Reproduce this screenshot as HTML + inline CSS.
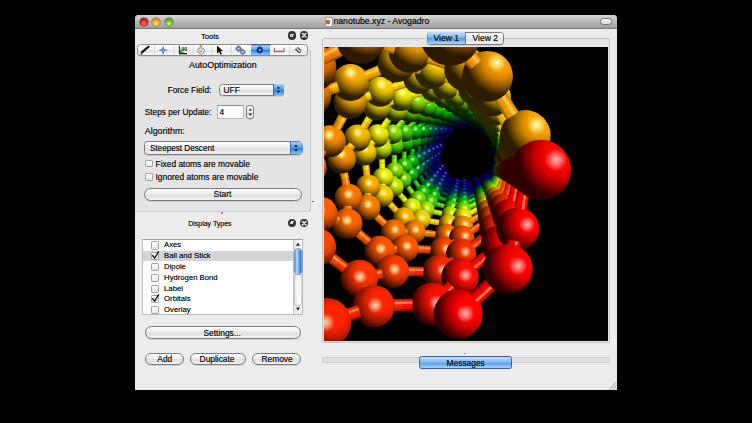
<!DOCTYPE html>
<html>
<head>
<meta charset="utf-8">
<title>nanotube.xyz - Avogadro</title>
<style>
html,body{margin:0;padding:0;background:#000;}
body{width:752px;height:423px;position:relative;overflow:hidden;font-family:"Liberation Sans",sans-serif;color:#111;}
.a{position:absolute;}
#win{left:135px;top:15px;width:482px;height:374.5px;background:#ececec;border-radius:4px 4px 0 0;}
#tbar{left:135px;top:15px;width:482px;height:12.5px;background:linear-gradient(#d6d6d6,#bcbcbc 45%,#a0a0a0);border-bottom:1px solid #7a7a7a;border-radius:4px 4px 0 0;}
.t{position:absolute;white-space:nowrap;line-height:10px;height:10px;color:#101010;text-shadow:0 0 0.5px rgba(0,0,0,.6);}
.tl{position:absolute;border-radius:50%;width:8.2px;height:8.2px;top:17.5px;}
.pill{position:absolute;border:0.8px solid #7c7c7c;background:linear-gradient(#ffffff,#ececec 48%,#dedede 52%,#f2f2f2);border-radius:7px;box-shadow:0 0.6px 0.6px rgba(0,0,0,.22);box-sizing:border-box;}
.cb{position:absolute;width:7px;height:7px;border:0.8px solid #a2a2a2;background:linear-gradient(#ffffff,#e4e4e4);border-radius:1.2px;box-sizing:border-box;}
.dk{position:absolute;width:8.4px;height:8.4px;border-radius:50%;background:#353535;}
</style>
</head>
<body>
<div class="a" id="win"></div>
<div class="a" id="tbar"></div>
<!-- traffic lights -->
<div class="tl" style="left:139.8px;background:radial-gradient(circle at 50% 70%,#ff8a80 0,#e0231c 45%,#8e0f0a 100%);box-shadow:0 0 0 0.5px #6b1410;"></div>
<div class="tl" style="left:152.3px;background:radial-gradient(circle at 50% 70%,#ffe9a0 0,#f0a820 45%,#a86508 100%);box-shadow:0 0 0 0.5px #8a5a10;"></div>
<div class="tl" style="left:165.1px;background:radial-gradient(circle at 50% 70%,#d8f5a0 0,#6cc030 45%,#2e7a10 100%);box-shadow:0 0 0 0.5px #3a6a1a;"></div>
<!-- title -->
<div class="a" style="left:324.5px;top:17px;width:6px;height:8px;background:#f4f4f4;border:0.5px solid #999;"></div>
<div class="a" style="left:326px;top:19.5px;width:3.5px;height:4px;background:#d0612a;border-radius:1px;"></div>
<div class="t" style="left:333.4px;top:16.3px;font-size:8.7px;">nanotube.xyz - Avogadro</div>
<div class="a" style="left:600px;top:18.4px;width:12px;height:6.4px;border-radius:3.2px;background:linear-gradient(#fafafa,#d8d8d8);border:0.7px solid #777;box-sizing:border-box;"></div>

<!-- Tools dock -->
<div class="t" style="left:200.9px;top:31.7px;font-size:7.71px;">Tools</div>
<div class="dk" style="left:287.5px;top:31.4px;"></div>
<div class="dk" style="left:300.1px;top:31.4px;"></div>
<div class="a" style="left:289.7px;top:34.4px;width:3.6px;height:2.6px;border:0.8px solid #e8e8e8;border-radius:0.8px;box-sizing:border-box;"></div>
<div class="a" style="left:290.6px;top:33.6px;width:3.4px;height:1px;background:#e8e8e8;"></div>
<svg class="a" style="left:300.1px;top:31.4px;" width="8.4" height="8.4" viewBox="0 0 8.4 8.4"><path d="M2.5 2.5L5.9 5.9M5.9 2.5L2.5 5.9" stroke="#f0f0f0" stroke-width="1.5" stroke-linecap="round"/></svg>

<!-- group box -->
<div class="a" style="left:135px;top:50px;width:175.5px;height:161.5px;background:#e4e4e4;border:0.8px solid #c9c9c9;border-top:none;border-left:none;border-radius:0 0 3px 0;box-sizing:border-box;"></div>
<!-- toolbar -->
<div class="a" style="left:137.3px;top:44.4px;width:170.8px;height:11.6px;background:linear-gradient(#ffffff,#f4f4f4 50%,#e6e6e6 52%,#f6f6f6);border:0.8px solid #8c8c8c;border-radius:3.5px;box-sizing:border-box;box-shadow:0 0.6px 0.6px rgba(0,0,0,.2);"></div>
<div class="a" style="left:251.3px;top:45.1px;width:19px;height:10.2px;background:linear-gradient(#bcdcf8,#5aa2ea 50%,#2f86e0 52%,#8cc8f8);"></div>
<svg class="a" style="left:135px;top:40px;" width="180" height="20" viewBox="135 40 180 20">
<g stroke="#c4c4c4" stroke-width="0.6"><path d="M154.6 45.2V55.2M174 45.2V55.2M193.3 45.2V55.2M212 45.2V55.2M231.4 45.2V55.2M289.7 45.2V55.2"/></g>
<rect x="251.3" y="44.4" width="19.5" height="0.9" fill="#2a3f9a"/>
<!-- pencil -->
<path d="M141.6 52.6L148.6 46.6" stroke="#151515" stroke-width="2.1" stroke-linecap="round"/>
<path d="M140.2 54.2L141.9 51.9L142.9 53.1z" fill="#333"/>
<path d="M140 54.6L143 54.2" stroke="#555" stroke-width="0.5"/>
<!-- navigate star -->
<path d="M163.1 45.2L164.2 49.1L168 50.2L164.2 51.3L163.1 55.2L162 51.3L158.2 50.2L162 49.1z" fill="#2f7df0"/>
<circle cx="163.1" cy="50.2" r="1" fill="#8ec0ff"/>
<!-- bond centric -->
<path d="M179.4 45.8V53.6H187" stroke="#1a1a1a" stroke-width="1.1" fill="none"/>
<path d="M180 49.5L184.2 53.1H180z" fill="#2fae2f"/>
<text x="181.3" y="50.8" font-family="Liberation Sans" font-size="5.4" font-weight="bold" fill="#222">90</text>
<!-- hand -->
<path d="M197.6 49.6c0-1.2 1.2-1.6 2-0.9l0.5-2.8c0.2-0.8 1.2-0.7 1.3 0.1l0.1 2.3 2.2 0.7c0.7 0.3 1 0.9 0.8 1.6l-0.8 2.2c-0.3 0.8-1 1.1-1.8 1.1h-1.7c-0.8 0-1.3-0.4-1.7-1z" fill="#e8e4dc" stroke="#555" stroke-width="0.6"/>
<path d="M199.4 51.2h2.6" stroke="#666" stroke-width="0.9"/>
<path d="M200.3 46.3l0.9 0.1" stroke="#c89030" stroke-width="1.2"/>
<!-- arrow cursor -->
<path d="M217 45.4L217 53.6L219 51.8L220.5 54.8L221.9 54.1L220.4 51.2L223 51z" fill="#0a0a0a"/>
<!-- gears -->
<g fill="#6f86b8" stroke="#3e5078" stroke-width="0.5"><circle cx="238.6" cy="48.6" r="2.5"/><circle cx="242.6" cy="52" r="2.3"/></g>
<g fill="#dfe6f4"><circle cx="238.6" cy="48.6" r="0.9"/><circle cx="242.6" cy="52" r="0.9"/></g>
<path d="M238.6 45.5v0.8M238.6 51v0.8M235.5 48.6h0.8M241 48.6h0.7M242.6 49v0.7M242.6 54.4v0.6M245 52h0.7" stroke="#3e5078" stroke-width="1"/>
<!-- selected gear -->
<g transform="translate(259.7 49.9)"><circle r="2.7" fill="#0f2a8c"/><g stroke="#0f2a8c" stroke-width="1.3"><path d="M0 -3.6V3.6M-3.6 0H3.6M-2.55 -2.55L2.55 2.55M-2.55 2.55L2.55 -2.55"/></g><circle r="1.1" fill="#6fb0f0"/></g>
<!-- ruler -->
<path d="M274.4 47.8V51.7H284V47.8" fill="none" stroke="#555" stroke-width="0.9"/>
<path d="M276.3 50.2V51.4M278.2 50.2V51.4M280.1 50.2V51.4M282 50.2V51.4" stroke="#e04848" stroke-width="0.7"/>
<!-- align -->
<path d="M295.6 49.2L299.6 52.8M297.4 47.4L300.8 50.4" stroke="#151515" stroke-width="1.1"/>
<path d="M295.2 50.6L296.4 48.4M299.8 53.2L301.2 50.8" stroke="#333" stroke-width="0.6"/>
</svg>


<div class="t" style="left:189px;top:59.6px;font-size:8.9px;">AutoOptimization</div>
<div class="t" style="left:167.7px;top:85.7px;font-size:8.28px;">Force Field:</div>
<div class="t" style="left:144.8px;top:107.7px;font-size:8.28px;">Steps per Update:</div>
<div class="t" style="left:144.8px;top:125.5px;font-size:8.89px;">Algorithm:</div>

<!-- UFF combo -->
<div class="pill" style="left:218.8px;top:83.8px;width:65.2px;height:12.6px;border-radius:3.5px;"></div>
<div class="a" style="left:272.8px;top:84.4px;width:10.6px;height:11.4px;border-radius:0 3px 3px 0;background:linear-gradient(#a8d0f8,#4a96e8 50%,#2a7ede 52%,#86c4f8);border-left:0.6px solid #3a6cb0;"></div>
<svg class="a" style="left:272.8px;top:84.4px;" width="10.6" height="11.4" viewBox="0 0 10.6 11.4"><path d="M3.4 4.6L5.4 2.4L7.4 4.6zM3.4 6.8L5.4 9L7.4 6.8z" fill="#101820"/></svg>
<div class="t" style="left:223.6px;top:85.3px;font-size:8.3px;">UFF</div>

<!-- spinbox -->
<div class="a" style="left:216.5px;top:105px;width:27px;height:14px;background:#fff;border:0.8px solid #b8b8b8;border-top-color:#8e8e8e;box-sizing:border-box;"></div>
<div class="t" style="left:219.6px;top:107.3px;font-size:8.3px;">4</div>
<div class="pill" style="left:245.7px;top:105px;width:8.6px;height:14px;border-radius:3px;"></div>
<svg class="a" style="left:245.7px;top:105px;" width="8.6" height="14" viewBox="0 0 8.6 14"><path d="M2.6 5.6L4.3 3.4L6 5.6zM2.6 8.6L4.3 10.8L6 8.6z" fill="#151515"/></svg>

<!-- Steepest Descent combo -->
<div class="pill" style="left:144.2px;top:141.3px;width:158px;height:13.3px;border-radius:3.5px;"></div>
<div class="a" style="left:289.6px;top:141.9px;width:12px;height:12.1px;border-radius:0 3px 3px 0;background:linear-gradient(#a8d0f8,#4a96e8 50%,#2a7ede 52%,#86c4f8);border-left:0.6px solid #3a6cb0;"></div>
<svg class="a" style="left:289.6px;top:141.9px;" width="12" height="12.1" viewBox="0 0 12 12.1"><path d="M4 5L6 2.7L8 5zM4 7.1L6 9.4L8 7.1z" fill="#101820"/></svg>
<div class="t" style="left:149.9px;top:143.5px;font-size:8.16px;">Steepest Descent</div>

<!-- checkboxes -->
<div class="cb" style="left:145.4px;top:159.5px;width:7.8px;height:7.8px;"></div>
<div class="t" style="left:155.5px;top:158.6px;font-size:8.42px;">Fixed atoms are movable</div>
<div class="cb" style="left:145.4px;top:172.8px;width:7.8px;height:7.8px;"></div>
<div class="t" style="left:155.5px;top:171.9px;font-size:8.46px;">Ignored atoms are movable</div>

<!-- Start -->
<div class="pill" style="left:144.2px;top:188px;width:158px;height:12.9px;"></div>
<div class="t" style="left:213.6px;top:189.1px;font-size:8.4px;">Start</div>

<!-- splitter marks -->
<div class="a" style="left:311.6px;top:200.6px;width:2.2px;height:1.6px;background:#444;border-radius:1px 1px 0 0;"></div>
<div class="a" style="left:221.3px;top:212.2px;width:2.2px;height:1.4px;background:#777;border-radius:1px 1px 0 0;"></div>
<div class="a" style="left:464.3px;top:352.6px;width:2.2px;height:1.4px;background:#777;border-radius:1px 1px 0 0;"></div>

<!-- Display Types dock -->
<div class="t" style="left:188.2px;top:218.6px;font-size:6.99px;">Display Types</div>
<div class="dk" style="left:287.5px;top:218.5px;"></div>
<div class="dk" style="left:300.1px;top:218.5px;"></div>
<div class="a" style="left:289.7px;top:221.5px;width:3.6px;height:2.6px;border:0.8px solid #e8e8e8;border-radius:0.8px;box-sizing:border-box;"></div>
<div class="a" style="left:290.6px;top:220.7px;width:3.4px;height:1px;background:#e8e8e8;"></div>
<svg class="a" style="left:300.1px;top:218.5px;" width="8.4" height="8.4" viewBox="0 0 8.4 8.4"><path d="M2.5 2.5L5.9 5.9M5.9 2.5L2.5 5.9" stroke="#f0f0f0" stroke-width="1.5" stroke-linecap="round"/></svg>

<!-- list -->
<div class="a" style="left:142.2px;top:238.6px;width:160.5px;height:76.6px;background:#fff;border:0.8px solid #b8b8b8;border-top-color:#a4a4a4;box-sizing:border-box;overflow:hidden;">
  <div class="a" style="left:0;top:11.3px;width:149.7px;height:10.4px;background:#d4d4d4;"></div>
  <div class="a" style="left:149.7px;top:0;width:10px;height:76px;background:linear-gradient(90deg,#e2e2e2,#fafafa 40%,#f4f4f4);border-left:0.6px solid #c8c8c8;"></div>
</div>
<div class="cb" style="left:150.8px;top:241.3px;width:8.3px;height:8.3px;"></div>
<div class="t" style="left:164.1px;top:240.3px;font-size:7.7px;">Axes</div>
<div class="cb" style="left:150.8px;top:252.1px;width:8.3px;height:8.3px;"></div>
<svg class="a" style="left:150px;top:250.2px;" width="11" height="11" viewBox="0 0 11 11"><path d="M2.6 5.6L4.6 8.2L8.6 1.6" fill="none" stroke="#111" stroke-width="1.3" stroke-linecap="round" stroke-linejoin="round"/></svg>
<div class="t" style="left:164.1px;top:251.1px;font-size:7.7px;">Ball and Stick</div>
<div class="cb" style="left:150.8px;top:262.9px;width:8.3px;height:8.3px;"></div>
<div class="t" style="left:164.1px;top:261.9px;font-size:7.7px;">Dipole</div>
<div class="cb" style="left:150.8px;top:273.8px;width:8.3px;height:8.3px;"></div>
<div class="t" style="left:164.1px;top:272.8px;font-size:7.7px;">Hydrogen Bond</div>
<div class="cb" style="left:150.8px;top:284.6px;width:8.3px;height:8.3px;"></div>
<div class="t" style="left:164.1px;top:283.6px;font-size:7.7px;">Label</div>
<div class="cb" style="left:150.8px;top:295.1px;width:8.3px;height:8.3px;"></div>
<svg class="a" style="left:150px;top:293.2px;" width="11" height="11" viewBox="0 0 11 11"><path d="M2.6 5.6L4.6 8.2L8.6 1.6" fill="none" stroke="#111" stroke-width="1.3" stroke-linecap="round" stroke-linejoin="round"/></svg>
<div class="t" style="left:164.1px;top:294.1px;font-size:7.7px;">Orbitals</div>
<div class="cb" style="left:150.8px;top:305.9px;width:8.3px;height:8.3px;"></div>
<div class="t" style="left:164.1px;top:304.9px;font-size:7.7px;">Overlay</div>
<!-- scrollbar parts -->
<svg class="a" style="left:292.7px;top:239px;" width="10" height="76" viewBox="0 0 10 76">
  <path d="M3 6.8L5 3.6L7 6.8z" fill="#222"/>
  <path d="M3 68.6L5 71.8L7 68.6z" fill="#222"/>
  <rect x="1.3" y="9.6" width="7.6" height="26" rx="3.8" fill="#fff" stroke="#2f62c0" stroke-width="0.8"/>
  <rect x="1.9" y="10.2" width="6.4" height="24.8" rx="3.2" fill="url(#thg)"/>
  <rect x="1.3" y="35" width="7.6" height="32" rx="3.8" fill="none" stroke="#b0b0b0" stroke-width="0.7"/>
  <defs><linearGradient id="thg" x1="0" x2="1" y1="0" y2="0"><stop offset="0" stop-color="#5a90e6"/><stop offset="0.35" stop-color="#c8e0ff"/><stop offset="0.6" stop-color="#6aa4f0"/><stop offset="1" stop-color="#2f6ad0"/></linearGradient></defs>
</svg>

<!-- buttons -->
<div class="pill" style="left:145.3px;top:326.4px;width:155.4px;height:12.2px;"></div>
<div class="t" style="left:203.5px;top:327.6px;font-size:8.4px;">Settings...</div>
<div class="pill" style="left:145.3px;top:352.5px;width:38.9px;height:12.8px;"></div>
<div class="t" style="left:157.3px;top:354px;font-size:8.4px;">Add</div>
<div class="pill" style="left:190.2px;top:352.5px;width:55.5px;height:12.8px;"></div>
<div class="t" style="left:199.6px;top:354px;font-size:8.4px;">Duplicate</div>
<div class="pill" style="left:251.7px;top:352.5px;width:49px;height:12.8px;"></div>
<div class="t" style="left:261.5px;top:354px;font-size:8.4px;">Remove</div>

<!-- view frame -->
<div class="a" style="left:322.3px;top:38.4px;width:287.5px;height:304.4px;background:#e6e6e6;border:0.8px solid #c4c4c4;border-radius:2px;box-sizing:border-box;"></div>
<!-- tabs -->
<div class="pill" style="left:426.9px;top:31.6px;width:77.3px;height:13px;border-radius:3.5px;"></div>
<div class="a" style="left:427.5px;top:32.2px;width:37.5px;height:11.8px;border-radius:3px 0 0 3px;background:linear-gradient(#c4e0fa,#7ab6f0 50%,#4e9ce8 52%,#a4d4fa);border-right:0.6px solid #5a82b8;"></div>
<div class="t" style="left:433.6px;top:33.2px;font-size:8.5px;">View 1</div>
<div class="t" style="left:472.6px;top:33.2px;font-size:8.5px;">View 2</div>

<!-- GL view -->
<div class="a" style="left:324px;top:47px;width:284.4px;height:294.4px;background:#000;overflow:hidden;">
<svg width="284.4" height="294.4" viewBox="0 0 284.4 294.4" style="position:absolute;left:0;top:0"><defs><radialGradient id="hl"><stop offset="0" stop-color="#fff" stop-opacity="0.62"/><stop offset="0.4" stop-color="#fff" stop-opacity="0.3"/><stop offset="1" stop-color="#fff" stop-opacity="0"/></radialGradient><radialGradient id="h2"><stop offset="0" stop-color="#fff" stop-opacity="0.3"/><stop offset="1" stop-color="#fff" stop-opacity="0"/></radialGradient><radialGradient id="s1" cx="0.730" cy="0.241" r="0.74"><stop offset="0" stop-color="#160059"/><stop offset="0.3" stop-color="#160059"/><stop offset="0.49" stop-color="#13004c"/><stop offset="0.68" stop-color="#0d0035"/><stop offset="0.81" stop-color="#080022"/><stop offset="0.93" stop-color="#040010"/></radialGradient><radialGradient id="h0s"><stop offset="0" stop-color="#7c66bf" stop-opacity="1"/><stop offset="0.35" stop-color="#7c66bf" stop-opacity="0.7"/><stop offset="1" stop-color="#7c66bf" stop-opacity="0"/></radialGradient><radialGradient id="s2" cx="0.734" cy="0.231" r="0.74"><stop offset="0" stop-color="#160059"/><stop offset="0.3" stop-color="#160059"/><stop offset="0.49" stop-color="#13004c"/><stop offset="0.68" stop-color="#0d0035"/><stop offset="0.81" stop-color="#080022"/><stop offset="0.93" stop-color="#040010"/></radialGradient><radialGradient id="s3" cx="0.749" cy="0.270" r="0.74"><stop offset="0" stop-color="#160059"/><stop offset="0.3" stop-color="#160059"/><stop offset="0.49" stop-color="#13004c"/><stop offset="0.68" stop-color="#0d0035"/><stop offset="0.81" stop-color="#080022"/><stop offset="0.93" stop-color="#040010"/></radialGradient><radialGradient id="s4" cx="0.760" cy="0.269" r="0.74"><stop offset="0" stop-color="#1a0055"/><stop offset="0.3" stop-color="#1a0055"/><stop offset="0.49" stop-color="#170048"/><stop offset="0.68" stop-color="#100032"/><stop offset="0.81" stop-color="#0a0020"/><stop offset="0.93" stop-color="#05000f"/></radialGradient><radialGradient id="h1s"><stop offset="0" stop-color="#8066bb" stop-opacity="1"/><stop offset="0.35" stop-color="#8066bb" stop-opacity="0.7"/><stop offset="1" stop-color="#8066bb" stop-opacity="0"/></radialGradient><radialGradient id="s5" cx="0.754" cy="0.221" r="0.74"><stop offset="0" stop-color="#12005e"/><stop offset="0.3" stop-color="#12005e"/><stop offset="0.49" stop-color="#0f0050"/><stop offset="0.68" stop-color="#0a0037"/><stop offset="0.81" stop-color="#070023"/><stop offset="0.93" stop-color="#030011"/></radialGradient><radialGradient id="h2s"><stop offset="0" stop-color="#7866c4" stop-opacity="1"/><stop offset="0.35" stop-color="#7866c4" stop-opacity="0.7"/><stop offset="1" stop-color="#7866c4" stop-opacity="0"/></radialGradient><radialGradient id="s6" cx="0.776" cy="0.254" r="0.74"><stop offset="0" stop-color="#1e0050"/><stop offset="0.3" stop-color="#1e0050"/><stop offset="0.49" stop-color="#1a0044"/><stop offset="0.68" stop-color="#12002f"/><stop offset="0.81" stop-color="#0b001e"/><stop offset="0.93" stop-color="#05000e"/></radialGradient><radialGradient id="h3s"><stop offset="0" stop-color="#8466b6" stop-opacity="1"/><stop offset="0.35" stop-color="#8466b6" stop-opacity="0.7"/><stop offset="1" stop-color="#8466b6" stop-opacity="0"/></radialGradient><radialGradient id="s7" cx="0.731" cy="0.258" r="0.74"><stop offset="0" stop-color="#12005e"/><stop offset="0.3" stop-color="#12005e"/><stop offset="0.49" stop-color="#0f0050"/><stop offset="0.68" stop-color="#0a0037"/><stop offset="0.81" stop-color="#070023"/><stop offset="0.93" stop-color="#030011"/></radialGradient><radialGradient id="s8" cx="0.777" cy="0.243" r="0.74"><stop offset="0" stop-color="#1e0050"/><stop offset="0.3" stop-color="#1e0050"/><stop offset="0.49" stop-color="#1a0044"/><stop offset="0.68" stop-color="#12002f"/><stop offset="0.81" stop-color="#0b001e"/><stop offset="0.93" stop-color="#05000e"/></radialGradient><radialGradient id="s9" cx="0.765" cy="0.224" r="0.74"><stop offset="0" stop-color="#12005e"/><stop offset="0.3" stop-color="#12005e"/><stop offset="0.49" stop-color="#0f0050"/><stop offset="0.68" stop-color="#0a0037"/><stop offset="0.81" stop-color="#070023"/><stop offset="0.93" stop-color="#030011"/></radialGradient><radialGradient id="s10" cx="0.728" cy="0.247" r="0.74"><stop offset="0" stop-color="#12005e"/><stop offset="0.3" stop-color="#12005e"/><stop offset="0.49" stop-color="#0f0050"/><stop offset="0.68" stop-color="#0a0037"/><stop offset="0.81" stop-color="#070023"/><stop offset="0.93" stop-color="#030011"/></radialGradient><radialGradient id="s11" cx="0.737" cy="0.227" r="0.74"><stop offset="0" stop-color="#0c0062"/><stop offset="0.3" stop-color="#0c0062"/><stop offset="0.49" stop-color="#0a0054"/><stop offset="0.68" stop-color="#07003a"/><stop offset="0.81" stop-color="#050025"/><stop offset="0.93" stop-color="#020012"/></radialGradient><radialGradient id="h4s"><stop offset="0" stop-color="#7266c8" stop-opacity="1"/><stop offset="0.35" stop-color="#7266c8" stop-opacity="0.7"/><stop offset="1" stop-color="#7266c8" stop-opacity="0"/></radialGradient><radialGradient id="s12" cx="0.744" cy="0.270" r="0.74"><stop offset="0" stop-color="#12005e"/><stop offset="0.3" stop-color="#12005e"/><stop offset="0.49" stop-color="#0f0050"/><stop offset="0.68" stop-color="#0a0037"/><stop offset="0.81" stop-color="#070023"/><stop offset="0.93" stop-color="#030011"/></radialGradient><radialGradient id="s13" cx="0.766" cy="0.267" r="0.74"><stop offset="0" stop-color="#160059"/><stop offset="0.3" stop-color="#160059"/><stop offset="0.49" stop-color="#13004c"/><stop offset="0.68" stop-color="#0d0035"/><stop offset="0.81" stop-color="#080022"/><stop offset="0.93" stop-color="#040010"/></radialGradient><radialGradient id="s14" cx="0.747" cy="0.222" r="0.74"><stop offset="0" stop-color="#0c0062"/><stop offset="0.3" stop-color="#0c0062"/><stop offset="0.49" stop-color="#0a0054"/><stop offset="0.68" stop-color="#07003a"/><stop offset="0.81" stop-color="#050025"/><stop offset="0.93" stop-color="#020012"/></radialGradient><radialGradient id="s15" cx="0.774" cy="0.259" r="0.74"><stop offset="0" stop-color="#1a0055"/><stop offset="0.3" stop-color="#1a0055"/><stop offset="0.49" stop-color="#170048"/><stop offset="0.68" stop-color="#100032"/><stop offset="0.81" stop-color="#0a0020"/><stop offset="0.93" stop-color="#05000f"/></radialGradient><radialGradient id="s16" cx="0.734" cy="0.264" r="0.74"><stop offset="0" stop-color="#0c0062"/><stop offset="0.3" stop-color="#0c0062"/><stop offset="0.49" stop-color="#0a0054"/><stop offset="0.68" stop-color="#07003a"/><stop offset="0.81" stop-color="#050025"/><stop offset="0.93" stop-color="#020012"/></radialGradient><radialGradient id="s17" cx="0.776" cy="0.236" r="0.74"><stop offset="0" stop-color="#060067"/><stop offset="0.3" stop-color="#060067"/><stop offset="0.49" stop-color="#050057"/><stop offset="0.68" stop-color="#04003d"/><stop offset="0.81" stop-color="#020027"/><stop offset="0.93" stop-color="#010012"/></radialGradient><radialGradient id="h5s"><stop offset="0" stop-color="#6c66cd" stop-opacity="1"/><stop offset="0.35" stop-color="#6c66cd" stop-opacity="0.7"/><stop offset="1" stop-color="#6c66cd" stop-opacity="0"/></radialGradient><radialGradient id="s18" cx="0.769" cy="0.227" r="0.74"><stop offset="0" stop-color="#060067"/><stop offset="0.3" stop-color="#060067"/><stop offset="0.49" stop-color="#050057"/><stop offset="0.68" stop-color="#04003d"/><stop offset="0.81" stop-color="#020027"/><stop offset="0.93" stop-color="#010012"/></radialGradient><radialGradient id="s19" cx="0.727" cy="0.242" r="0.74"><stop offset="0" stop-color="#060067"/><stop offset="0.3" stop-color="#060067"/><stop offset="0.49" stop-color="#050057"/><stop offset="0.68" stop-color="#04003d"/><stop offset="0.81" stop-color="#020027"/><stop offset="0.93" stop-color="#010012"/></radialGradient><radialGradient id="s20" cx="0.731" cy="0.231" r="0.74"><stop offset="0" stop-color="#00006b"/><stop offset="0.3" stop-color="#00006b"/><stop offset="0.49" stop-color="#00005b"/><stop offset="0.68" stop-color="#00003f"/><stop offset="0.81" stop-color="#000028"/><stop offset="0.93" stop-color="#000013"/></radialGradient><radialGradient id="h6s"><stop offset="0" stop-color="#6666d1" stop-opacity="1"/><stop offset="0.35" stop-color="#6666d1" stop-opacity="0.7"/><stop offset="1" stop-color="#6666d1" stop-opacity="0"/></radialGradient><radialGradient id="s21" cx="0.749" cy="0.272" r="0.74"><stop offset="0" stop-color="#0c0062"/><stop offset="0.3" stop-color="#0c0062"/><stop offset="0.49" stop-color="#0a0054"/><stop offset="0.68" stop-color="#07003a"/><stop offset="0.81" stop-color="#050025"/><stop offset="0.93" stop-color="#020012"/></radialGradient><radialGradient id="s22" cx="0.761" cy="0.271" r="0.74"><stop offset="0" stop-color="#12005e"/><stop offset="0.3" stop-color="#12005e"/><stop offset="0.49" stop-color="#0f0050"/><stop offset="0.68" stop-color="#0a0037"/><stop offset="0.81" stop-color="#070023"/><stop offset="0.93" stop-color="#030011"/></radialGradient><radialGradient id="s23" cx="0.752" cy="0.220" r="0.74"><stop offset="0" stop-color="#00006b"/><stop offset="0.3" stop-color="#00006b"/><stop offset="0.49" stop-color="#00005b"/><stop offset="0.68" stop-color="#00003f"/><stop offset="0.81" stop-color="#000028"/><stop offset="0.93" stop-color="#000013"/></radialGradient><radialGradient id="s24" cx="0.777" cy="0.254" r="0.74"><stop offset="0" stop-color="#160059"/><stop offset="0.3" stop-color="#160059"/><stop offset="0.49" stop-color="#13004c"/><stop offset="0.68" stop-color="#0d0035"/><stop offset="0.81" stop-color="#080022"/><stop offset="0.93" stop-color="#040010"/></radialGradient><radialGradient id="s25" cx="0.729" cy="0.260" r="0.74"><stop offset="0" stop-color="#060067"/><stop offset="0.3" stop-color="#060067"/><stop offset="0.49" stop-color="#050057"/><stop offset="0.68" stop-color="#04003d"/><stop offset="0.81" stop-color="#020027"/><stop offset="0.93" stop-color="#010012"/></radialGradient><radialGradient id="s26" cx="0.777" cy="0.242" r="0.74"><stop offset="0" stop-color="#1a0055"/><stop offset="0.3" stop-color="#1a0055"/><stop offset="0.49" stop-color="#170048"/><stop offset="0.68" stop-color="#100032"/><stop offset="0.81" stop-color="#0a0020"/><stop offset="0.93" stop-color="#05000f"/></radialGradient><radialGradient id="s27" cx="0.763" cy="0.223" r="0.74"><stop offset="0" stop-color="#00006b"/><stop offset="0.3" stop-color="#00006b"/><stop offset="0.49" stop-color="#00005b"/><stop offset="0.68" stop-color="#00003f"/><stop offset="0.81" stop-color="#000028"/><stop offset="0.93" stop-color="#000013"/></radialGradient><radialGradient id="s28" cx="0.725" cy="0.249" r="0.74"><stop offset="0" stop-color="#060067"/><stop offset="0.3" stop-color="#060067"/><stop offset="0.49" stop-color="#050057"/><stop offset="0.68" stop-color="#04003d"/><stop offset="0.81" stop-color="#020027"/><stop offset="0.93" stop-color="#010012"/></radialGradient><radialGradient id="s29" cx="0.734" cy="0.227" r="0.74"><stop offset="0" stop-color="#00006b"/><stop offset="0.3" stop-color="#00006b"/><stop offset="0.49" stop-color="#00005b"/><stop offset="0.68" stop-color="#00003f"/><stop offset="0.81" stop-color="#000028"/><stop offset="0.93" stop-color="#000013"/></radialGradient><radialGradient id="s30" cx="0.743" cy="0.272" r="0.74"><stop offset="0" stop-color="#060067"/><stop offset="0.3" stop-color="#060067"/><stop offset="0.49" stop-color="#050057"/><stop offset="0.68" stop-color="#04003d"/><stop offset="0.81" stop-color="#020027"/><stop offset="0.93" stop-color="#010012"/></radialGradient><radialGradient id="s31" cx="0.767" cy="0.269" r="0.74"><stop offset="0" stop-color="#0c0062"/><stop offset="0.3" stop-color="#0c0062"/><stop offset="0.49" stop-color="#0a0054"/><stop offset="0.68" stop-color="#07003a"/><stop offset="0.81" stop-color="#050025"/><stop offset="0.93" stop-color="#020012"/></radialGradient><radialGradient id="s32" cx="0.744" cy="0.221" r="0.74"><stop offset="0" stop-color="#000f66"/><stop offset="0.3" stop-color="#000f66"/><stop offset="0.49" stop-color="#000c57"/><stop offset="0.68" stop-color="#00093c"/><stop offset="0.81" stop-color="#000526"/><stop offset="0.93" stop-color="#000312"/></radialGradient><radialGradient id="h7s"><stop offset="0" stop-color="#6675cc" stop-opacity="1"/><stop offset="0.35" stop-color="#6675cc" stop-opacity="0.7"/><stop offset="1" stop-color="#6675cc" stop-opacity="0"/></radialGradient><radialGradient id="s33" cx="0.732" cy="0.266" r="0.74"><stop offset="0" stop-color="#060067"/><stop offset="0.3" stop-color="#060067"/><stop offset="0.49" stop-color="#050057"/><stop offset="0.68" stop-color="#04003d"/><stop offset="0.81" stop-color="#020027"/><stop offset="0.93" stop-color="#010012"/></radialGradient><radialGradient id="s34" cx="0.775" cy="0.259" r="0.74"><stop offset="0" stop-color="#12005e"/><stop offset="0.3" stop-color="#12005e"/><stop offset="0.49" stop-color="#0f0050"/><stop offset="0.68" stop-color="#0a0037"/><stop offset="0.81" stop-color="#070023"/><stop offset="0.93" stop-color="#030011"/></radialGradient><radialGradient id="s35" cx="0.768" cy="0.225" r="0.74"><stop offset="0" stop-color="#000f66"/><stop offset="0.3" stop-color="#000f66"/><stop offset="0.49" stop-color="#000c57"/><stop offset="0.68" stop-color="#00093c"/><stop offset="0.81" stop-color="#000526"/><stop offset="0.93" stop-color="#000312"/></radialGradient><radialGradient id="s36" cx="0.775" cy="0.235" r="0.74"><stop offset="0" stop-color="#000f66"/><stop offset="0.3" stop-color="#000f66"/><stop offset="0.49" stop-color="#000c57"/><stop offset="0.68" stop-color="#00093c"/><stop offset="0.81" stop-color="#000526"/><stop offset="0.93" stop-color="#000312"/></radialGradient><radialGradient id="s37" cx="0.724" cy="0.244" r="0.74"><stop offset="0" stop-color="#00006b"/><stop offset="0.3" stop-color="#00006b"/><stop offset="0.49" stop-color="#00005b"/><stop offset="0.68" stop-color="#00003f"/><stop offset="0.81" stop-color="#000028"/><stop offset="0.93" stop-color="#000013"/></radialGradient><radialGradient id="s38" cx="0.728" cy="0.232" r="0.74"><stop offset="0" stop-color="#000f66"/><stop offset="0.3" stop-color="#000f66"/><stop offset="0.49" stop-color="#000c57"/><stop offset="0.68" stop-color="#00093c"/><stop offset="0.81" stop-color="#000526"/><stop offset="0.93" stop-color="#000312"/></radialGradient><radialGradient id="s39" cx="0.749" cy="0.275" r="0.74"><stop offset="0" stop-color="#00006b"/><stop offset="0.3" stop-color="#00006b"/><stop offset="0.49" stop-color="#00005b"/><stop offset="0.68" stop-color="#00003f"/><stop offset="0.81" stop-color="#000028"/><stop offset="0.93" stop-color="#000013"/></radialGradient><radialGradient id="s40" cx="0.762" cy="0.272" r="0.74"><stop offset="0" stop-color="#060067"/><stop offset="0.3" stop-color="#060067"/><stop offset="0.49" stop-color="#050057"/><stop offset="0.68" stop-color="#04003d"/><stop offset="0.81" stop-color="#020027"/><stop offset="0.93" stop-color="#010012"/></radialGradient><radialGradient id="s41" cx="0.749" cy="0.219" r="0.74"><stop offset="0" stop-color="#000f66"/><stop offset="0.3" stop-color="#000f66"/><stop offset="0.49" stop-color="#000c57"/><stop offset="0.68" stop-color="#00093c"/><stop offset="0.81" stop-color="#000526"/><stop offset="0.93" stop-color="#000312"/></radialGradient><radialGradient id="s42" cx="0.778" cy="0.253" r="0.74"><stop offset="0" stop-color="#0c0062"/><stop offset="0.3" stop-color="#0c0062"/><stop offset="0.49" stop-color="#0a0054"/><stop offset="0.68" stop-color="#07003a"/><stop offset="0.81" stop-color="#050025"/><stop offset="0.93" stop-color="#020012"/></radialGradient><radialGradient id="s43" cx="0.727" cy="0.263" r="0.74"><stop offset="0" stop-color="#00006b"/><stop offset="0.3" stop-color="#00006b"/><stop offset="0.49" stop-color="#00005b"/><stop offset="0.68" stop-color="#00003f"/><stop offset="0.81" stop-color="#000028"/><stop offset="0.93" stop-color="#000013"/></radialGradient><radialGradient id="s44" cx="0.761" cy="0.221" r="0.74"><stop offset="0" stop-color="#000f66"/><stop offset="0.3" stop-color="#000f66"/><stop offset="0.49" stop-color="#000c57"/><stop offset="0.68" stop-color="#00093c"/><stop offset="0.81" stop-color="#000526"/><stop offset="0.93" stop-color="#000312"/></radialGradient><radialGradient id="s45" cx="0.778" cy="0.240" r="0.74"><stop offset="0" stop-color="#000f66"/><stop offset="0.3" stop-color="#000f66"/><stop offset="0.49" stop-color="#000c57"/><stop offset="0.68" stop-color="#00093c"/><stop offset="0.81" stop-color="#000526"/><stop offset="0.93" stop-color="#000312"/></radialGradient><radialGradient id="s46" cx="0.722" cy="0.251" r="0.74"><stop offset="0" stop-color="#000f66"/><stop offset="0.3" stop-color="#000f66"/><stop offset="0.49" stop-color="#000c57"/><stop offset="0.68" stop-color="#00093c"/><stop offset="0.81" stop-color="#000526"/><stop offset="0.93" stop-color="#000312"/></radialGradient><radialGradient id="s47" cx="0.730" cy="0.227" r="0.74"><stop offset="0" stop-color="#001f5e"/><stop offset="0.3" stop-color="#001f5e"/><stop offset="0.49" stop-color="#001b50"/><stop offset="0.68" stop-color="#001237"/><stop offset="0.81" stop-color="#000c23"/><stop offset="0.93" stop-color="#000611"/></radialGradient><radialGradient id="h8s"><stop offset="0" stop-color="#6685c4" stop-opacity="1"/><stop offset="0.35" stop-color="#6685c4" stop-opacity="0.7"/><stop offset="1" stop-color="#6685c4" stop-opacity="0"/></radialGradient><radialGradient id="s48" cx="0.743" cy="0.275" r="0.74"><stop offset="0" stop-color="#000f66"/><stop offset="0.3" stop-color="#000f66"/><stop offset="0.49" stop-color="#000c57"/><stop offset="0.68" stop-color="#00093c"/><stop offset="0.81" stop-color="#000526"/><stop offset="0.93" stop-color="#000312"/></radialGradient><radialGradient id="s49" cx="0.741" cy="0.220" r="0.74"><stop offset="0" stop-color="#001f5e"/><stop offset="0.3" stop-color="#001f5e"/><stop offset="0.49" stop-color="#001b50"/><stop offset="0.68" stop-color="#001237"/><stop offset="0.81" stop-color="#000c23"/><stop offset="0.93" stop-color="#000611"/></radialGradient><radialGradient id="s50" cx="0.768" cy="0.270" r="0.74"><stop offset="0" stop-color="#00006b"/><stop offset="0.3" stop-color="#00006b"/><stop offset="0.49" stop-color="#00005b"/><stop offset="0.68" stop-color="#00003f"/><stop offset="0.81" stop-color="#000028"/><stop offset="0.93" stop-color="#000013"/></radialGradient><radialGradient id="s51" cx="0.731" cy="0.269" r="0.74"><stop offset="0" stop-color="#000f66"/><stop offset="0.3" stop-color="#000f66"/><stop offset="0.49" stop-color="#000c57"/><stop offset="0.68" stop-color="#00093c"/><stop offset="0.81" stop-color="#000526"/><stop offset="0.93" stop-color="#000312"/></radialGradient><radialGradient id="s52" cx="0.776" cy="0.259" r="0.74"><stop offset="0" stop-color="#060067"/><stop offset="0.3" stop-color="#060067"/><stop offset="0.49" stop-color="#050057"/><stop offset="0.68" stop-color="#04003d"/><stop offset="0.81" stop-color="#020027"/><stop offset="0.93" stop-color="#010012"/></radialGradient><radialGradient id="s53" cx="0.766" cy="0.223" r="0.74"><stop offset="0" stop-color="#001f5e"/><stop offset="0.3" stop-color="#001f5e"/><stop offset="0.49" stop-color="#001b50"/><stop offset="0.68" stop-color="#001237"/><stop offset="0.81" stop-color="#000c23"/><stop offset="0.93" stop-color="#000611"/></radialGradient><radialGradient id="s54" cx="0.775" cy="0.233" r="0.74"><stop offset="0" stop-color="#001f5e"/><stop offset="0.3" stop-color="#001f5e"/><stop offset="0.49" stop-color="#001b50"/><stop offset="0.68" stop-color="#001237"/><stop offset="0.81" stop-color="#000c23"/><stop offset="0.93" stop-color="#000611"/></radialGradient><radialGradient id="s55" cx="0.720" cy="0.245" r="0.74"><stop offset="0" stop-color="#001f5e"/><stop offset="0.3" stop-color="#001f5e"/><stop offset="0.49" stop-color="#001b50"/><stop offset="0.68" stop-color="#001237"/><stop offset="0.81" stop-color="#000c23"/><stop offset="0.93" stop-color="#000611"/></radialGradient><radialGradient id="s56" cx="0.724" cy="0.232" r="0.74"><stop offset="0" stop-color="#001f5e"/><stop offset="0.3" stop-color="#001f5e"/><stop offset="0.49" stop-color="#001b50"/><stop offset="0.68" stop-color="#001237"/><stop offset="0.81" stop-color="#000c23"/><stop offset="0.93" stop-color="#000611"/></radialGradient><radialGradient id="s57" cx="0.749" cy="0.278" r="0.74"><stop offset="0" stop-color="#000f66"/><stop offset="0.3" stop-color="#000f66"/><stop offset="0.49" stop-color="#000c57"/><stop offset="0.68" stop-color="#00093c"/><stop offset="0.81" stop-color="#000526"/><stop offset="0.93" stop-color="#000312"/></radialGradient><radialGradient id="s58" cx="0.762" cy="0.274" r="0.74"><stop offset="0" stop-color="#00006b"/><stop offset="0.3" stop-color="#00006b"/><stop offset="0.49" stop-color="#00005b"/><stop offset="0.68" stop-color="#00003f"/><stop offset="0.81" stop-color="#000028"/><stop offset="0.93" stop-color="#000013"/></radialGradient><radialGradient id="s59" cx="0.746" cy="0.218" r="0.74"><stop offset="0" stop-color="#001f5e"/><stop offset="0.3" stop-color="#001f5e"/><stop offset="0.49" stop-color="#001b50"/><stop offset="0.68" stop-color="#001237"/><stop offset="0.81" stop-color="#000c23"/><stop offset="0.93" stop-color="#000611"/></radialGradient><radialGradient id="s60" cx="0.725" cy="0.266" r="0.74"><stop offset="0" stop-color="#001f5e"/><stop offset="0.3" stop-color="#001f5e"/><stop offset="0.49" stop-color="#001b50"/><stop offset="0.68" stop-color="#001237"/><stop offset="0.81" stop-color="#000c23"/><stop offset="0.93" stop-color="#000611"/></radialGradient><radialGradient id="s61" cx="0.778" cy="0.253" r="0.74"><stop offset="0" stop-color="#00006b"/><stop offset="0.3" stop-color="#00006b"/><stop offset="0.49" stop-color="#00005b"/><stop offset="0.68" stop-color="#00003f"/><stop offset="0.81" stop-color="#000028"/><stop offset="0.93" stop-color="#000013"/></radialGradient><radialGradient id="s62" cx="0.759" cy="0.219" r="0.74"><stop offset="0" stop-color="#001f5e"/><stop offset="0.3" stop-color="#001f5e"/><stop offset="0.49" stop-color="#001b50"/><stop offset="0.68" stop-color="#001237"/><stop offset="0.81" stop-color="#000c23"/><stop offset="0.93" stop-color="#000611"/></radialGradient><radialGradient id="s63" cx="0.778" cy="0.239" r="0.74"><stop offset="0" stop-color="#001f5e"/><stop offset="0.3" stop-color="#001f5e"/><stop offset="0.49" stop-color="#001b50"/><stop offset="0.68" stop-color="#001237"/><stop offset="0.81" stop-color="#000c23"/><stop offset="0.93" stop-color="#000611"/></radialGradient><radialGradient id="s64" cx="0.719" cy="0.253" r="0.74"><stop offset="0" stop-color="#001f5e"/><stop offset="0.3" stop-color="#001f5e"/><stop offset="0.49" stop-color="#001b50"/><stop offset="0.68" stop-color="#001237"/><stop offset="0.81" stop-color="#000c23"/><stop offset="0.93" stop-color="#000611"/></radialGradient><radialGradient id="s65" cx="0.726" cy="0.227" r="0.74"><stop offset="0" stop-color="#003254"/><stop offset="0.3" stop-color="#003254"/><stop offset="0.49" stop-color="#002b47"/><stop offset="0.68" stop-color="#001e31"/><stop offset="0.81" stop-color="#001320"/><stop offset="0.93" stop-color="#00090f"/></radialGradient><radialGradient id="h9s"><stop offset="0" stop-color="#6698ba" stop-opacity="1"/><stop offset="0.35" stop-color="#6698ba" stop-opacity="0.7"/><stop offset="1" stop-color="#6698ba" stop-opacity="0"/></radialGradient><radialGradient id="s66" cx="0.737" cy="0.219" r="0.74"><stop offset="0" stop-color="#003254"/><stop offset="0.3" stop-color="#003254"/><stop offset="0.49" stop-color="#002b47"/><stop offset="0.68" stop-color="#001e31"/><stop offset="0.81" stop-color="#001320"/><stop offset="0.93" stop-color="#00090f"/></radialGradient><radialGradient id="s67" cx="0.742" cy="0.278" r="0.74"><stop offset="0" stop-color="#001f5e"/><stop offset="0.3" stop-color="#001f5e"/><stop offset="0.49" stop-color="#001b50"/><stop offset="0.68" stop-color="#001237"/><stop offset="0.81" stop-color="#000c23"/><stop offset="0.93" stop-color="#000611"/></radialGradient><radialGradient id="s68" cx="0.769" cy="0.271" r="0.74"><stop offset="0" stop-color="#000f66"/><stop offset="0.3" stop-color="#000f66"/><stop offset="0.49" stop-color="#000c57"/><stop offset="0.68" stop-color="#00093c"/><stop offset="0.81" stop-color="#000526"/><stop offset="0.93" stop-color="#000312"/></radialGradient><radialGradient id="s69" cx="0.729" cy="0.273" r="0.74"><stop offset="0" stop-color="#001f5e"/><stop offset="0.3" stop-color="#001f5e"/><stop offset="0.49" stop-color="#001b50"/><stop offset="0.68" stop-color="#001237"/><stop offset="0.81" stop-color="#000c23"/><stop offset="0.93" stop-color="#000611"/></radialGradient><radialGradient id="s70" cx="0.777" cy="0.259" r="0.74"><stop offset="0" stop-color="#00006b"/><stop offset="0.3" stop-color="#00006b"/><stop offset="0.49" stop-color="#00005b"/><stop offset="0.68" stop-color="#00003f"/><stop offset="0.81" stop-color="#000028"/><stop offset="0.93" stop-color="#000013"/></radialGradient><radialGradient id="s71" cx="0.765" cy="0.221" r="0.74"><stop offset="0" stop-color="#003254"/><stop offset="0.3" stop-color="#003254"/><stop offset="0.49" stop-color="#002b47"/><stop offset="0.68" stop-color="#001e31"/><stop offset="0.81" stop-color="#001320"/><stop offset="0.93" stop-color="#00090f"/></radialGradient><radialGradient id="s72" cx="0.775" cy="0.231" r="0.74"><stop offset="0" stop-color="#003254"/><stop offset="0.3" stop-color="#003254"/><stop offset="0.49" stop-color="#002b47"/><stop offset="0.68" stop-color="#001e31"/><stop offset="0.81" stop-color="#001320"/><stop offset="0.93" stop-color="#00090f"/></radialGradient><radialGradient id="s73" cx="0.716" cy="0.248" r="0.74"><stop offset="0" stop-color="#003254"/><stop offset="0.3" stop-color="#003254"/><stop offset="0.49" stop-color="#002b47"/><stop offset="0.68" stop-color="#001e31"/><stop offset="0.81" stop-color="#001320"/><stop offset="0.93" stop-color="#00090f"/></radialGradient><radialGradient id="s74" cx="0.720" cy="0.233" r="0.74"><stop offset="0" stop-color="#004747"/><stop offset="0.3" stop-color="#004747"/><stop offset="0.49" stop-color="#003d3d"/><stop offset="0.68" stop-color="#002a2a"/><stop offset="0.81" stop-color="#001b1b"/><stop offset="0.93" stop-color="#000d0d"/></radialGradient><radialGradient id="h10s"><stop offset="0" stop-color="#66adad" stop-opacity="1"/><stop offset="0.35" stop-color="#66adad" stop-opacity="0.7"/><stop offset="1" stop-color="#66adad" stop-opacity="0"/></radialGradient><radialGradient id="s75" cx="0.749" cy="0.281" r="0.74"><stop offset="0" stop-color="#001f5e"/><stop offset="0.3" stop-color="#001f5e"/><stop offset="0.49" stop-color="#001b50"/><stop offset="0.68" stop-color="#001237"/><stop offset="0.81" stop-color="#000c23"/><stop offset="0.93" stop-color="#000611"/></radialGradient><radialGradient id="s76" cx="0.763" cy="0.276" r="0.74"><stop offset="0" stop-color="#000f66"/><stop offset="0.3" stop-color="#000f66"/><stop offset="0.49" stop-color="#000c57"/><stop offset="0.68" stop-color="#00093c"/><stop offset="0.81" stop-color="#000526"/><stop offset="0.93" stop-color="#000312"/></radialGradient><radialGradient id="s77" cx="0.742" cy="0.216" r="0.74"><stop offset="0" stop-color="#004747"/><stop offset="0.3" stop-color="#004747"/><stop offset="0.49" stop-color="#003d3d"/><stop offset="0.68" stop-color="#002a2a"/><stop offset="0.81" stop-color="#001b1b"/><stop offset="0.93" stop-color="#000d0d"/></radialGradient><radialGradient id="s78" cx="0.722" cy="0.269" r="0.74"><stop offset="0" stop-color="#003254"/><stop offset="0.3" stop-color="#003254"/><stop offset="0.49" stop-color="#002b47"/><stop offset="0.68" stop-color="#001e31"/><stop offset="0.81" stop-color="#001320"/><stop offset="0.93" stop-color="#00090f"/></radialGradient><radialGradient id="s79" cx="0.779" cy="0.252" r="0.74"><stop offset="0" stop-color="#00006b"/><stop offset="0.3" stop-color="#00006b"/><stop offset="0.49" stop-color="#00005b"/><stop offset="0.68" stop-color="#00003f"/><stop offset="0.81" stop-color="#000028"/><stop offset="0.93" stop-color="#000013"/></radialGradient><radialGradient id="s80" cx="0.757" cy="0.217" r="0.74"><stop offset="0" stop-color="#004747"/><stop offset="0.3" stop-color="#004747"/><stop offset="0.49" stop-color="#003d3d"/><stop offset="0.68" stop-color="#002a2a"/><stop offset="0.81" stop-color="#001b1b"/><stop offset="0.93" stop-color="#000d0d"/></radialGradient><radialGradient id="s81" cx="0.778" cy="0.237" r="0.74"><stop offset="0" stop-color="#004747"/><stop offset="0.3" stop-color="#004747"/><stop offset="0.49" stop-color="#003d3d"/><stop offset="0.68" stop-color="#002a2a"/><stop offset="0.81" stop-color="#001b1b"/><stop offset="0.93" stop-color="#000d0d"/></radialGradient><radialGradient id="s82" cx="0.715" cy="0.256" r="0.74"><stop offset="0" stop-color="#004747"/><stop offset="0.3" stop-color="#004747"/><stop offset="0.49" stop-color="#003d3d"/><stop offset="0.68" stop-color="#002a2a"/><stop offset="0.81" stop-color="#001b1b"/><stop offset="0.93" stop-color="#000d0d"/></radialGradient><radialGradient id="s83" cx="0.721" cy="0.227" r="0.74"><stop offset="0" stop-color="#006039"/><stop offset="0.3" stop-color="#006039"/><stop offset="0.49" stop-color="#005231"/><stop offset="0.68" stop-color="#003822"/><stop offset="0.81" stop-color="#002416"/><stop offset="0.93" stop-color="#00110a"/></radialGradient><radialGradient id="h11s"><stop offset="0" stop-color="#66c69f" stop-opacity="1"/><stop offset="0.35" stop-color="#66c69f" stop-opacity="0.7"/><stop offset="1" stop-color="#66c69f" stop-opacity="0"/></radialGradient><radialGradient id="s84" cx="0.733" cy="0.218" r="0.74"><stop offset="0" stop-color="#006039"/><stop offset="0.3" stop-color="#006039"/><stop offset="0.49" stop-color="#005231"/><stop offset="0.68" stop-color="#003822"/><stop offset="0.81" stop-color="#002416"/><stop offset="0.93" stop-color="#00110a"/></radialGradient><radialGradient id="s85" cx="0.741" cy="0.282" r="0.74"><stop offset="0" stop-color="#004747"/><stop offset="0.3" stop-color="#004747"/><stop offset="0.49" stop-color="#003d3d"/><stop offset="0.68" stop-color="#002a2a"/><stop offset="0.81" stop-color="#001b1b"/><stop offset="0.93" stop-color="#000d0d"/></radialGradient><radialGradient id="s86" cx="0.770" cy="0.273" r="0.74"><stop offset="0" stop-color="#003254"/><stop offset="0.3" stop-color="#003254"/><stop offset="0.49" stop-color="#002b47"/><stop offset="0.68" stop-color="#001e31"/><stop offset="0.81" stop-color="#001320"/><stop offset="0.93" stop-color="#00090f"/></radialGradient><radialGradient id="s87" cx="0.727" cy="0.276" r="0.74"><stop offset="0" stop-color="#004747"/><stop offset="0.3" stop-color="#004747"/><stop offset="0.49" stop-color="#003d3d"/><stop offset="0.68" stop-color="#002a2a"/><stop offset="0.81" stop-color="#001b1b"/><stop offset="0.93" stop-color="#000d0d"/></radialGradient><radialGradient id="s88" cx="0.778" cy="0.259" r="0.74"><stop offset="0" stop-color="#001f5e"/><stop offset="0.3" stop-color="#001f5e"/><stop offset="0.49" stop-color="#001b50"/><stop offset="0.68" stop-color="#001237"/><stop offset="0.81" stop-color="#000c23"/><stop offset="0.93" stop-color="#000611"/></radialGradient><radialGradient id="s89" cx="0.763" cy="0.219" r="0.74"><stop offset="0" stop-color="#006039"/><stop offset="0.3" stop-color="#006039"/><stop offset="0.49" stop-color="#005231"/><stop offset="0.68" stop-color="#003822"/><stop offset="0.81" stop-color="#002416"/><stop offset="0.93" stop-color="#00110a"/></radialGradient><radialGradient id="s90" cx="0.774" cy="0.229" r="0.74"><stop offset="0" stop-color="#006039"/><stop offset="0.3" stop-color="#006039"/><stop offset="0.49" stop-color="#005231"/><stop offset="0.68" stop-color="#003822"/><stop offset="0.81" stop-color="#002416"/><stop offset="0.93" stop-color="#00110a"/></radialGradient><radialGradient id="s91" cx="0.712" cy="0.250" r="0.74"><stop offset="0" stop-color="#006039"/><stop offset="0.3" stop-color="#006039"/><stop offset="0.49" stop-color="#005231"/><stop offset="0.68" stop-color="#003822"/><stop offset="0.81" stop-color="#002416"/><stop offset="0.93" stop-color="#00110a"/></radialGradient><radialGradient id="s92" cx="0.714" cy="0.234" r="0.74"><stop offset="0" stop-color="#007a29"/><stop offset="0.3" stop-color="#007a29"/><stop offset="0.49" stop-color="#006823"/><stop offset="0.68" stop-color="#004818"/><stop offset="0.81" stop-color="#002e0f"/><stop offset="0.93" stop-color="#001607"/></radialGradient><radialGradient id="h12s"><stop offset="0" stop-color="#66e08f" stop-opacity="1"/><stop offset="0.35" stop-color="#66e08f" stop-opacity="0.7"/><stop offset="1" stop-color="#66e08f" stop-opacity="0"/></radialGradient><radialGradient id="s93" cx="0.749" cy="0.284" r="0.74"><stop offset="0" stop-color="#006039"/><stop offset="0.3" stop-color="#006039"/><stop offset="0.49" stop-color="#005231"/><stop offset="0.68" stop-color="#003822"/><stop offset="0.81" stop-color="#002416"/><stop offset="0.93" stop-color="#00110a"/></radialGradient><radialGradient id="h13b"><stop offset="0" stop-color="#b2ffec" stop-opacity="1"/><stop offset="0.35" stop-color="#b2ffec" stop-opacity="0.7"/><stop offset="1" stop-color="#b2ffec" stop-opacity="0"/></radialGradient><radialGradient id="s94" cx="0.764" cy="0.279" r="0.74"><stop offset="0" stop-color="#006039"/><stop offset="0.3" stop-color="#006039"/><stop offset="0.49" stop-color="#005231"/><stop offset="0.68" stop-color="#003822"/><stop offset="0.81" stop-color="#002416"/><stop offset="0.93" stop-color="#00110a"/></radialGradient><radialGradient id="s95" cx="0.738" cy="0.214" r="0.74"><stop offset="0" stop-color="#007a29"/><stop offset="0.3" stop-color="#007a29"/><stop offset="0.49" stop-color="#006823"/><stop offset="0.68" stop-color="#004818"/><stop offset="0.81" stop-color="#002e0f"/><stop offset="0.93" stop-color="#001607"/></radialGradient><radialGradient id="h14b"><stop offset="0" stop-color="#b2ffdb" stop-opacity="1"/><stop offset="0.35" stop-color="#b2ffdb" stop-opacity="0.7"/><stop offset="1" stop-color="#b2ffdb" stop-opacity="0"/></radialGradient><radialGradient id="s96" cx="0.719" cy="0.273" r="0.74"><stop offset="0" stop-color="#007a29"/><stop offset="0.3" stop-color="#007a29"/><stop offset="0.49" stop-color="#006823"/><stop offset="0.68" stop-color="#004818"/><stop offset="0.81" stop-color="#002e0f"/><stop offset="0.93" stop-color="#001607"/></radialGradient><radialGradient id="s97" cx="0.780" cy="0.251" r="0.74"><stop offset="0" stop-color="#004747"/><stop offset="0.3" stop-color="#004747"/><stop offset="0.49" stop-color="#003d3d"/><stop offset="0.68" stop-color="#002a2a"/><stop offset="0.81" stop-color="#001b1b"/><stop offset="0.93" stop-color="#000d0d"/></radialGradient><radialGradient id="h15b"><stop offset="0" stop-color="#b2fafa" stop-opacity="1"/><stop offset="0.35" stop-color="#b2fafa" stop-opacity="0.7"/><stop offset="1" stop-color="#b2fafa" stop-opacity="0"/></radialGradient><radialGradient id="s98" cx="0.754" cy="0.214" r="0.74"><stop offset="0" stop-color="#007a29"/><stop offset="0.3" stop-color="#007a29"/><stop offset="0.49" stop-color="#006823"/><stop offset="0.68" stop-color="#004818"/><stop offset="0.81" stop-color="#002e0f"/><stop offset="0.93" stop-color="#001607"/></radialGradient><radialGradient id="s99" cx="0.778" cy="0.235" r="0.74"><stop offset="0" stop-color="#007a29"/><stop offset="0.3" stop-color="#007a29"/><stop offset="0.49" stop-color="#006823"/><stop offset="0.68" stop-color="#004818"/><stop offset="0.81" stop-color="#002e0f"/><stop offset="0.93" stop-color="#001607"/></radialGradient><radialGradient id="s100" cx="0.711" cy="0.260" r="0.74"><stop offset="0" stop-color="#007a29"/><stop offset="0.3" stop-color="#007a29"/><stop offset="0.49" stop-color="#006823"/><stop offset="0.68" stop-color="#004818"/><stop offset="0.81" stop-color="#002e0f"/><stop offset="0.93" stop-color="#001607"/></radialGradient><radialGradient id="s101" cx="0.715" cy="0.228" r="0.74"><stop offset="0" stop-color="#009816"/><stop offset="0.3" stop-color="#009816"/><stop offset="0.49" stop-color="#008112"/><stop offset="0.68" stop-color="#005a0d"/><stop offset="0.81" stop-color="#003908"/><stop offset="0.93" stop-color="#001b04"/></radialGradient><radialGradient id="h16b"><stop offset="0" stop-color="#b2ffc8" stop-opacity="1"/><stop offset="0.35" stop-color="#b2ffc8" stop-opacity="0.7"/><stop offset="1" stop-color="#b2ffc8" stop-opacity="0"/></radialGradient><radialGradient id="s102" cx="0.728" cy="0.217" r="0.74"><stop offset="0" stop-color="#009816"/><stop offset="0.3" stop-color="#009816"/><stop offset="0.49" stop-color="#008112"/><stop offset="0.68" stop-color="#005a0d"/><stop offset="0.81" stop-color="#003908"/><stop offset="0.93" stop-color="#001b04"/></radialGradient><radialGradient id="s103" cx="0.741" cy="0.286" r="0.74"><stop offset="0" stop-color="#009816"/><stop offset="0.3" stop-color="#009816"/><stop offset="0.49" stop-color="#008112"/><stop offset="0.68" stop-color="#005a0d"/><stop offset="0.81" stop-color="#003908"/><stop offset="0.93" stop-color="#001b04"/></radialGradient><radialGradient id="s104" cx="0.725" cy="0.281" r="0.74"><stop offset="0" stop-color="#00b800"/><stop offset="0.3" stop-color="#00b800"/><stop offset="0.49" stop-color="#009d00"/><stop offset="0.68" stop-color="#006c00"/><stop offset="0.81" stop-color="#004500"/><stop offset="0.93" stop-color="#002100"/></radialGradient><radialGradient id="h17b"><stop offset="0" stop-color="#b2ffb2" stop-opacity="1"/><stop offset="0.35" stop-color="#b2ffb2" stop-opacity="0.7"/><stop offset="1" stop-color="#b2ffb2" stop-opacity="0"/></radialGradient><radialGradient id="s105" cx="0.771" cy="0.274" r="0.74"><stop offset="0" stop-color="#009816"/><stop offset="0.3" stop-color="#009816"/><stop offset="0.49" stop-color="#008112"/><stop offset="0.68" stop-color="#005a0d"/><stop offset="0.81" stop-color="#003908"/><stop offset="0.93" stop-color="#001b04"/></radialGradient><radialGradient id="s106" cx="0.780" cy="0.260" r="0.74"><stop offset="0" stop-color="#009816"/><stop offset="0.3" stop-color="#009816"/><stop offset="0.49" stop-color="#008112"/><stop offset="0.68" stop-color="#005a0d"/><stop offset="0.81" stop-color="#003908"/><stop offset="0.93" stop-color="#001b04"/></radialGradient><radialGradient id="s107" cx="0.760" cy="0.216" r="0.74"><stop offset="0" stop-color="#009816"/><stop offset="0.3" stop-color="#009816"/><stop offset="0.49" stop-color="#008112"/><stop offset="0.68" stop-color="#005a0d"/><stop offset="0.81" stop-color="#003908"/><stop offset="0.93" stop-color="#001b04"/></radialGradient><radialGradient id="s108" cx="0.774" cy="0.227" r="0.74"><stop offset="0" stop-color="#009816"/><stop offset="0.3" stop-color="#009816"/><stop offset="0.49" stop-color="#008112"/><stop offset="0.68" stop-color="#005a0d"/><stop offset="0.81" stop-color="#003908"/><stop offset="0.93" stop-color="#001b04"/></radialGradient><radialGradient id="s109" cx="0.706" cy="0.253" r="0.74"><stop offset="0" stop-color="#00b800"/><stop offset="0.3" stop-color="#00b800"/><stop offset="0.49" stop-color="#009d00"/><stop offset="0.68" stop-color="#006c00"/><stop offset="0.81" stop-color="#004500"/><stop offset="0.93" stop-color="#002100"/></radialGradient><radialGradient id="s110" cx="0.708" cy="0.236" r="0.74"><stop offset="0" stop-color="#00b800"/><stop offset="0.3" stop-color="#00b800"/><stop offset="0.49" stop-color="#009d00"/><stop offset="0.68" stop-color="#006c00"/><stop offset="0.81" stop-color="#004500"/><stop offset="0.93" stop-color="#002100"/></radialGradient><radialGradient id="s111" cx="0.749" cy="0.288" r="0.74"><stop offset="0" stop-color="#0cbc00"/><stop offset="0.3" stop-color="#0cbc00"/><stop offset="0.49" stop-color="#0aa000"/><stop offset="0.68" stop-color="#076f00"/><stop offset="0.81" stop-color="#044700"/><stop offset="0.93" stop-color="#022200"/></radialGradient><radialGradient id="h18b"><stop offset="0" stop-color="#beffb2" stop-opacity="1"/><stop offset="0.35" stop-color="#beffb2" stop-opacity="0.7"/><stop offset="1" stop-color="#beffb2" stop-opacity="0"/></radialGradient><radialGradient id="s112" cx="0.765" cy="0.281" r="0.74"><stop offset="0" stop-color="#0cbc00"/><stop offset="0.3" stop-color="#0cbc00"/><stop offset="0.49" stop-color="#0aa000"/><stop offset="0.68" stop-color="#076f00"/><stop offset="0.81" stop-color="#044700"/><stop offset="0.93" stop-color="#022200"/></radialGradient><radialGradient id="s113" cx="0.733" cy="0.212" r="0.74"><stop offset="0" stop-color="#00b800"/><stop offset="0.3" stop-color="#00b800"/><stop offset="0.49" stop-color="#009d00"/><stop offset="0.68" stop-color="#006c00"/><stop offset="0.81" stop-color="#004500"/><stop offset="0.93" stop-color="#002100"/></radialGradient><radialGradient id="s114" cx="0.716" cy="0.278" r="0.74"><stop offset="0" stop-color="#18c100"/><stop offset="0.3" stop-color="#18c100"/><stop offset="0.49" stop-color="#15a400"/><stop offset="0.68" stop-color="#0e7200"/><stop offset="0.81" stop-color="#094900"/><stop offset="0.93" stop-color="#042300"/></radialGradient><radialGradient id="h19b"><stop offset="0" stop-color="#cbffb2" stop-opacity="1"/><stop offset="0.35" stop-color="#cbffb2" stop-opacity="0.7"/><stop offset="1" stop-color="#cbffb2" stop-opacity="0"/></radialGradient><radialGradient id="s115" cx="0.751" cy="0.212" r="0.74"><stop offset="0" stop-color="#00b800"/><stop offset="0.3" stop-color="#00b800"/><stop offset="0.49" stop-color="#009d00"/><stop offset="0.68" stop-color="#006c00"/><stop offset="0.81" stop-color="#004500"/><stop offset="0.93" stop-color="#002100"/></radialGradient><radialGradient id="s116" cx="0.782" cy="0.251" r="0.74"><stop offset="0" stop-color="#0cbc00"/><stop offset="0.3" stop-color="#0cbc00"/><stop offset="0.49" stop-color="#0aa000"/><stop offset="0.68" stop-color="#076f00"/><stop offset="0.81" stop-color="#044700"/><stop offset="0.93" stop-color="#022200"/></radialGradient><radialGradient id="s117" cx="0.778" cy="0.233" r="0.74"><stop offset="0" stop-color="#00b800"/><stop offset="0.3" stop-color="#00b800"/><stop offset="0.49" stop-color="#009d00"/><stop offset="0.68" stop-color="#006c00"/><stop offset="0.81" stop-color="#004500"/><stop offset="0.93" stop-color="#002100"/></radialGradient><radialGradient id="s118" cx="0.706" cy="0.263" r="0.74"><stop offset="0" stop-color="#0cbc00"/><stop offset="0.3" stop-color="#0cbc00"/><stop offset="0.49" stop-color="#0aa000"/><stop offset="0.68" stop-color="#076f00"/><stop offset="0.81" stop-color="#044700"/><stop offset="0.93" stop-color="#022200"/></radialGradient><radialGradient id="s119" cx="0.709" cy="0.228" r="0.74"><stop offset="0" stop-color="#0cbc00"/><stop offset="0.3" stop-color="#0cbc00"/><stop offset="0.49" stop-color="#0aa000"/><stop offset="0.68" stop-color="#076f00"/><stop offset="0.81" stop-color="#044700"/><stop offset="0.93" stop-color="#022200"/></radialGradient><radialGradient id="s120" cx="0.722" cy="0.215" r="0.74"><stop offset="0" stop-color="#0cbc00"/><stop offset="0.3" stop-color="#0cbc00"/><stop offset="0.49" stop-color="#0aa000"/><stop offset="0.68" stop-color="#076f00"/><stop offset="0.81" stop-color="#044700"/><stop offset="0.93" stop-color="#022200"/></radialGradient><radialGradient id="s121" cx="0.740" cy="0.291" r="0.74"><stop offset="0" stop-color="#40ce00"/><stop offset="0.3" stop-color="#40ce00"/><stop offset="0.49" stop-color="#37b000"/><stop offset="0.68" stop-color="#267900"/><stop offset="0.81" stop-color="#184e00"/><stop offset="0.93" stop-color="#0c2500"/></radialGradient><radialGradient id="h20b"><stop offset="0" stop-color="#f3ffb2" stop-opacity="1"/><stop offset="0.35" stop-color="#f3ffb2" stop-opacity="0.7"/><stop offset="1" stop-color="#f3ffb2" stop-opacity="0"/></radialGradient><radialGradient id="s122" cx="0.722" cy="0.286" r="0.74"><stop offset="0" stop-color="#40ce00"/><stop offset="0.3" stop-color="#40ce00"/><stop offset="0.49" stop-color="#37b000"/><stop offset="0.68" stop-color="#267900"/><stop offset="0.81" stop-color="#184e00"/><stop offset="0.93" stop-color="#0c2500"/></radialGradient><radialGradient id="s123" cx="0.773" cy="0.276" r="0.74"><stop offset="0" stop-color="#4fd200"/><stop offset="0.3" stop-color="#4fd200"/><stop offset="0.49" stop-color="#43b300"/><stop offset="0.68" stop-color="#2f7c00"/><stop offset="0.81" stop-color="#1e4f00"/><stop offset="0.93" stop-color="#0e2600"/></radialGradient><radialGradient id="h21b"><stop offset="0" stop-color="#ffffb2" stop-opacity="1"/><stop offset="0.35" stop-color="#ffffb2" stop-opacity="0.7"/><stop offset="1" stop-color="#ffffb2" stop-opacity="0"/></radialGradient><radialGradient id="s124" cx="0.781" cy="0.260" r="0.74"><stop offset="0" stop-color="#4fd200"/><stop offset="0.3" stop-color="#4fd200"/><stop offset="0.49" stop-color="#43b300"/><stop offset="0.68" stop-color="#2f7c00"/><stop offset="0.81" stop-color="#1e4f00"/><stop offset="0.93" stop-color="#0e2600"/></radialGradient><radialGradient id="s125" cx="0.758" cy="0.213" r="0.74"><stop offset="0" stop-color="#0cbc00"/><stop offset="0.3" stop-color="#0cbc00"/><stop offset="0.49" stop-color="#0aa000"/><stop offset="0.68" stop-color="#076f00"/><stop offset="0.81" stop-color="#044700"/><stop offset="0.93" stop-color="#022200"/></radialGradient><radialGradient id="s126" cx="0.773" cy="0.224" r="0.74"><stop offset="0" stop-color="#0cbc00"/><stop offset="0.3" stop-color="#0cbc00"/><stop offset="0.49" stop-color="#0aa000"/><stop offset="0.68" stop-color="#076f00"/><stop offset="0.81" stop-color="#044700"/><stop offset="0.93" stop-color="#022200"/></radialGradient><radialGradient id="s127" cx="0.700" cy="0.256" r="0.74"><stop offset="0" stop-color="#32c900"/><stop offset="0.3" stop-color="#32c900"/><stop offset="0.49" stop-color="#2bac00"/><stop offset="0.68" stop-color="#1e7700"/><stop offset="0.81" stop-color="#134c00"/><stop offset="0.93" stop-color="#092400"/></radialGradient><radialGradient id="h22b"><stop offset="0" stop-color="#e5ffb2" stop-opacity="1"/><stop offset="0.35" stop-color="#e5ffb2" stop-opacity="0.7"/><stop offset="1" stop-color="#e5ffb2" stop-opacity="0"/></radialGradient><radialGradient id="s128" cx="0.701" cy="0.237" r="0.74"><stop offset="0" stop-color="#25c500"/><stop offset="0.3" stop-color="#25c500"/><stop offset="0.49" stop-color="#1fa800"/><stop offset="0.68" stop-color="#167400"/><stop offset="0.81" stop-color="#0e4a00"/><stop offset="0.93" stop-color="#072300"/></radialGradient><radialGradient id="h23b"><stop offset="0" stop-color="#d7ffb2" stop-opacity="1"/><stop offset="0.35" stop-color="#d7ffb2" stop-opacity="0.7"/><stop offset="1" stop-color="#d7ffb2" stop-opacity="0"/></radialGradient><radialGradient id="s129" cx="0.749" cy="0.293" r="0.74"><stop offset="0" stop-color="#7dde00"/><stop offset="0.3" stop-color="#7dde00"/><stop offset="0.49" stop-color="#6abd00"/><stop offset="0.68" stop-color="#4a8300"/><stop offset="0.81" stop-color="#2f5400"/><stop offset="0.93" stop-color="#162800"/></radialGradient><radialGradient id="h24b"><stop offset="0" stop-color="#ffffb2" stop-opacity="1"/><stop offset="0.35" stop-color="#ffffb2" stop-opacity="0.7"/><stop offset="1" stop-color="#ffffb2" stop-opacity="0"/></radialGradient><radialGradient id="s130" cx="0.727" cy="0.210" r="0.74"><stop offset="0" stop-color="#18c100"/><stop offset="0.3" stop-color="#18c100"/><stop offset="0.49" stop-color="#15a400"/><stop offset="0.68" stop-color="#0e7200"/><stop offset="0.81" stop-color="#094900"/><stop offset="0.93" stop-color="#042300"/></radialGradient><radialGradient id="s131" cx="0.767" cy="0.285" r="0.74"><stop offset="0" stop-color="#8ce000"/><stop offset="0.3" stop-color="#8ce000"/><stop offset="0.49" stop-color="#77bf00"/><stop offset="0.68" stop-color="#538400"/><stop offset="0.81" stop-color="#355400"/><stop offset="0.93" stop-color="#192800"/></radialGradient><radialGradient id="h25b"><stop offset="0" stop-color="#ffffb2" stop-opacity="1"/><stop offset="0.35" stop-color="#ffffb2" stop-opacity="0.7"/><stop offset="1" stop-color="#ffffb2" stop-opacity="0"/></radialGradient><radialGradient id="s132" cx="0.712" cy="0.284" r="0.74"><stop offset="0" stop-color="#6edb00"/><stop offset="0.3" stop-color="#6edb00"/><stop offset="0.49" stop-color="#5dbb00"/><stop offset="0.68" stop-color="#418100"/><stop offset="0.81" stop-color="#295300"/><stop offset="0.93" stop-color="#142700"/></radialGradient><radialGradient id="h26b"><stop offset="0" stop-color="#ffffb2" stop-opacity="1"/><stop offset="0.35" stop-color="#ffffb2" stop-opacity="0.7"/><stop offset="1" stop-color="#ffffb2" stop-opacity="0"/></radialGradient><radialGradient id="s133" cx="0.746" cy="0.208" r="0.74"><stop offset="0" stop-color="#18c100"/><stop offset="0.3" stop-color="#18c100"/><stop offset="0.49" stop-color="#15a400"/><stop offset="0.68" stop-color="#0e7200"/><stop offset="0.81" stop-color="#094900"/><stop offset="0.93" stop-color="#042300"/></radialGradient><radialGradient id="s134" cx="0.783" cy="0.250" r="0.74"><stop offset="0" stop-color="#9ce200"/><stop offset="0.3" stop-color="#9ce200"/><stop offset="0.49" stop-color="#85c100"/><stop offset="0.68" stop-color="#5c8600"/><stop offset="0.81" stop-color="#3b5500"/><stop offset="0.93" stop-color="#1c2900"/></radialGradient><radialGradient id="h27b"><stop offset="0" stop-color="#ffffb2" stop-opacity="1"/><stop offset="0.35" stop-color="#ffffb2" stop-opacity="0.7"/><stop offset="1" stop-color="#ffffb2" stop-opacity="0"/></radialGradient><radialGradient id="s135" cx="0.700" cy="0.268" r="0.74"><stop offset="0" stop-color="#5ed700"/><stop offset="0.3" stop-color="#5ed700"/><stop offset="0.49" stop-color="#50b700"/><stop offset="0.68" stop-color="#377f00"/><stop offset="0.81" stop-color="#235100"/><stop offset="0.93" stop-color="#112700"/></radialGradient><radialGradient id="h28b"><stop offset="0" stop-color="#ffffb2" stop-opacity="1"/><stop offset="0.35" stop-color="#ffffb2" stop-opacity="0.7"/><stop offset="1" stop-color="#ffffb2" stop-opacity="0"/></radialGradient><radialGradient id="s136" cx="0.778" cy="0.230" r="0.74"><stop offset="0" stop-color="#18c100"/><stop offset="0.3" stop-color="#18c100"/><stop offset="0.49" stop-color="#15a400"/><stop offset="0.68" stop-color="#0e7200"/><stop offset="0.81" stop-color="#094900"/><stop offset="0.93" stop-color="#042300"/></radialGradient><radialGradient id="s137" cx="0.701" cy="0.229" r="0.74"><stop offset="0" stop-color="#40ce00"/><stop offset="0.3" stop-color="#40ce00"/><stop offset="0.49" stop-color="#37b000"/><stop offset="0.68" stop-color="#267900"/><stop offset="0.81" stop-color="#184e00"/><stop offset="0.93" stop-color="#0c2500"/></radialGradient><radialGradient id="s138" cx="0.714" cy="0.214" r="0.74"><stop offset="0" stop-color="#32c900"/><stop offset="0.3" stop-color="#32c900"/><stop offset="0.49" stop-color="#2bac00"/><stop offset="0.68" stop-color="#1e7700"/><stop offset="0.81" stop-color="#134c00"/><stop offset="0.93" stop-color="#092400"/></radialGradient><radialGradient id="s139" cx="0.739" cy="0.297" r="0.74"><stop offset="0" stop-color="#bce700"/><stop offset="0.3" stop-color="#bce700"/><stop offset="0.49" stop-color="#a0c500"/><stop offset="0.68" stop-color="#6f8800"/><stop offset="0.81" stop-color="#475700"/><stop offset="0.93" stop-color="#222a00"/></radialGradient><radialGradient id="h29b"><stop offset="0" stop-color="#ffffb2" stop-opacity="1"/><stop offset="0.35" stop-color="#ffffb2" stop-opacity="0.7"/><stop offset="1" stop-color="#ffffb2" stop-opacity="0"/></radialGradient><radialGradient id="s140" cx="0.718" cy="0.293" r="0.74"><stop offset="0" stop-color="#abe500"/><stop offset="0.3" stop-color="#abe500"/><stop offset="0.49" stop-color="#92c300"/><stop offset="0.68" stop-color="#658700"/><stop offset="0.81" stop-color="#415600"/><stop offset="0.93" stop-color="#1f2900"/></radialGradient><radialGradient id="h30b"><stop offset="0" stop-color="#ffffb2" stop-opacity="1"/><stop offset="0.35" stop-color="#ffffb2" stop-opacity="0.7"/><stop offset="1" stop-color="#ffffb2" stop-opacity="0"/></radialGradient><radialGradient id="s141" cx="0.775" cy="0.279" r="0.74"><stop offset="0" stop-color="#ddec00"/><stop offset="0.3" stop-color="#ddec00"/><stop offset="0.49" stop-color="#bcc900"/><stop offset="0.68" stop-color="#828b00"/><stop offset="0.81" stop-color="#535900"/><stop offset="0.93" stop-color="#282a00"/></radialGradient><radialGradient id="h31b"><stop offset="0" stop-color="#ffffb2" stop-opacity="1"/><stop offset="0.35" stop-color="#ffffb2" stop-opacity="0.7"/><stop offset="1" stop-color="#ffffb2" stop-opacity="0"/></radialGradient><radialGradient id="s142" cx="0.783" cy="0.260" r="0.74"><stop offset="0" stop-color="#eeee00"/><stop offset="0.3" stop-color="#eeee00"/><stop offset="0.49" stop-color="#cbcb00"/><stop offset="0.68" stop-color="#8c8c00"/><stop offset="0.81" stop-color="#5a5a00"/><stop offset="0.93" stop-color="#2b2b00"/></radialGradient><radialGradient id="h32b"><stop offset="0" stop-color="#ffffb2" stop-opacity="1"/><stop offset="0.35" stop-color="#ffffb2" stop-opacity="0.7"/><stop offset="1" stop-color="#ffffb2" stop-opacity="0"/></radialGradient><radialGradient id="s143" cx="0.754" cy="0.209" r="0.74"><stop offset="0" stop-color="#25c500"/><stop offset="0.3" stop-color="#25c500"/><stop offset="0.49" stop-color="#1fa800"/><stop offset="0.68" stop-color="#167400"/><stop offset="0.81" stop-color="#0e4a00"/><stop offset="0.93" stop-color="#072300"/></radialGradient><radialGradient id="s144" cx="0.771" cy="0.220" r="0.74"><stop offset="0" stop-color="#25c500"/><stop offset="0.3" stop-color="#25c500"/><stop offset="0.49" stop-color="#1fa800"/><stop offset="0.68" stop-color="#167400"/><stop offset="0.81" stop-color="#0e4a00"/><stop offset="0.93" stop-color="#072300"/></radialGradient><radialGradient id="s145" cx="0.693" cy="0.261" r="0.74"><stop offset="0" stop-color="#7dde00"/><stop offset="0.3" stop-color="#7dde00"/><stop offset="0.49" stop-color="#6abd00"/><stop offset="0.68" stop-color="#4a8300"/><stop offset="0.81" stop-color="#2f5400"/><stop offset="0.93" stop-color="#162800"/></radialGradient><radialGradient id="s146" cx="0.693" cy="0.240" r="0.74"><stop offset="0" stop-color="#5ed700"/><stop offset="0.3" stop-color="#5ed700"/><stop offset="0.49" stop-color="#50b700"/><stop offset="0.68" stop-color="#377f00"/><stop offset="0.81" stop-color="#235100"/><stop offset="0.93" stop-color="#112700"/></radialGradient><radialGradient id="s147" cx="0.719" cy="0.208" r="0.74"><stop offset="0" stop-color="#40ce00"/><stop offset="0.3" stop-color="#40ce00"/><stop offset="0.49" stop-color="#37b000"/><stop offset="0.68" stop-color="#267900"/><stop offset="0.81" stop-color="#184e00"/><stop offset="0.93" stop-color="#0c2500"/></radialGradient><radialGradient id="s148" cx="0.749" cy="0.299" r="0.74"><stop offset="0" stop-color="#f3e400"/><stop offset="0.3" stop-color="#f3e400"/><stop offset="0.49" stop-color="#cfc200"/><stop offset="0.68" stop-color="#8f8600"/><stop offset="0.81" stop-color="#5b5600"/><stop offset="0.93" stop-color="#2c2900"/></radialGradient><radialGradient id="h33b"><stop offset="0" stop-color="#ffffb2" stop-opacity="1"/><stop offset="0.35" stop-color="#ffffb2" stop-opacity="0.7"/><stop offset="1" stop-color="#ffffb2" stop-opacity="0"/></radialGradient><radialGradient id="s149" cx="0.768" cy="0.289" r="0.74"><stop offset="0" stop-color="#f5de00"/><stop offset="0.3" stop-color="#f5de00"/><stop offset="0.49" stop-color="#d1bd00"/><stop offset="0.68" stop-color="#918300"/><stop offset="0.81" stop-color="#5c5400"/><stop offset="0.93" stop-color="#2c2800"/></radialGradient><radialGradient id="h34b"><stop offset="0" stop-color="#ffffb2" stop-opacity="1"/><stop offset="0.35" stop-color="#ffffb2" stop-opacity="0.7"/><stop offset="1" stop-color="#ffffb2" stop-opacity="0"/></radialGradient><radialGradient id="s150" cx="0.707" cy="0.291" r="0.74"><stop offset="0" stop-color="#ddec00"/><stop offset="0.3" stop-color="#ddec00"/><stop offset="0.49" stop-color="#bcc900"/><stop offset="0.68" stop-color="#828b00"/><stop offset="0.81" stop-color="#535900"/><stop offset="0.93" stop-color="#282a00"/></radialGradient><radialGradient id="s151" cx="0.741" cy="0.204" r="0.74"><stop offset="0" stop-color="#40ce00"/><stop offset="0.3" stop-color="#40ce00"/><stop offset="0.49" stop-color="#37b000"/><stop offset="0.68" stop-color="#267900"/><stop offset="0.81" stop-color="#184e00"/><stop offset="0.93" stop-color="#0c2500"/></radialGradient><radialGradient id="s152" cx="0.784" cy="0.248" r="0.74"><stop offset="0" stop-color="#f8c900"/><stop offset="0.3" stop-color="#f8c900"/><stop offset="0.49" stop-color="#d3ac00"/><stop offset="0.68" stop-color="#927700"/><stop offset="0.81" stop-color="#5d4c00"/><stop offset="0.93" stop-color="#2d2400"/></radialGradient><radialGradient id="h35b"><stop offset="0" stop-color="#ffffb2" stop-opacity="1"/><stop offset="0.35" stop-color="#ffffb2" stop-opacity="0.7"/><stop offset="1" stop-color="#ffffb2" stop-opacity="0"/></radialGradient><radialGradient id="s153" cx="0.692" cy="0.274" r="0.74"><stop offset="0" stop-color="#bce700"/><stop offset="0.3" stop-color="#bce700"/><stop offset="0.49" stop-color="#a0c500"/><stop offset="0.68" stop-color="#6f8800"/><stop offset="0.81" stop-color="#475700"/><stop offset="0.93" stop-color="#222a00"/></radialGradient><radialGradient id="s154" cx="0.778" cy="0.227" r="0.74"><stop offset="0" stop-color="#40ce00"/><stop offset="0.3" stop-color="#40ce00"/><stop offset="0.49" stop-color="#37b000"/><stop offset="0.68" stop-color="#267900"/><stop offset="0.81" stop-color="#184e00"/><stop offset="0.93" stop-color="#0c2500"/></radialGradient><radialGradient id="s155" cx="0.691" cy="0.230" r="0.74"><stop offset="0" stop-color="#8ce000"/><stop offset="0.3" stop-color="#8ce000"/><stop offset="0.49" stop-color="#77bf00"/><stop offset="0.68" stop-color="#538400"/><stop offset="0.81" stop-color="#355400"/><stop offset="0.93" stop-color="#192800"/></radialGradient><radialGradient id="s156" cx="0.705" cy="0.212" r="0.74"><stop offset="0" stop-color="#6edb00"/><stop offset="0.3" stop-color="#6edb00"/><stop offset="0.49" stop-color="#5dbb00"/><stop offset="0.68" stop-color="#418100"/><stop offset="0.81" stop-color="#295300"/><stop offset="0.93" stop-color="#142700"/></radialGradient><radialGradient id="s157" cx="0.737" cy="0.305" r="0.74"><stop offset="0" stop-color="#f8c200"/><stop offset="0.3" stop-color="#f8c200"/><stop offset="0.49" stop-color="#d3a500"/><stop offset="0.68" stop-color="#927200"/><stop offset="0.81" stop-color="#5d4900"/><stop offset="0.93" stop-color="#2d2300"/></radialGradient><radialGradient id="h36b"><stop offset="0" stop-color="#ffffb2" stop-opacity="1"/><stop offset="0.35" stop-color="#ffffb2" stop-opacity="0.7"/><stop offset="1" stop-color="#ffffb2" stop-opacity="0"/></radialGradient><radialGradient id="s158" cx="0.714" cy="0.301" r="0.74"><stop offset="0" stop-color="#f8d100"/><stop offset="0.3" stop-color="#f8d100"/><stop offset="0.49" stop-color="#d3b200"/><stop offset="0.68" stop-color="#927b00"/><stop offset="0.81" stop-color="#5d4f00"/><stop offset="0.93" stop-color="#2d2600"/></radialGradient><radialGradient id="h37b"><stop offset="0" stop-color="#ffffb2" stop-opacity="1"/><stop offset="0.35" stop-color="#ffffb2" stop-opacity="0.7"/><stop offset="1" stop-color="#ffffb2" stop-opacity="0"/></radialGradient><radialGradient id="s159" cx="0.777" cy="0.282" r="0.74"><stop offset="0" stop-color="#f9a300"/><stop offset="0.3" stop-color="#f9a300"/><stop offset="0.49" stop-color="#d48b00"/><stop offset="0.68" stop-color="#936000"/><stop offset="0.81" stop-color="#5e3d00"/><stop offset="0.93" stop-color="#2d1d00"/></radialGradient><radialGradient id="h38b"><stop offset="0" stop-color="#ffffb2" stop-opacity="1"/><stop offset="0.35" stop-color="#ffffb2" stop-opacity="0.7"/><stop offset="1" stop-color="#ffffb2" stop-opacity="0"/></radialGradient><radialGradient id="s160" cx="0.785" cy="0.260" r="0.74"><stop offset="0" stop-color="#f99b00"/><stop offset="0.3" stop-color="#f99b00"/><stop offset="0.49" stop-color="#d48500"/><stop offset="0.68" stop-color="#935c00"/><stop offset="0.81" stop-color="#5e3b00"/><stop offset="0.93" stop-color="#2d1c00"/></radialGradient><radialGradient id="h39b"><stop offset="0" stop-color="#ffffb2" stop-opacity="1"/><stop offset="0.35" stop-color="#ffffb2" stop-opacity="0.7"/><stop offset="1" stop-color="#ffffb2" stop-opacity="0"/></radialGradient><radialGradient id="s161" cx="0.749" cy="0.204" r="0.74"><stop offset="0" stop-color="#5ed700"/><stop offset="0.3" stop-color="#5ed700"/><stop offset="0.49" stop-color="#50b700"/><stop offset="0.68" stop-color="#377f00"/><stop offset="0.81" stop-color="#235100"/><stop offset="0.93" stop-color="#112700"/></radialGradient><radialGradient id="s162" cx="0.770" cy="0.216" r="0.74"><stop offset="0" stop-color="#5ed700"/><stop offset="0.3" stop-color="#5ed700"/><stop offset="0.49" stop-color="#50b700"/><stop offset="0.68" stop-color="#377f00"/><stop offset="0.81" stop-color="#235100"/><stop offset="0.93" stop-color="#112700"/></radialGradient><radialGradient id="s163" cx="0.683" cy="0.266" r="0.74"><stop offset="0" stop-color="#eeee00"/><stop offset="0.3" stop-color="#eeee00"/><stop offset="0.49" stop-color="#cbcb00"/><stop offset="0.68" stop-color="#8c8c00"/><stop offset="0.81" stop-color="#5a5a00"/><stop offset="0.93" stop-color="#2b2b00"/></radialGradient><radialGradient id="s164" cx="0.682" cy="0.242" r="0.74"><stop offset="0" stop-color="#cce900"/><stop offset="0.3" stop-color="#cce900"/><stop offset="0.49" stop-color="#aec700"/><stop offset="0.68" stop-color="#788a00"/><stop offset="0.81" stop-color="#4d5800"/><stop offset="0.93" stop-color="#252a00"/></radialGradient><radialGradient id="h40b"><stop offset="0" stop-color="#ffffb2" stop-opacity="1"/><stop offset="0.35" stop-color="#ffffb2" stop-opacity="0.7"/><stop offset="1" stop-color="#ffffb2" stop-opacity="0"/></radialGradient><radialGradient id="s165" cx="0.710" cy="0.204" r="0.74"><stop offset="0" stop-color="#8ce000"/><stop offset="0.3" stop-color="#8ce000"/><stop offset="0.49" stop-color="#77bf00"/><stop offset="0.68" stop-color="#538400"/><stop offset="0.81" stop-color="#355400"/><stop offset="0.93" stop-color="#192800"/></radialGradient><radialGradient id="s166" cx="0.749" cy="0.306" r="0.74"><stop offset="0" stop-color="#f98c00"/><stop offset="0.3" stop-color="#f98c00"/><stop offset="0.49" stop-color="#d47700"/><stop offset="0.68" stop-color="#935300"/><stop offset="0.81" stop-color="#5e3500"/><stop offset="0.93" stop-color="#2d1900"/></radialGradient><radialGradient id="h41b"><stop offset="0" stop-color="#ffffb2" stop-opacity="1"/><stop offset="0.35" stop-color="#ffffb2" stop-opacity="0.7"/><stop offset="1" stop-color="#ffffb2" stop-opacity="0"/></radialGradient><radialGradient id="s167" cx="0.770" cy="0.293" r="0.74"><stop offset="0" stop-color="#f97d00"/><stop offset="0.3" stop-color="#f97d00"/><stop offset="0.49" stop-color="#d56a00"/><stop offset="0.68" stop-color="#934a00"/><stop offset="0.81" stop-color="#5e2f00"/><stop offset="0.93" stop-color="#2d1600"/></radialGradient><radialGradient id="h42b"><stop offset="0" stop-color="#ffffb2" stop-opacity="1"/><stop offset="0.35" stop-color="#ffffb2" stop-opacity="0.7"/><stop offset="1" stop-color="#ffffb2" stop-opacity="0"/></radialGradient><radialGradient id="s168" cx="0.700" cy="0.300" r="0.74"><stop offset="0" stop-color="#f8b200"/><stop offset="0.3" stop-color="#f8b200"/><stop offset="0.49" stop-color="#d49800"/><stop offset="0.68" stop-color="#926900"/><stop offset="0.81" stop-color="#5e4300"/><stop offset="0.93" stop-color="#2d2000"/></radialGradient><radialGradient id="h43b"><stop offset="0" stop-color="#ffffb2" stop-opacity="1"/><stop offset="0.35" stop-color="#ffffb2" stop-opacity="0.7"/><stop offset="1" stop-color="#ffffb2" stop-opacity="0"/></radialGradient><radialGradient id="s169" cx="0.734" cy="0.199" r="0.74"><stop offset="0" stop-color="#8ce000"/><stop offset="0.3" stop-color="#8ce000"/><stop offset="0.49" stop-color="#77bf00"/><stop offset="0.68" stop-color="#538400"/><stop offset="0.81" stop-color="#355400"/><stop offset="0.93" stop-color="#192800"/></radialGradient><radialGradient id="s170" cx="0.683" cy="0.281" r="0.74"><stop offset="0" stop-color="#f8c900"/><stop offset="0.3" stop-color="#f8c900"/><stop offset="0.49" stop-color="#d3ac00"/><stop offset="0.68" stop-color="#927700"/><stop offset="0.81" stop-color="#5d4c00"/><stop offset="0.93" stop-color="#2d2400"/></radialGradient><radialGradient id="s171" cx="0.786" cy="0.247" r="0.74"><stop offset="0" stop-color="#fa6a00"/><stop offset="0.3" stop-color="#fa6a00"/><stop offset="0.49" stop-color="#d55a00"/><stop offset="0.68" stop-color="#943e00"/><stop offset="0.81" stop-color="#5e2800"/><stop offset="0.93" stop-color="#2d1300"/></radialGradient><radialGradient id="h44b"><stop offset="0" stop-color="#ffffb2" stop-opacity="1"/><stop offset="0.35" stop-color="#ffffb2" stop-opacity="0.7"/><stop offset="1" stop-color="#ffffb2" stop-opacity="0"/></radialGradient><radialGradient id="s172" cx="0.777" cy="0.223" r="0.74"><stop offset="0" stop-color="#8ce000"/><stop offset="0.3" stop-color="#8ce000"/><stop offset="0.49" stop-color="#77bf00"/><stop offset="0.68" stop-color="#538400"/><stop offset="0.81" stop-color="#355400"/><stop offset="0.93" stop-color="#192800"/></radialGradient><radialGradient id="s173" cx="0.678" cy="0.231" r="0.74"><stop offset="0" stop-color="#f0e900"/><stop offset="0.3" stop-color="#f0e900"/><stop offset="0.49" stop-color="#cdc600"/><stop offset="0.68" stop-color="#8e8900"/><stop offset="0.81" stop-color="#5b5800"/><stop offset="0.93" stop-color="#2b2a00"/></radialGradient><radialGradient id="h45b"><stop offset="0" stop-color="#ffffb2" stop-opacity="1"/><stop offset="0.35" stop-color="#ffffb2" stop-opacity="0.7"/><stop offset="1" stop-color="#ffffb2" stop-opacity="0"/></radialGradient><radialGradient id="s174" cx="0.693" cy="0.210" r="0.74"><stop offset="0" stop-color="#cce900"/><stop offset="0.3" stop-color="#cce900"/><stop offset="0.49" stop-color="#aec700"/><stop offset="0.68" stop-color="#788a00"/><stop offset="0.81" stop-color="#4d5800"/><stop offset="0.93" stop-color="#252a00"/></radialGradient><radialGradient id="s175" cx="0.735" cy="0.314" r="0.74"><stop offset="0" stop-color="#fa6d00"/><stop offset="0.3" stop-color="#fa6d00"/><stop offset="0.49" stop-color="#d55d00"/><stop offset="0.68" stop-color="#944100"/><stop offset="0.81" stop-color="#5e2900"/><stop offset="0.93" stop-color="#2d1400"/></radialGradient><radialGradient id="h46b"><stop offset="0" stop-color="#ffffb2" stop-opacity="1"/><stop offset="0.35" stop-color="#ffffb2" stop-opacity="0.7"/><stop offset="1" stop-color="#ffffb2" stop-opacity="0"/></radialGradient><radialGradient id="s176" cx="0.709" cy="0.311" r="0.74"><stop offset="0" stop-color="#f97d00"/><stop offset="0.3" stop-color="#f97d00"/><stop offset="0.49" stop-color="#d56a00"/><stop offset="0.68" stop-color="#934a00"/><stop offset="0.81" stop-color="#5e2f00"/><stop offset="0.93" stop-color="#2d1600"/></radialGradient><radialGradient id="s177" cx="0.779" cy="0.286" r="0.74"><stop offset="0" stop-color="#fb5600"/><stop offset="0.3" stop-color="#fb5600"/><stop offset="0.49" stop-color="#d64a00"/><stop offset="0.68" stop-color="#943300"/><stop offset="0.81" stop-color="#5f2100"/><stop offset="0.93" stop-color="#2d1000"/></radialGradient><radialGradient id="h47b"><stop offset="0" stop-color="#ffffb2" stop-opacity="1"/><stop offset="0.35" stop-color="#ffffb2" stop-opacity="0.7"/><stop offset="1" stop-color="#ffffb2" stop-opacity="0"/></radialGradient><radialGradient id="s178" cx="0.788" cy="0.260" r="0.74"><stop offset="0" stop-color="#fc4f00"/><stop offset="0.3" stop-color="#fc4f00"/><stop offset="0.49" stop-color="#d64300"/><stop offset="0.68" stop-color="#942e00"/><stop offset="0.81" stop-color="#5f1e00"/><stop offset="0.93" stop-color="#2d0e00"/></radialGradient><radialGradient id="h48b"><stop offset="0" stop-color="#ffffb2" stop-opacity="1"/><stop offset="0.35" stop-color="#ffffb2" stop-opacity="0.7"/><stop offset="1" stop-color="#ffffb2" stop-opacity="0"/></radialGradient><radialGradient id="s179" cx="0.743" cy="0.198" r="0.74"><stop offset="0" stop-color="#bce700"/><stop offset="0.3" stop-color="#bce700"/><stop offset="0.49" stop-color="#a0c500"/><stop offset="0.68" stop-color="#6f8800"/><stop offset="0.81" stop-color="#475700"/><stop offset="0.93" stop-color="#222a00"/></radialGradient><radialGradient id="s180" cx="0.768" cy="0.210" r="0.74"><stop offset="0" stop-color="#abe500"/><stop offset="0.3" stop-color="#abe500"/><stop offset="0.49" stop-color="#92c300"/><stop offset="0.68" stop-color="#658700"/><stop offset="0.81" stop-color="#415600"/><stop offset="0.93" stop-color="#1f2900"/></radialGradient><radialGradient id="s181" cx="0.671" cy="0.273" r="0.74"><stop offset="0" stop-color="#f8ab00"/><stop offset="0.3" stop-color="#f8ab00"/><stop offset="0.49" stop-color="#d49200"/><stop offset="0.68" stop-color="#936500"/><stop offset="0.81" stop-color="#5e4000"/><stop offset="0.93" stop-color="#2d1f00"/></radialGradient><radialGradient id="h49b"><stop offset="0" stop-color="#ffffb2" stop-opacity="1"/><stop offset="0.35" stop-color="#ffffb2" stop-opacity="0.7"/><stop offset="1" stop-color="#ffffb2" stop-opacity="0"/></radialGradient><radialGradient id="s182" cx="0.668" cy="0.246" r="0.74"><stop offset="0" stop-color="#f8c900"/><stop offset="0.3" stop-color="#f8c900"/><stop offset="0.49" stop-color="#d3ac00"/><stop offset="0.68" stop-color="#927700"/><stop offset="0.81" stop-color="#5d4c00"/><stop offset="0.93" stop-color="#2d2400"/></radialGradient><radialGradient id="s183" cx="0.698" cy="0.200" r="0.74"><stop offset="0" stop-color="#eeee00"/><stop offset="0.3" stop-color="#eeee00"/><stop offset="0.49" stop-color="#cbcb00"/><stop offset="0.68" stop-color="#8c8c00"/><stop offset="0.81" stop-color="#5a5a00"/><stop offset="0.93" stop-color="#2b2b00"/></radialGradient><radialGradient id="s184" cx="0.748" cy="0.316" r="0.74"><stop offset="0" stop-color="#fc4f00"/><stop offset="0.3" stop-color="#fc4f00"/><stop offset="0.49" stop-color="#d64300"/><stop offset="0.68" stop-color="#942e00"/><stop offset="0.81" stop-color="#5f1e00"/><stop offset="0.93" stop-color="#2d0e00"/></radialGradient><radialGradient id="s185" cx="0.692" cy="0.311" r="0.74"><stop offset="0" stop-color="#fa6d00"/><stop offset="0.3" stop-color="#fa6d00"/><stop offset="0.49" stop-color="#d55d00"/><stop offset="0.68" stop-color="#944100"/><stop offset="0.81" stop-color="#5e2900"/><stop offset="0.93" stop-color="#2d1400"/></radialGradient><radialGradient id="s186" cx="0.772" cy="0.300" r="0.74"><stop offset="0" stop-color="#fc3f00"/><stop offset="0.3" stop-color="#fc3f00"/><stop offset="0.49" stop-color="#d73600"/><stop offset="0.68" stop-color="#952500"/><stop offset="0.81" stop-color="#5f1800"/><stop offset="0.93" stop-color="#2d0b00"/></radialGradient><radialGradient id="h50b"><stop offset="0" stop-color="#fff2b2" stop-opacity="1"/><stop offset="0.35" stop-color="#fff2b2" stop-opacity="0.7"/><stop offset="1" stop-color="#fff2b2" stop-opacity="0"/></radialGradient><radialGradient id="s187" cx="0.725" cy="0.193" r="0.74"><stop offset="0" stop-color="#ddec00"/><stop offset="0.3" stop-color="#ddec00"/><stop offset="0.49" stop-color="#bcc900"/><stop offset="0.68" stop-color="#828b00"/><stop offset="0.81" stop-color="#535900"/><stop offset="0.93" stop-color="#282a00"/></radialGradient><radialGradient id="s188" cx="0.670" cy="0.291" r="0.74"><stop offset="0" stop-color="#f97d00"/><stop offset="0.3" stop-color="#f97d00"/><stop offset="0.49" stop-color="#d56a00"/><stop offset="0.68" stop-color="#934a00"/><stop offset="0.81" stop-color="#5e2f00"/><stop offset="0.93" stop-color="#2d1600"/></radialGradient><radialGradient id="s189" cx="0.788" cy="0.245" r="0.74"><stop offset="0" stop-color="#fd2400"/><stop offset="0.3" stop-color="#fd2400"/><stop offset="0.49" stop-color="#d81e00"/><stop offset="0.68" stop-color="#961500"/><stop offset="0.81" stop-color="#5f0d00"/><stop offset="0.93" stop-color="#2e0600"/></radialGradient><radialGradient id="h51b"><stop offset="0" stop-color="#ffd6b2" stop-opacity="1"/><stop offset="0.35" stop-color="#ffd6b2" stop-opacity="0.7"/><stop offset="1" stop-color="#ffd6b2" stop-opacity="0"/></radialGradient><radialGradient id="s190" cx="0.776" cy="0.218" r="0.74"><stop offset="0" stop-color="#ddec00"/><stop offset="0.3" stop-color="#ddec00"/><stop offset="0.49" stop-color="#bcc900"/><stop offset="0.68" stop-color="#828b00"/><stop offset="0.81" stop-color="#535900"/><stop offset="0.93" stop-color="#282a00"/></radialGradient><radialGradient id="s191" cx="0.662" cy="0.233" r="0.74"><stop offset="0" stop-color="#f8ba00"/><stop offset="0.3" stop-color="#f8ba00"/><stop offset="0.49" stop-color="#d39f00"/><stop offset="0.68" stop-color="#926e00"/><stop offset="0.81" stop-color="#5d4600"/><stop offset="0.93" stop-color="#2d2100"/></radialGradient><radialGradient id="h52b"><stop offset="0" stop-color="#ffffb2" stop-opacity="1"/><stop offset="0.35" stop-color="#ffffb2" stop-opacity="0.7"/><stop offset="1" stop-color="#ffffb2" stop-opacity="0"/></radialGradient><radialGradient id="s192" cx="0.678" cy="0.207" r="0.74"><stop offset="0" stop-color="#f7d800"/><stop offset="0.3" stop-color="#f7d800"/><stop offset="0.49" stop-color="#d3b800"/><stop offset="0.68" stop-color="#928000"/><stop offset="0.81" stop-color="#5d5200"/><stop offset="0.93" stop-color="#2d2700"/></radialGradient><radialGradient id="h53b"><stop offset="0" stop-color="#ffffb2" stop-opacity="1"/><stop offset="0.35" stop-color="#ffffb2" stop-opacity="0.7"/><stop offset="1" stop-color="#ffffb2" stop-opacity="0"/></radialGradient><radialGradient id="s193" cx="0.733" cy="0.326" r="0.74"><stop offset="0" stop-color="#fc4700"/><stop offset="0.3" stop-color="#fc4700"/><stop offset="0.49" stop-color="#d73c00"/><stop offset="0.68" stop-color="#952a00"/><stop offset="0.81" stop-color="#5f1b00"/><stop offset="0.93" stop-color="#2d0d00"/></radialGradient><radialGradient id="h54b"><stop offset="0" stop-color="#fff9b2" stop-opacity="1"/><stop offset="0.35" stop-color="#fff9b2" stop-opacity="0.7"/><stop offset="1" stop-color="#fff9b2" stop-opacity="0"/></radialGradient><radialGradient id="s194" cx="0.701" cy="0.324" r="0.74"><stop offset="0" stop-color="#fb5600"/><stop offset="0.3" stop-color="#fb5600"/><stop offset="0.49" stop-color="#d64a00"/><stop offset="0.68" stop-color="#943300"/><stop offset="0.81" stop-color="#5f2100"/><stop offset="0.93" stop-color="#2d1000"/></radialGradient><radialGradient id="s195" cx="0.783" cy="0.291" r="0.74"><stop offset="0" stop-color="#fd2800"/><stop offset="0.3" stop-color="#fd2800"/><stop offset="0.49" stop-color="#d82200"/><stop offset="0.68" stop-color="#951700"/><stop offset="0.81" stop-color="#5f0f00"/><stop offset="0.93" stop-color="#2e0700"/></radialGradient><radialGradient id="h55b"><stop offset="0" stop-color="#ffdab2" stop-opacity="1"/><stop offset="0.35" stop-color="#ffdab2" stop-opacity="0.7"/><stop offset="1" stop-color="#ffdab2" stop-opacity="0"/></radialGradient><radialGradient id="s196" cx="0.735" cy="0.190" r="0.74"><stop offset="0" stop-color="#f3e400"/><stop offset="0.3" stop-color="#f3e400"/><stop offset="0.49" stop-color="#cfc200"/><stop offset="0.68" stop-color="#8f8600"/><stop offset="0.81" stop-color="#5b5600"/><stop offset="0.93" stop-color="#2c2900"/></radialGradient><radialGradient id="s197" cx="0.791" cy="0.260" r="0.74"><stop offset="0" stop-color="#fe1400"/><stop offset="0.3" stop-color="#fe1400"/><stop offset="0.49" stop-color="#d91100"/><stop offset="0.68" stop-color="#960c00"/><stop offset="0.81" stop-color="#600700"/><stop offset="0.93" stop-color="#2e0400"/></radialGradient><radialGradient id="h56b"><stop offset="0" stop-color="#ffc6b2" stop-opacity="1"/><stop offset="0.35" stop-color="#ffc6b2" stop-opacity="0.7"/><stop offset="1" stop-color="#ffc6b2" stop-opacity="0"/></radialGradient><radialGradient id="s198" cx="0.764" cy="0.203" r="0.74"><stop offset="0" stop-color="#f0e900"/><stop offset="0.3" stop-color="#f0e900"/><stop offset="0.49" stop-color="#cdc600"/><stop offset="0.68" stop-color="#8e8900"/><stop offset="0.81" stop-color="#5b5800"/><stop offset="0.93" stop-color="#2b2a00"/></radialGradient><radialGradient id="s199" cx="0.654" cy="0.283" r="0.74"><stop offset="0" stop-color="#fa7500"/><stop offset="0.3" stop-color="#fa7500"/><stop offset="0.49" stop-color="#d56400"/><stop offset="0.68" stop-color="#934500"/><stop offset="0.81" stop-color="#5e2c00"/><stop offset="0.93" stop-color="#2d1500"/></radialGradient><radialGradient id="h57b"><stop offset="0" stop-color="#ffffb2" stop-opacity="1"/><stop offset="0.35" stop-color="#ffffb2" stop-opacity="0.7"/><stop offset="1" stop-color="#ffffb2" stop-opacity="0"/></radialGradient><radialGradient id="s200" cx="0.649" cy="0.251" r="0.74"><stop offset="0" stop-color="#f99400"/><stop offset="0.3" stop-color="#f99400"/><stop offset="0.49" stop-color="#d47e00"/><stop offset="0.68" stop-color="#935700"/><stop offset="0.81" stop-color="#5e3800"/><stop offset="0.93" stop-color="#2d1b00"/></radialGradient><radialGradient id="h58b"><stop offset="0" stop-color="#ffffb2" stop-opacity="1"/><stop offset="0.35" stop-color="#ffffb2" stop-opacity="0.7"/><stop offset="1" stop-color="#ffffb2" stop-opacity="0"/></radialGradient><radialGradient id="s201" cx="0.681" cy="0.195" r="0.74"><stop offset="0" stop-color="#f8d100"/><stop offset="0.3" stop-color="#f8d100"/><stop offset="0.49" stop-color="#d3b200"/><stop offset="0.68" stop-color="#927b00"/><stop offset="0.81" stop-color="#5d4f00"/><stop offset="0.93" stop-color="#2d2600"/></radialGradient><radialGradient id="s202" cx="0.748" cy="0.329" r="0.74"><stop offset="0" stop-color="#fd2f00"/><stop offset="0.3" stop-color="#fd2f00"/><stop offset="0.49" stop-color="#d82800"/><stop offset="0.68" stop-color="#951c00"/><stop offset="0.81" stop-color="#5f1200"/><stop offset="0.93" stop-color="#2e0900"/></radialGradient><radialGradient id="h59b"><stop offset="0" stop-color="#ffe2b2" stop-opacity="1"/><stop offset="0.35" stop-color="#ffe2b2" stop-opacity="0.7"/><stop offset="1" stop-color="#ffe2b2" stop-opacity="0"/></radialGradient><radialGradient id="s203" cx="0.680" cy="0.327" r="0.74"><stop offset="0" stop-color="#fb5200"/><stop offset="0.3" stop-color="#fb5200"/><stop offset="0.49" stop-color="#d64600"/><stop offset="0.68" stop-color="#943100"/><stop offset="0.81" stop-color="#5f1f00"/><stop offset="0.93" stop-color="#2d0f00"/></radialGradient><radialGradient id="h60b"><stop offset="0" stop-color="#ffffb2" stop-opacity="1"/><stop offset="0.35" stop-color="#ffffb2" stop-opacity="0.7"/><stop offset="1" stop-color="#ffffb2" stop-opacity="0"/></radialGradient><radialGradient id="s204" cx="0.775" cy="0.308" r="0.74"><stop offset="0" stop-color="#fe2000"/><stop offset="0.3" stop-color="#fe2000"/><stop offset="0.49" stop-color="#d81b00"/><stop offset="0.68" stop-color="#961300"/><stop offset="0.81" stop-color="#600c00"/><stop offset="0.93" stop-color="#2e0600"/></radialGradient><radialGradient id="h61b"><stop offset="0" stop-color="#ffd2b2" stop-opacity="1"/><stop offset="0.35" stop-color="#ffd2b2" stop-opacity="0.7"/><stop offset="1" stop-color="#ffd2b2" stop-opacity="0"/></radialGradient><radialGradient id="s205" cx="0.713" cy="0.184" r="0.74"><stop offset="0" stop-color="#f8d100"/><stop offset="0.3" stop-color="#f8d100"/><stop offset="0.49" stop-color="#d3b200"/><stop offset="0.68" stop-color="#927b00"/><stop offset="0.81" stop-color="#5d4f00"/><stop offset="0.93" stop-color="#2d2600"/></radialGradient><radialGradient id="s206" cx="0.653" cy="0.304" r="0.74"><stop offset="0" stop-color="#fb6200"/><stop offset="0.3" stop-color="#fb6200"/><stop offset="0.49" stop-color="#d65300"/><stop offset="0.68" stop-color="#943a00"/><stop offset="0.81" stop-color="#5e2500"/><stop offset="0.93" stop-color="#2d1200"/></radialGradient><radialGradient id="h62b"><stop offset="0" stop-color="#ffffb2" stop-opacity="1"/><stop offset="0.35" stop-color="#ffffb2" stop-opacity="0.7"/><stop offset="1" stop-color="#ffffb2" stop-opacity="0"/></radialGradient><radialGradient id="s207" cx="0.791" cy="0.242" r="0.74"><stop offset="0" stop-color="#f5de00"/><stop offset="0.3" stop-color="#f5de00"/><stop offset="0.49" stop-color="#d1bd00"/><stop offset="0.68" stop-color="#918300"/><stop offset="0.81" stop-color="#5c5400"/><stop offset="0.93" stop-color="#2c2800"/></radialGradient><radialGradient id="s208" cx="0.775" cy="0.210" r="0.74"><stop offset="0" stop-color="#f5de00"/><stop offset="0.3" stop-color="#f5de00"/><stop offset="0.49" stop-color="#d1bd00"/><stop offset="0.68" stop-color="#918300"/><stop offset="0.81" stop-color="#5c5400"/><stop offset="0.93" stop-color="#2c2800"/></radialGradient><radialGradient id="s209" cx="0.639" cy="0.236" r="0.74"><stop offset="0" stop-color="#f98c00"/><stop offset="0.3" stop-color="#f98c00"/><stop offset="0.49" stop-color="#d47700"/><stop offset="0.68" stop-color="#935300"/><stop offset="0.81" stop-color="#5e3500"/><stop offset="0.93" stop-color="#2d1900"/></radialGradient><radialGradient id="s210" cx="0.656" cy="0.204" r="0.74"><stop offset="0" stop-color="#f8ab00"/><stop offset="0.3" stop-color="#f8ab00"/><stop offset="0.49" stop-color="#d49200"/><stop offset="0.68" stop-color="#936500"/><stop offset="0.81" stop-color="#5e4000"/><stop offset="0.93" stop-color="#2d1f00"/></radialGradient><radialGradient id="s211" cx="0.729" cy="0.344" r="0.74"><stop offset="0" stop-color="#fd2800"/><stop offset="0.3" stop-color="#fd2800"/><stop offset="0.49" stop-color="#d82200"/><stop offset="0.68" stop-color="#951700"/><stop offset="0.81" stop-color="#5f0f00"/><stop offset="0.93" stop-color="#2e0700"/></radialGradient><radialGradient id="s212" cx="0.691" cy="0.343" r="0.74"><stop offset="0" stop-color="#fc3b00"/><stop offset="0.3" stop-color="#fc3b00"/><stop offset="0.49" stop-color="#d73200"/><stop offset="0.68" stop-color="#952300"/><stop offset="0.81" stop-color="#5f1600"/><stop offset="0.93" stop-color="#2d0b00"/></radialGradient><radialGradient id="h63b"><stop offset="0" stop-color="#ffeeb2" stop-opacity="1"/><stop offset="0.35" stop-color="#ffeeb2" stop-opacity="0.7"/><stop offset="1" stop-color="#ffeeb2" stop-opacity="0"/></radialGradient><radialGradient id="s213" cx="0.788" cy="0.298" r="0.74"><stop offset="0" stop-color="#ff0400"/><stop offset="0.3" stop-color="#ff0400"/><stop offset="0.49" stop-color="#d90300"/><stop offset="0.68" stop-color="#960200"/><stop offset="0.81" stop-color="#600200"/><stop offset="0.93" stop-color="#2e0100"/></radialGradient><radialGradient id="h64b"><stop offset="0" stop-color="#ffb6b2" stop-opacity="1"/><stop offset="0.35" stop-color="#ffb6b2" stop-opacity="0.7"/><stop offset="1" stop-color="#ffb6b2" stop-opacity="0"/></radialGradient><radialGradient id="s214" cx="0.724" cy="0.178" r="0.74"><stop offset="0" stop-color="#f8c900"/><stop offset="0.3" stop-color="#f8c900"/><stop offset="0.49" stop-color="#d3ac00"/><stop offset="0.68" stop-color="#927700"/><stop offset="0.81" stop-color="#5d4c00"/><stop offset="0.93" stop-color="#2d2400"/></radialGradient><radialGradient id="s215" cx="0.796" cy="0.260" r="0.74"><stop offset="0" stop-color="#ff0000"/><stop offset="0.3" stop-color="#ff0000"/><stop offset="0.49" stop-color="#d90000"/><stop offset="0.68" stop-color="#960000"/><stop offset="0.81" stop-color="#600000"/><stop offset="0.93" stop-color="#2e0000"/></radialGradient><radialGradient id="h65b"><stop offset="0" stop-color="#ffb2b2" stop-opacity="1"/><stop offset="0.35" stop-color="#ffb2b2" stop-opacity="0.7"/><stop offset="1" stop-color="#ffb2b2" stop-opacity="0"/></radialGradient><radialGradient id="s216" cx="0.631" cy="0.296" r="0.74"><stop offset="0" stop-color="#fb5e00"/><stop offset="0.3" stop-color="#fb5e00"/><stop offset="0.49" stop-color="#d65000"/><stop offset="0.68" stop-color="#943700"/><stop offset="0.81" stop-color="#5f2300"/><stop offset="0.93" stop-color="#2d1100"/></radialGradient><radialGradient id="h66b"><stop offset="0" stop-color="#ffffb2" stop-opacity="1"/><stop offset="0.35" stop-color="#ffffb2" stop-opacity="0.7"/><stop offset="1" stop-color="#ffffb2" stop-opacity="0"/></radialGradient><radialGradient id="s217" cx="0.760" cy="0.192" r="0.74"><stop offset="0" stop-color="#f8c900"/><stop offset="0.3" stop-color="#f8c900"/><stop offset="0.49" stop-color="#d3ac00"/><stop offset="0.68" stop-color="#927700"/><stop offset="0.81" stop-color="#5d4c00"/><stop offset="0.93" stop-color="#2d2400"/></radialGradient><radialGradient id="s218" cx="0.622" cy="0.258" r="0.74"><stop offset="0" stop-color="#fa7100"/><stop offset="0.3" stop-color="#fa7100"/><stop offset="0.49" stop-color="#d56100"/><stop offset="0.68" stop-color="#934300"/><stop offset="0.81" stop-color="#5e2b00"/><stop offset="0.93" stop-color="#2d1400"/></radialGradient><radialGradient id="h67b"><stop offset="0" stop-color="#ffffb2" stop-opacity="1"/><stop offset="0.35" stop-color="#ffffb2" stop-opacity="0.7"/><stop offset="1" stop-color="#ffffb2" stop-opacity="0"/></radialGradient><radialGradient id="s219" cx="0.656" cy="0.187" r="0.74"><stop offset="0" stop-color="#f8ab00"/><stop offset="0.3" stop-color="#f8ab00"/><stop offset="0.49" stop-color="#d49200"/><stop offset="0.68" stop-color="#936500"/><stop offset="0.81" stop-color="#5e4000"/><stop offset="0.93" stop-color="#2d1f00"/></radialGradient><radialGradient id="s220" cx="0.747" cy="0.348" r="0.74"><stop offset="0" stop-color="#fe0c00"/><stop offset="0.3" stop-color="#fe0c00"/><stop offset="0.49" stop-color="#d90a00"/><stop offset="0.68" stop-color="#960700"/><stop offset="0.81" stop-color="#600400"/><stop offset="0.93" stop-color="#2e0200"/></radialGradient><radialGradient id="h68b"><stop offset="0" stop-color="#ffbeb2" stop-opacity="1"/><stop offset="0.35" stop-color="#ffbeb2" stop-opacity="0.7"/><stop offset="1" stop-color="#ffbeb2" stop-opacity="0"/></radialGradient><radialGradient id="s221" cx="0.663" cy="0.350" r="0.74"><stop offset="0" stop-color="#fd3300"/><stop offset="0.3" stop-color="#fd3300"/><stop offset="0.49" stop-color="#d72c00"/><stop offset="0.68" stop-color="#951e00"/><stop offset="0.81" stop-color="#5f1300"/><stop offset="0.93" stop-color="#2d0900"/></radialGradient><radialGradient id="h69b"><stop offset="0" stop-color="#ffe6b2" stop-opacity="1"/><stop offset="0.35" stop-color="#ffe6b2" stop-opacity="0.7"/><stop offset="1" stop-color="#ffe6b2" stop-opacity="0"/></radialGradient><radialGradient id="s222" cx="0.780" cy="0.321" r="0.74"><stop offset="0" stop-color="#ff0000"/><stop offset="0.3" stop-color="#ff0000"/><stop offset="0.49" stop-color="#d90000"/><stop offset="0.68" stop-color="#960000"/><stop offset="0.81" stop-color="#600000"/><stop offset="0.93" stop-color="#2e0000"/></radialGradient><radialGradient id="s223" cx="0.694" cy="0.171" r="0.74"><stop offset="0" stop-color="#f8b200"/><stop offset="0.3" stop-color="#f8b200"/><stop offset="0.49" stop-color="#d49800"/><stop offset="0.68" stop-color="#926900"/><stop offset="0.81" stop-color="#5e4300"/><stop offset="0.93" stop-color="#2d2000"/></radialGradient><radialGradient id="s224" cx="0.628" cy="0.323" r="0.74"><stop offset="0" stop-color="#fc4700"/><stop offset="0.3" stop-color="#fc4700"/><stop offset="0.49" stop-color="#d73c00"/><stop offset="0.68" stop-color="#952a00"/><stop offset="0.81" stop-color="#5f1b00"/><stop offset="0.93" stop-color="#2d0d00"/></radialGradient><radialGradient id="s225" cx="0.795" cy="0.238" r="0.74"><stop offset="0" stop-color="#f8c900"/><stop offset="0.3" stop-color="#f8c900"/><stop offset="0.49" stop-color="#d3ac00"/><stop offset="0.68" stop-color="#927700"/><stop offset="0.81" stop-color="#5d4c00"/><stop offset="0.93" stop-color="#2d2400"/></radialGradient><radialGradient id="s226" cx="0.773" cy="0.199" r="0.74"><stop offset="0" stop-color="#f8c200"/><stop offset="0.3" stop-color="#f8c200"/><stop offset="0.49" stop-color="#d3a500"/><stop offset="0.68" stop-color="#927200"/><stop offset="0.81" stop-color="#5d4900"/><stop offset="0.93" stop-color="#2d2300"/></radialGradient><radialGradient id="s227" cx="0.605" cy="0.240" r="0.74"><stop offset="0" stop-color="#fa6d00"/><stop offset="0.3" stop-color="#fa6d00"/><stop offset="0.49" stop-color="#d55d00"/><stop offset="0.68" stop-color="#944100"/><stop offset="0.81" stop-color="#5e2900"/><stop offset="0.93" stop-color="#2d1400"/></radialGradient><radialGradient id="s228" cx="0.623" cy="0.198" r="0.74"><stop offset="0" stop-color="#f98400"/><stop offset="0.3" stop-color="#f98400"/><stop offset="0.49" stop-color="#d47100"/><stop offset="0.68" stop-color="#934e00"/><stop offset="0.81" stop-color="#5e3200"/><stop offset="0.93" stop-color="#2d1800"/></radialGradient><radialGradient id="h70b"><stop offset="0" stop-color="#ffffb2" stop-opacity="1"/><stop offset="0.35" stop-color="#ffffb2" stop-opacity="0.7"/><stop offset="1" stop-color="#ffffb2" stop-opacity="0"/></radialGradient><radialGradient id="s229" cx="0.724" cy="0.371" r="0.74"><stop offset="0" stop-color="#fe1000"/><stop offset="0.3" stop-color="#fe1000"/><stop offset="0.49" stop-color="#d90e00"/><stop offset="0.68" stop-color="#960900"/><stop offset="0.81" stop-color="#600600"/><stop offset="0.93" stop-color="#2e0300"/></radialGradient><radialGradient id="h71b"><stop offset="0" stop-color="#ffc2b2" stop-opacity="1"/><stop offset="0.35" stop-color="#ffc2b2" stop-opacity="0.7"/><stop offset="1" stop-color="#ffc2b2" stop-opacity="0"/></radialGradient><radialGradient id="s230" cx="0.675" cy="0.372" r="0.74"><stop offset="0" stop-color="#fd2400"/><stop offset="0.3" stop-color="#fd2400"/><stop offset="0.49" stop-color="#d81e00"/><stop offset="0.68" stop-color="#961500"/><stop offset="0.81" stop-color="#5f0d00"/><stop offset="0.93" stop-color="#2e0600"/></radialGradient><radialGradient id="s231" cx="0.795" cy="0.308" r="0.74"><stop offset="0" stop-color="#ff0000"/><stop offset="0.3" stop-color="#ff0000"/><stop offset="0.49" stop-color="#d90000"/><stop offset="0.68" stop-color="#960000"/><stop offset="0.81" stop-color="#600000"/><stop offset="0.93" stop-color="#2e0000"/></radialGradient><radialGradient id="s232" cx="0.706" cy="0.161" r="0.74"><stop offset="0" stop-color="#f9a300"/><stop offset="0.3" stop-color="#f9a300"/><stop offset="0.49" stop-color="#d48b00"/><stop offset="0.68" stop-color="#936000"/><stop offset="0.81" stop-color="#5e3d00"/><stop offset="0.93" stop-color="#2d1d00"/></radialGradient><radialGradient id="s233" cx="0.802" cy="0.260" r="0.74"><stop offset="0" stop-color="#ff0000"/><stop offset="0.3" stop-color="#ff0000"/><stop offset="0.49" stop-color="#d90000"/><stop offset="0.68" stop-color="#960000"/><stop offset="0.81" stop-color="#600000"/><stop offset="0.93" stop-color="#2e0000"/></radialGradient><radialGradient id="s234" cx="0.596" cy="0.317" r="0.74"><stop offset="0" stop-color="#fc4700"/><stop offset="0.3" stop-color="#fc4700"/><stop offset="0.49" stop-color="#d73c00"/><stop offset="0.68" stop-color="#952a00"/><stop offset="0.81" stop-color="#5f1b00"/><stop offset="0.93" stop-color="#2d0d00"/></radialGradient><radialGradient id="s235" cx="0.752" cy="0.176" r="0.74"><stop offset="0" stop-color="#f8ab00"/><stop offset="0.3" stop-color="#f8ab00"/><stop offset="0.49" stop-color="#d49200"/><stop offset="0.68" stop-color="#936500"/><stop offset="0.81" stop-color="#5e4000"/><stop offset="0.93" stop-color="#2d1f00"/></radialGradient><radialGradient id="s236" cx="0.625" cy="0.175" r="0.74"><stop offset="0" stop-color="#f97d00"/><stop offset="0.3" stop-color="#f97d00"/><stop offset="0.49" stop-color="#d56a00"/><stop offset="0.68" stop-color="#934a00"/><stop offset="0.81" stop-color="#5e2f00"/><stop offset="0.93" stop-color="#2d1600"/></radialGradient><radialGradient id="s237" cx="0.745" cy="0.379" r="0.74"><stop offset="0" stop-color="#ff0000"/><stop offset="0.3" stop-color="#ff0000"/><stop offset="0.49" stop-color="#d90000"/><stop offset="0.68" stop-color="#960000"/><stop offset="0.81" stop-color="#600000"/><stop offset="0.93" stop-color="#2e0000"/></radialGradient><radialGradient id="s238" cx="0.636" cy="0.386" r="0.74"><stop offset="0" stop-color="#fd2400"/><stop offset="0.3" stop-color="#fd2400"/><stop offset="0.49" stop-color="#d81e00"/><stop offset="0.68" stop-color="#961500"/><stop offset="0.81" stop-color="#5f0d00"/><stop offset="0.93" stop-color="#2e0600"/></radialGradient><radialGradient id="s239" cx="0.665" cy="0.151" r="0.74"><stop offset="0" stop-color="#f98c00"/><stop offset="0.3" stop-color="#f98c00"/><stop offset="0.49" stop-color="#d47700"/><stop offset="0.68" stop-color="#935300"/><stop offset="0.81" stop-color="#5e3500"/><stop offset="0.93" stop-color="#2d1900"/></radialGradient><radialGradient id="s240" cx="0.787" cy="0.341" r="0.74"><stop offset="0" stop-color="#ff0000"/><stop offset="0.3" stop-color="#ff0000"/><stop offset="0.49" stop-color="#d90000"/><stop offset="0.68" stop-color="#960000"/><stop offset="0.81" stop-color="#600000"/><stop offset="0.93" stop-color="#2e0000"/></radialGradient><radialGradient id="s241" cx="0.801" cy="0.231" r="0.74"><stop offset="0" stop-color="#f9a300"/><stop offset="0.3" stop-color="#f9a300"/><stop offset="0.49" stop-color="#d48b00"/><stop offset="0.68" stop-color="#936000"/><stop offset="0.81" stop-color="#5e3d00"/><stop offset="0.93" stop-color="#2d1d00"/></radialGradient><radialGradient id="s242" cx="0.770" cy="0.182" r="0.74"><stop offset="0" stop-color="#f99b00"/><stop offset="0.3" stop-color="#f99b00"/><stop offset="0.49" stop-color="#d48500"/><stop offset="0.68" stop-color="#935c00"/><stop offset="0.81" stop-color="#5e3b00"/><stop offset="0.93" stop-color="#2d1c00"/></radialGradient><radialGradient id="s243" cx="0.674" cy="0.132" r="0.74"><stop offset="0" stop-color="#f97d00"/><stop offset="0.3" stop-color="#f97d00"/><stop offset="0.49" stop-color="#d56a00"/><stop offset="0.68" stop-color="#934a00"/><stop offset="0.81" stop-color="#5e2f00"/><stop offset="0.93" stop-color="#2d1600"/></radialGradient><radialGradient id="s244" cx="0.814" cy="0.259" r="0.74"><stop offset="0" stop-color="#ff0000"/><stop offset="0.3" stop-color="#ff0000"/><stop offset="0.49" stop-color="#d90000"/><stop offset="0.68" stop-color="#960000"/><stop offset="0.81" stop-color="#600000"/><stop offset="0.93" stop-color="#2e0000"/></radialGradient><radialGradient id="s245" cx="0.739" cy="0.148" r="0.74"><stop offset="0" stop-color="#f98400"/><stop offset="0.3" stop-color="#f98400"/><stop offset="0.49" stop-color="#d47100"/><stop offset="0.68" stop-color="#934e00"/><stop offset="0.81" stop-color="#5e3200"/><stop offset="0.93" stop-color="#2d1800"/></radialGradient></defs><rect width="100%" height="100%" fill="#000"/><circle cx="115.3" cy="100.1" r="4.8" fill="url(#s1)"/>
<circle cx="116.5" cy="98.3" r="1.8" fill="url(#h0s)"/>
<path d="M114.6 102.6L114.3 103.9" stroke="#0f003d" stroke-width="2.8"/>
<path d="M115.0 102.7L114.7 104.0" stroke="#160059" stroke-width="1.7"/>
<path d="M117.1 96.1L118.1 94.1" stroke="#0f003d" stroke-width="2.8"/>
<path d="M117.5 96.3L118.5 94.3" stroke="#160059" stroke-width="1.7"/>
<path d="M120.9 88.0L118.1 94.1" stroke="#0f003d" stroke-width="2.8"/>
<path d="M121.3 88.2L118.5 94.3" stroke="#160059" stroke-width="1.7"/>
<circle cx="120.9" cy="88.0" r="4.9" fill="url(#s2)"/>
<circle cx="122.1" cy="86.0" r="1.8" fill="url(#h0s)"/>
<path d="M121.8 86.5L122.3 85.7" stroke="#0f003d" stroke-width="2.9"/>
<path d="M122.2 86.7L122.7 85.9" stroke="#160059" stroke-width="1.7"/>
<circle cx="138.8" cy="135.8" r="4.9" fill="url(#s3)"/>
<circle cx="140.3" cy="134.3" r="1.9" fill="url(#h0s)"/>
<path d="M143.3 135.4L145.5 135.2" stroke="#0f003d" stroke-width="2.8"/>
<path d="M143.2 135.0L145.5 134.8" stroke="#160059" stroke-width="1.7"/>
<path d="M136.6 135.7L135.4 135.7" stroke="#0f003d" stroke-width="2.9"/>
<path d="M136.6 135.3L135.4 135.3" stroke="#160059" stroke-width="1.7"/>
<path d="M152.2 134.6L145.5 135.2" stroke="#12003a" stroke-width="2.8"/>
<path d="M152.2 134.2L145.5 134.8" stroke="#1a0055" stroke-width="1.7"/>
<circle cx="152.2" cy="134.6" r="4.9" fill="url(#s4)"/>
<circle cx="153.9" cy="133.1" r="1.9" fill="url(#h1s)"/>
<path d="M154.4 133.9L155.5 133.6" stroke="#12003a" stroke-width="2.9"/>
<path d="M154.2 133.5L155.4 133.1" stroke="#1a0055" stroke-width="1.7"/>
<circle cx="144.5" cy="77.0" r="4.9" fill="url(#s5)"/>
<circle cx="146.1" cy="74.9" r="1.9" fill="url(#h2s)"/>
<path d="M148.8 78.2L151.0 78.8" stroke="#0c0041" stroke-width="2.9"/>
<path d="M148.9 77.8L151.1 78.4" stroke="#12005e" stroke-width="1.7"/>
<path d="M141.8 77.0L140.4 77.0" stroke="#0c0041" stroke-width="2.9"/>
<path d="M141.8 76.6L140.4 76.6" stroke="#12005e" stroke-width="1.7"/>
<circle cx="171.0" cy="116.1" r="4.9" fill="url(#s6)"/>
<circle cx="172.9" cy="114.4" r="1.9" fill="url(#h3s)"/>
<path d="M171.4 111.6L171.6 109.3" stroke="#150037" stroke-width="2.9"/>
<path d="M171.8 111.6L172.1 109.4" stroke="#1e0050" stroke-width="1.7"/>
<path d="M170.2 118.1L169.8 119.2" stroke="#150037" stroke-width="2.9"/>
<path d="M170.6 118.3L170.2 119.3" stroke="#1e0050" stroke-width="1.7"/>
<circle cx="117.0" cy="120.9" r="4.9" fill="url(#s7)"/>
<circle cx="118.3" cy="119.2" r="1.9" fill="url(#h2s)"/>
<path d="M118.1 123.2L118.6 124.4" stroke="#0c0041" stroke-width="2.9"/>
<path d="M118.5 123.0L119.0 124.2" stroke="#12005e" stroke-width="1.7"/>
<path d="M115.8 116.6L115.1 114.4" stroke="#0c0041" stroke-width="2.9"/>
<path d="M116.2 116.4L115.5 114.3" stroke="#12005e" stroke-width="1.7"/>
<path d="M172.3 102.5L171.6 109.3" stroke="#150037" stroke-width="2.9"/>
<path d="M172.7 102.6L172.1 109.4" stroke="#1e0050" stroke-width="1.7"/>
<circle cx="172.3" cy="102.5" r="4.9" fill="url(#s8)"/>
<circle cx="174.2" cy="100.6" r="1.9" fill="url(#h3s)"/>
<path d="M171.8 100.1L171.5 98.8" stroke="#150037" stroke-width="2.9"/>
<path d="M172.2 100.0L171.9 98.7" stroke="#1e0050" stroke-width="1.7"/>
<path d="M157.5 80.6L151.0 78.8" stroke="#0c0041" stroke-width="2.9"/>
<path d="M157.6 80.2L151.1 78.4" stroke="#12005e" stroke-width="1.7"/>
<circle cx="157.5" cy="80.6" r="4.9" fill="url(#s9)"/>
<circle cx="159.2" cy="78.5" r="1.9" fill="url(#h2s)"/>
<path d="M159.1 81.6L159.9 82.1" stroke="#0c0041" stroke-width="2.9"/>
<path d="M159.3 81.2L160.1 81.7" stroke="#12005e" stroke-width="1.7"/>
<path d="M113.2 107.8L115.1 114.4" stroke="#0c0041" stroke-width="2.9"/>
<path d="M113.6 107.7L115.5 114.3" stroke="#12005e" stroke-width="1.7"/>
<circle cx="113.2" cy="107.8" r="4.9" fill="url(#s10)"/>
<circle cx="114.4" cy="106.0" r="1.9" fill="url(#h2s)"/>
<path d="M112.8 105.9L112.6 104.9" stroke="#0c0041" stroke-width="2.9"/>
<path d="M113.2 105.8L113.0 104.8" stroke="#12005e" stroke-width="1.7"/>
<circle cx="123.8" cy="83.3" r="5.0" fill="url(#s11)"/>
<circle cx="125.2" cy="81.1" r="1.9" fill="url(#h4s)"/>
<path d="M121.7 85.0L120.5 85.9" stroke="#080044" stroke-width="2.9"/>
<path d="M121.4 84.7L120.3 85.6" stroke="#0c0062" stroke-width="1.8"/>
<path d="M127.9 81.2L130.0 80.2" stroke="#080044" stroke-width="2.9"/>
<path d="M127.7 80.8L129.8 79.8" stroke="#0c0062" stroke-width="1.8"/>
<circle cx="131.9" cy="135.5" r="5.0" fill="url(#s12)"/>
<circle cx="133.4" cy="134.0" r="1.9" fill="url(#h2s)"/>
<path d="M134.2 136.5L135.3 137.0" stroke="#0c0041" stroke-width="3.0"/>
<path d="M134.3 136.1L135.5 136.6" stroke="#12005e" stroke-width="1.8"/>
<path d="M128.0 133.0L126.1 131.7" stroke="#0c0041" stroke-width="2.9"/>
<path d="M128.3 132.6L126.3 131.4" stroke="#12005e" stroke-width="1.8"/>
<circle cx="158.9" cy="132.4" r="5.0" fill="url(#s13)"/>
<circle cx="160.7" cy="130.8" r="1.9" fill="url(#h0s)"/>
<path d="M162.1 129.1L163.7 127.4" stroke="#0f003d" stroke-width="2.9"/>
<path d="M162.4 129.4L164.0 127.7" stroke="#160059" stroke-width="1.8"/>
<path d="M157.0 133.7L156.0 134.4" stroke="#0f003d" stroke-width="3.0"/>
<path d="M156.7 133.4L155.7 134.1" stroke="#160059" stroke-width="1.8"/>
<path d="M136.2 77.1L130.0 80.2" stroke="#080044" stroke-width="2.9"/>
<path d="M136.0 76.7L129.8 79.8" stroke="#0c0062" stroke-width="1.8"/>
<circle cx="136.2" cy="77.1" r="5.1" fill="url(#s14)"/>
<circle cx="137.7" cy="74.9" r="1.9" fill="url(#h4s)"/>
<path d="M137.9 76.6L138.8 76.3" stroke="#080044" stroke-width="3.0"/>
<path d="M137.8 76.2L138.7 75.9" stroke="#0c0062" stroke-width="1.8"/>
<path d="M168.6 122.3L163.7 127.4" stroke="#12003a" stroke-width="2.9"/>
<path d="M168.9 122.6L164.0 127.7" stroke="#1a0055" stroke-width="1.8"/>
<circle cx="168.6" cy="122.3" r="5.1" fill="url(#s15)"/>
<circle cx="170.5" cy="120.6" r="1.9" fill="url(#h1s)"/>
<path d="M169.6 120.2L170.2 119.1" stroke="#12003a" stroke-width="3.0"/>
<path d="M170.0 120.4L170.6 119.3" stroke="#1a0055" stroke-width="1.8"/>
<path d="M120.2 127.9L126.1 131.7" stroke="#080044" stroke-width="2.9"/>
<path d="M120.5 127.6L126.3 131.4" stroke="#0c0062" stroke-width="1.8"/>
<circle cx="120.2" cy="127.9" r="5.1" fill="url(#s16)"/>
<circle cx="121.5" cy="126.3" r="1.9" fill="url(#h4s)"/>
<path d="M118.5 126.6L117.6 125.9" stroke="#080044" stroke-width="3.0"/>
<path d="M118.7 126.2L117.8 125.5" stroke="#0c0062" stroke-width="1.8"/>
<circle cx="170.6" cy="95.1" r="5.1" fill="url(#s17)"/>
<circle cx="172.5" cy="93.0" r="1.9" fill="url(#h5s)"/>
<path d="M167.8 91.2L166.5 89.3" stroke="#040047" stroke-width="2.9"/>
<path d="M168.2 91.0L166.9 89.1" stroke="#060067" stroke-width="1.8"/>
<path d="M171.2 97.0L171.6 98.1" stroke="#040047" stroke-width="3.0"/>
<path d="M171.7 96.9L172.0 97.9" stroke="#060067" stroke-width="1.8"/>
<path d="M162.4 83.6L166.5 89.3" stroke="#040047" stroke-width="2.9"/>
<path d="M162.8 83.4L166.9 89.1" stroke="#060067" stroke-width="1.8"/>
<circle cx="162.4" cy="83.6" r="5.1" fill="url(#s18)"/>
<circle cx="164.3" cy="81.5" r="1.9" fill="url(#h5s)"/>
<path d="M160.2 82.0L159.1 81.2" stroke="#040047" stroke-width="3.0"/>
<path d="M160.5 81.7L159.3 80.8" stroke="#060067" stroke-width="1.8"/>
<circle cx="111.9" cy="101.8" r="5.1" fill="url(#s19)"/>
<circle cx="113.1" cy="99.8" r="1.9" fill="url(#h5s)"/>
<path d="M111.3 104.5L111.0 105.9" stroke="#040047" stroke-width="3.0"/>
<path d="M111.7 104.6L111.4 106.0" stroke="#060067" stroke-width="1.8"/>
<path d="M113.6 97.4L114.5 95.2" stroke="#040047" stroke-width="3.0"/>
<path d="M114.1 97.6L114.9 95.4" stroke="#060067" stroke-width="1.8"/>
<path d="M117.2 88.6L114.5 95.2" stroke="#00004a" stroke-width="3.0"/>
<path d="M117.6 88.8L114.9 95.4" stroke="#00006b" stroke-width="1.8"/>
<circle cx="117.2" cy="88.6" r="5.2" fill="url(#s20)"/>
<circle cx="118.4" cy="86.5" r="2.0" fill="url(#h6s)"/>
<path d="M118.0 86.9L118.5 86.0" stroke="#00004a" stroke-width="3.0"/>
<path d="M118.4 87.1L118.9 86.2" stroke="#00006b" stroke-width="1.8"/>
<circle cx="138.8" cy="138.5" r="5.2" fill="url(#s21)"/>
<circle cx="140.3" cy="136.9" r="2.0" fill="url(#h4s)"/>
<path d="M143.5 137.8L145.9 137.5" stroke="#080044" stroke-width="3.0"/>
<path d="M143.4 137.4L145.8 137.0" stroke="#0c0062" stroke-width="1.8"/>
<path d="M136.4 138.5L135.1 138.5" stroke="#080044" stroke-width="3.1"/>
<path d="M136.4 138.0L135.1 138.1" stroke="#0c0062" stroke-width="1.8"/>
<path d="M153.0 136.5L145.9 137.5" stroke="#0c0041" stroke-width="3.0"/>
<path d="M152.9 136.0L145.8 137.0" stroke="#12005e" stroke-width="1.8"/>
<circle cx="153.0" cy="136.5" r="5.2" fill="url(#s22)"/>
<circle cx="154.8" cy="134.9" r="2.0" fill="url(#h2s)"/>
<path d="M155.2 135.6L156.4 135.2" stroke="#0c0041" stroke-width="3.1"/>
<path d="M155.1 135.2L156.2 134.7" stroke="#12005e" stroke-width="1.8"/>
<circle cx="141.6" cy="75.6" r="5.2" fill="url(#s23)"/>
<circle cx="143.3" cy="73.3" r="2.0" fill="url(#h6s)"/>
<path d="M146.3 76.6L148.6 77.1" stroke="#00004a" stroke-width="3.0"/>
<path d="M146.4 76.2L148.7 76.7" stroke="#00006b" stroke-width="1.8"/>
<path d="M138.7 75.7L137.2 75.8" stroke="#00004a" stroke-width="3.1"/>
<path d="M138.7 75.3L137.2 75.3" stroke="#00006b" stroke-width="1.8"/>
<circle cx="171.9" cy="115.7" r="5.2" fill="url(#s24)"/>
<circle cx="174.0" cy="113.8" r="2.0" fill="url(#h0s)"/>
<path d="M172.2 110.8L172.3 108.4" stroke="#0f003d" stroke-width="3.0"/>
<path d="M172.6 110.9L172.7 108.5" stroke="#160059" stroke-width="1.8"/>
<path d="M171.2 117.9L170.8 119.0" stroke="#0f003d" stroke-width="3.1"/>
<path d="M171.7 118.0L171.3 119.2" stroke="#160059" stroke-width="1.8"/>
<circle cx="114.8" cy="123.8" r="5.2" fill="url(#s25)"/>
<circle cx="116.1" cy="122.0" r="2.0" fill="url(#h5s)"/>
<path d="M116.0 126.2L116.6 127.4" stroke="#040047" stroke-width="3.1"/>
<path d="M116.4 126.0L117.0 127.2" stroke="#060067" stroke-width="1.8"/>
<path d="M113.2 119.2L112.4 117.0" stroke="#040047" stroke-width="3.0"/>
<path d="M113.6 119.1L112.8 116.8" stroke="#060067" stroke-width="1.8"/>
<path d="M172.6 101.2L172.3 108.4" stroke="#12003a" stroke-width="3.0"/>
<path d="M173.1 101.2L172.7 108.5" stroke="#1a0055" stroke-width="1.8"/>
<circle cx="172.6" cy="101.2" r="5.2" fill="url(#s26)"/>
<circle cx="174.7" cy="99.2" r="2.0" fill="url(#h1s)"/>
<path d="M171.9 98.6L171.5 97.3" stroke="#12003a" stroke-width="3.1"/>
<path d="M172.4 98.5L172.0 97.2" stroke="#1a0055" stroke-width="1.9"/>
<path d="M155.6 78.7L148.6 77.1" stroke="#00004a" stroke-width="3.0"/>
<path d="M155.7 78.2L148.7 76.7" stroke="#00006b" stroke-width="1.8"/>
<circle cx="155.6" cy="78.7" r="5.2" fill="url(#s27)"/>
<circle cx="157.5" cy="76.4" r="2.0" fill="url(#h6s)"/>
<path d="M157.4 79.6L158.3 80.1" stroke="#00004a" stroke-width="3.1"/>
<path d="M157.6 79.2L158.5 79.7" stroke="#00006b" stroke-width="1.9"/>
<path d="M110.0 110.1L112.4 117.0" stroke="#040047" stroke-width="3.1"/>
<path d="M110.4 109.9L112.8 116.8" stroke="#060067" stroke-width="1.8"/>
<circle cx="110.0" cy="110.1" r="5.3" fill="url(#s28)"/>
<circle cx="111.2" cy="108.1" r="2.0" fill="url(#h5s)"/>
<path d="M109.4 108.0L109.1 106.9" stroke="#040047" stroke-width="3.1"/>
<path d="M109.8 107.9L109.5 106.8" stroke="#060067" stroke-width="1.9"/>
<circle cx="119.9" cy="83.3" r="5.4" fill="url(#s29)"/>
<circle cx="121.3" cy="81.0" r="2.0" fill="url(#h6s)"/>
<path d="M117.7 85.3L116.5 86.3" stroke="#00004a" stroke-width="3.1"/>
<path d="M117.3 84.9L116.2 85.9" stroke="#00006b" stroke-width="1.9"/>
<path d="M124.2 80.9L126.3 79.7" stroke="#00004a" stroke-width="3.1"/>
<path d="M123.9 80.5L126.0 79.3" stroke="#00006b" stroke-width="1.9"/>
<circle cx="131.4" cy="138.6" r="5.4" fill="url(#s30)"/>
<circle cx="132.9" cy="136.9" r="2.0" fill="url(#h5s)"/>
<path d="M133.8 139.5L135.0 139.9" stroke="#040047" stroke-width="3.2"/>
<path d="M133.9 139.0L135.2 139.5" stroke="#060067" stroke-width="1.9"/>
<path d="M127.1 136.1L124.9 134.8" stroke="#040047" stroke-width="3.1"/>
<path d="M127.3 135.7L125.2 134.4" stroke="#060067" stroke-width="1.9"/>
<circle cx="159.9" cy="133.8" r="5.4" fill="url(#s31)"/>
<circle cx="161.9" cy="132.1" r="2.0" fill="url(#h4s)"/>
<path d="M163.2 130.0L164.8 128.1" stroke="#080044" stroke-width="3.1"/>
<path d="M163.5 130.3L165.2 128.5" stroke="#0c0062" stroke-width="1.9"/>
<path d="M158.0 135.3L156.9 136.1" stroke="#080044" stroke-width="3.2"/>
<path d="M157.7 134.9L156.6 135.7" stroke="#0c0062" stroke-width="1.9"/>
<path d="M132.7 76.0L126.3 79.7" stroke="#000a46" stroke-width="3.1"/>
<path d="M132.5 75.6L126.0 79.3" stroke="#000f66" stroke-width="1.9"/>
<circle cx="132.7" cy="76.0" r="5.4" fill="url(#s32)"/>
<circle cx="134.3" cy="73.7" r="2.0" fill="url(#h7s)"/>
<path d="M134.5 75.4L135.5 75.1" stroke="#000a46" stroke-width="3.2"/>
<path d="M134.4 74.9L135.3 74.6" stroke="#000f66" stroke-width="1.9"/>
<path d="M118.5 131.1L124.9 134.8" stroke="#040047" stroke-width="3.1"/>
<path d="M118.7 130.7L125.2 134.4" stroke="#060067" stroke-width="1.9"/>
<circle cx="118.5" cy="131.1" r="5.4" fill="url(#s33)"/>
<circle cx="119.8" cy="129.4" r="2.1" fill="url(#h5s)"/>
<path d="M116.5 129.8L115.5 129.1" stroke="#040047" stroke-width="3.2"/>
<path d="M116.7 129.4L115.7 128.7" stroke="#060067" stroke-width="1.9"/>
<path d="M169.7 122.5L164.8 128.1" stroke="#0c0041" stroke-width="3.1"/>
<path d="M170.1 122.8L165.2 128.5" stroke="#12005e" stroke-width="1.9"/>
<circle cx="169.7" cy="122.5" r="5.4" fill="url(#s34)"/>
<circle cx="171.8" cy="120.7" r="2.1" fill="url(#h2s)"/>
<path d="M170.8 120.1L171.3 118.9" stroke="#0c0041" stroke-width="3.2"/>
<path d="M171.2 120.3L171.7 119.1" stroke="#12005e" stroke-width="1.9"/>
<circle cx="161.0" cy="81.6" r="5.4" fill="url(#s35)"/>
<circle cx="163.0" cy="79.2" r="2.1" fill="url(#h7s)"/>
<path d="M158.6 79.9L157.3 79.1" stroke="#000a46" stroke-width="3.2"/>
<path d="M158.9 79.5L157.6 78.7" stroke="#000f66" stroke-width="1.9"/>
<path d="M164.2 85.5L165.7 87.4" stroke="#000a46" stroke-width="3.2"/>
<path d="M164.5 85.2L166.1 87.1" stroke="#000f66" stroke-width="1.9"/>
<path d="M170.4 93.3L165.7 87.4" stroke="#000a46" stroke-width="3.2"/>
<path d="M170.7 93.0L166.1 87.1" stroke="#000f66" stroke-width="1.9"/>
<circle cx="170.4" cy="93.3" r="5.4" fill="url(#s36)"/>
<circle cx="172.5" cy="91.1" r="2.1" fill="url(#h7s)"/>
<path d="M171.2 95.3L171.6 96.4" stroke="#000a46" stroke-width="3.2"/>
<path d="M171.6 95.2L172.1 96.2" stroke="#000f66" stroke-width="1.9"/>
<circle cx="108.1" cy="103.7" r="5.5" fill="url(#s37)"/>
<circle cx="109.4" cy="101.6" r="2.1" fill="url(#h6s)"/>
<path d="M107.6 106.6L107.3 108.1" stroke="#00004a" stroke-width="3.2"/>
<path d="M108.1 106.7L107.8 108.2" stroke="#00006b" stroke-width="1.9"/>
<path d="M109.7 98.9L110.5 96.6" stroke="#00004a" stroke-width="3.2"/>
<path d="M110.2 99.1L111.0 96.7" stroke="#00006b" stroke-width="1.9"/>
<path d="M113.0 89.4L110.5 96.6" stroke="#000a46" stroke-width="3.2"/>
<path d="M113.4 89.5L111.0 96.7" stroke="#000f66" stroke-width="1.9"/>
<circle cx="113.0" cy="89.4" r="5.5" fill="url(#s38)"/>
<circle cx="114.3" cy="87.1" r="2.1" fill="url(#h7s)"/>
<path d="M113.8 87.5L114.2 86.5" stroke="#000a46" stroke-width="3.3"/>
<path d="M114.2 87.6L114.7 86.7" stroke="#000f66" stroke-width="2.0"/>
<circle cx="138.7" cy="141.4" r="5.6" fill="url(#s39)"/>
<circle cx="140.4" cy="139.7" r="2.1" fill="url(#h6s)"/>
<path d="M143.8 140.4L146.3 139.9" stroke="#00004a" stroke-width="3.2"/>
<path d="M143.7 139.9L146.2 139.5" stroke="#00006b" stroke-width="1.9"/>
<path d="M136.2 141.6L134.8 141.7" stroke="#00004a" stroke-width="3.3"/>
<path d="M136.1 141.1L134.8 141.2" stroke="#00006b" stroke-width="2.0"/>
<path d="M153.8 138.5L146.3 139.9" stroke="#040047" stroke-width="3.2"/>
<path d="M153.7 138.0L146.2 139.5" stroke="#060067" stroke-width="1.9"/>
<circle cx="153.8" cy="138.5" r="5.6" fill="url(#s40)"/>
<circle cx="155.7" cy="136.8" r="2.1" fill="url(#h5s)"/>
<path d="M156.2 137.4L157.4 136.9" stroke="#040047" stroke-width="3.3"/>
<path d="M156.0 137.0L157.2 136.4" stroke="#060067" stroke-width="2.0"/>
<circle cx="138.4" cy="74.0" r="5.6" fill="url(#s41)"/>
<circle cx="140.1" cy="71.6" r="2.1" fill="url(#h7s)"/>
<path d="M143.4 74.9L145.9 75.3" stroke="#000a46" stroke-width="3.3"/>
<path d="M143.5 74.4L146.0 74.8" stroke="#000f66" stroke-width="2.0"/>
<path d="M135.2 74.3L133.6 74.5" stroke="#000a46" stroke-width="3.3"/>
<path d="M135.2 73.8L133.6 74.0" stroke="#000f66" stroke-width="2.0"/>
<circle cx="173.0" cy="115.2" r="5.6" fill="url(#s42)"/>
<circle cx="175.2" cy="113.2" r="2.1" fill="url(#h4s)"/>
<path d="M172.9 110.0L172.9 107.4" stroke="#080044" stroke-width="3.3"/>
<path d="M173.4 110.0L173.4 107.4" stroke="#0c0062" stroke-width="2.0"/>
<path d="M172.3 117.6L172.0 118.9" stroke="#080044" stroke-width="3.3"/>
<path d="M172.8 117.7L172.5 119.0" stroke="#0c0062" stroke-width="2.0"/>
<circle cx="112.3" cy="127.0" r="5.6" fill="url(#s43)"/>
<circle cx="113.7" cy="125.2" r="2.1" fill="url(#h6s)"/>
<path d="M113.7 129.5L114.4 130.8" stroke="#00004a" stroke-width="3.3"/>
<path d="M114.1 129.3L114.8 130.6" stroke="#00006b" stroke-width="2.0"/>
<path d="M110.4 122.2L109.4 119.8" stroke="#00004a" stroke-width="3.3"/>
<path d="M110.8 122.1L109.8 119.7" stroke="#00006b" stroke-width="2.0"/>
<path d="M153.5 76.6L145.9 75.3" stroke="#000a46" stroke-width="3.3"/>
<path d="M153.6 76.1L146.0 74.8" stroke="#000f66" stroke-width="2.0"/>
<circle cx="153.5" cy="76.6" r="5.6" fill="url(#s44)"/>
<circle cx="155.4" cy="74.1" r="2.1" fill="url(#h7s)"/>
<path d="M155.4 77.4L156.4 77.9" stroke="#000a46" stroke-width="3.3"/>
<path d="M155.6 77.0L156.6 77.4" stroke="#000f66" stroke-width="2.0"/>
<path d="M172.9 99.7L172.9 107.4" stroke="#000a46" stroke-width="3.3"/>
<path d="M173.4 99.7L173.4 107.4" stroke="#000f66" stroke-width="2.0"/>
<circle cx="172.9" cy="99.7" r="5.6" fill="url(#s45)"/>
<circle cx="175.1" cy="97.5" r="2.1" fill="url(#h7s)"/>
<path d="M172.0 96.9L171.5 95.5" stroke="#000a46" stroke-width="3.3"/>
<path d="M172.5 96.8L172.0 95.4" stroke="#000f66" stroke-width="2.0"/>
<path d="M106.4 112.6L109.4 119.8" stroke="#000a46" stroke-width="3.3"/>
<path d="M106.9 112.4L109.8 119.7" stroke="#000f66" stroke-width="2.0"/>
<circle cx="106.4" cy="112.6" r="5.6" fill="url(#s46)"/>
<circle cx="107.7" cy="110.6" r="2.1" fill="url(#h7s)"/>
<path d="M105.6 110.5L105.2 109.3" stroke="#000a46" stroke-width="3.3"/>
<path d="M106.1 110.3L105.7 109.2" stroke="#000f66" stroke-width="2.0"/>
<circle cx="115.5" cy="83.5" r="5.7" fill="url(#s47)"/>
<circle cx="116.9" cy="81.0" r="2.2" fill="url(#h8s)"/>
<path d="M113.2 85.7L111.9 86.8" stroke="#001641" stroke-width="3.4"/>
<path d="M112.8 85.3L111.6 86.4" stroke="#001f5e" stroke-width="2.0"/>
<path d="M119.9 80.6L122.1 79.2" stroke="#001641" stroke-width="3.3"/>
<path d="M119.6 80.2L121.8 78.8" stroke="#001f5e" stroke-width="2.0"/>
<circle cx="130.8" cy="141.9" r="5.8" fill="url(#s48)"/>
<circle cx="132.4" cy="140.2" r="2.2" fill="url(#h7s)"/>
<path d="M133.3 142.8L134.7 143.3" stroke="#000a46" stroke-width="3.4"/>
<path d="M133.5 142.3L134.8 142.8" stroke="#000f66" stroke-width="2.0"/>
<path d="M126.0 139.5L123.7 138.3" stroke="#000a46" stroke-width="3.4"/>
<path d="M126.2 139.1L123.9 137.9" stroke="#000f66" stroke-width="2.0"/>
<path d="M128.8 74.9L122.1 79.2" stroke="#001641" stroke-width="3.3"/>
<path d="M128.5 74.5L121.8 78.8" stroke="#001f5e" stroke-width="2.0"/>
<circle cx="128.8" cy="74.9" r="5.8" fill="url(#s49)"/>
<circle cx="130.4" cy="72.4" r="2.2" fill="url(#h8s)"/>
<path d="M130.6 74.1L131.6 73.7" stroke="#001641" stroke-width="3.4"/>
<path d="M130.4 73.6L131.4 73.2" stroke="#001f5e" stroke-width="2.0"/>
<circle cx="161.1" cy="135.3" r="5.8" fill="url(#s50)"/>
<circle cx="163.2" cy="133.5" r="2.2" fill="url(#h6s)"/>
<path d="M164.4 131.1L166.0 129.0" stroke="#00004a" stroke-width="3.4"/>
<path d="M164.8 131.4L166.4 129.3" stroke="#00006b" stroke-width="2.0"/>
<path d="M159.0 137.0L158.0 137.9" stroke="#00004a" stroke-width="3.4"/>
<path d="M158.7 136.6L157.7 137.5" stroke="#00006b" stroke-width="2.0"/>
<path d="M116.5 134.7L123.7 138.3" stroke="#000a46" stroke-width="3.4"/>
<path d="M116.8 134.2L123.9 137.9" stroke="#000f66" stroke-width="2.0"/>
<circle cx="116.5" cy="134.7" r="5.8" fill="url(#s51)"/>
<circle cx="118.0" cy="132.9" r="2.2" fill="url(#h7s)"/>
<path d="M114.3 133.4L113.1 132.7" stroke="#000a46" stroke-width="3.4"/>
<path d="M114.5 132.9L113.4 132.3" stroke="#000f66" stroke-width="2.1"/>
<path d="M171.0 122.6L166.0 129.0" stroke="#040047" stroke-width="3.4"/>
<path d="M171.4 122.9L166.4 129.3" stroke="#060067" stroke-width="2.0"/>
<circle cx="171.0" cy="122.6" r="5.8" fill="url(#s52)"/>
<circle cx="173.2" cy="120.7" r="2.2" fill="url(#h5s)"/>
<path d="M172.0 120.1L172.5 118.7" stroke="#040047" stroke-width="3.4"/>
<path d="M172.4 120.2L173.0 118.9" stroke="#060067" stroke-width="2.1"/>
<circle cx="159.4" cy="79.2" r="5.8" fill="url(#s53)"/>
<circle cx="161.5" cy="76.7" r="2.2" fill="url(#h8s)"/>
<path d="M156.7 77.6L155.3 76.8" stroke="#001641" stroke-width="3.4"/>
<path d="M157.0 77.2L155.5 76.3" stroke="#001f5e" stroke-width="2.1"/>
<path d="M163.0 83.3L164.7 85.3" stroke="#001641" stroke-width="3.4"/>
<path d="M163.3 82.9L165.1 84.9" stroke="#001f5e" stroke-width="2.0"/>
<path d="M170.1 91.3L164.7 85.3" stroke="#001641" stroke-width="3.4"/>
<path d="M170.4 90.9L165.1 84.9" stroke="#001f5e" stroke-width="2.0"/>
<circle cx="170.1" cy="91.3" r="5.8" fill="url(#s54)"/>
<circle cx="172.3" cy="88.9" r="2.2" fill="url(#h8s)"/>
<path d="M171.1 93.4L171.6 94.5" stroke="#001641" stroke-width="3.4"/>
<path d="M171.5 93.2L172.0 94.3" stroke="#001f5e" stroke-width="2.1"/>
<circle cx="103.9" cy="105.9" r="5.9" fill="url(#s55)"/>
<circle cx="105.2" cy="103.7" r="2.2" fill="url(#h8s)"/>
<path d="M103.4 109.0L103.2 110.6" stroke="#001641" stroke-width="3.5"/>
<path d="M103.9 109.1L103.7 110.7" stroke="#001f5e" stroke-width="2.1"/>
<path d="M105.4 100.7L106.1 98.1" stroke="#001641" stroke-width="3.4"/>
<path d="M105.8 100.8L106.6 98.2" stroke="#001f5e" stroke-width="2.1"/>
<path d="M108.3 90.2L106.1 98.1" stroke="#001641" stroke-width="3.4"/>
<path d="M108.8 90.4L106.6 98.2" stroke="#001f5e" stroke-width="2.1"/>
<circle cx="108.3" cy="90.2" r="5.9" fill="url(#s56)"/>
<circle cx="109.6" cy="87.8" r="2.3" fill="url(#h8s)"/>
<path d="M109.0 88.1L109.4 87.0" stroke="#001641" stroke-width="3.5"/>
<path d="M109.5 88.3L109.9 87.2" stroke="#001f5e" stroke-width="2.1"/>
<circle cx="138.7" cy="144.6" r="6.0" fill="url(#s57)"/>
<circle cx="140.5" cy="142.9" r="2.3" fill="url(#h7s)"/>
<path d="M144.1 143.3L146.7 142.7" stroke="#000a46" stroke-width="3.5"/>
<path d="M143.9 142.8L146.6 142.2" stroke="#000f66" stroke-width="2.1"/>
<path d="M135.9 145.0L134.5 145.2" stroke="#000a46" stroke-width="3.5"/>
<path d="M135.9 144.5L134.4 144.7" stroke="#000f66" stroke-width="2.1"/>
<path d="M154.8 140.7L146.7 142.7" stroke="#00004a" stroke-width="3.5"/>
<path d="M154.6 140.2L146.6 142.2" stroke="#00006b" stroke-width="2.1"/>
<circle cx="154.8" cy="140.7" r="6.0" fill="url(#s58)"/>
<circle cx="156.8" cy="138.9" r="2.3" fill="url(#h6s)"/>
<path d="M157.2 139.5L158.5 138.8" stroke="#00004a" stroke-width="3.5"/>
<path d="M157.0 139.0L158.3 138.4" stroke="#00006b" stroke-width="2.1"/>
<circle cx="134.6" cy="72.4" r="6.0" fill="url(#s59)"/>
<circle cx="136.4" cy="69.7" r="2.3" fill="url(#h8s)"/>
<path d="M140.1 73.0L142.8 73.3" stroke="#001641" stroke-width="3.5"/>
<path d="M140.1 72.5L142.8 72.8" stroke="#001f5e" stroke-width="2.1"/>
<path d="M131.3 72.8L129.5 73.1" stroke="#001641" stroke-width="3.5"/>
<path d="M131.2 72.3L129.4 72.5" stroke="#001f5e" stroke-width="2.1"/>
<circle cx="109.5" cy="130.7" r="6.0" fill="url(#s60)"/>
<circle cx="110.9" cy="128.8" r="2.3" fill="url(#h8s)"/>
<path d="M111.1 133.3L111.9 134.6" stroke="#001641" stroke-width="3.6"/>
<path d="M111.6 133.0L112.4 134.4" stroke="#001f5e" stroke-width="2.1"/>
<path d="M107.2 125.7L106.0 123.1" stroke="#001641" stroke-width="3.5"/>
<path d="M107.7 125.4L106.5 122.9" stroke="#001f5e" stroke-width="2.1"/>
<circle cx="174.0" cy="114.6" r="6.0" fill="url(#s61)"/>
<circle cx="176.4" cy="112.5" r="2.3" fill="url(#h6s)"/>
<path d="M173.7 109.1L173.6 106.3" stroke="#00004a" stroke-width="3.5"/>
<path d="M174.3 109.0L174.1 106.3" stroke="#00006b" stroke-width="2.1"/>
<path d="M173.5 117.3L173.2 118.6" stroke="#00004a" stroke-width="3.6"/>
<path d="M174.0 117.4L173.7 118.7" stroke="#00006b" stroke-width="2.1"/>
<path d="M151.0 74.2L142.8 73.3" stroke="#001641" stroke-width="3.5"/>
<path d="M151.1 73.7L142.8 72.8" stroke="#001f5e" stroke-width="2.1"/>
<circle cx="151.0" cy="74.2" r="6.0" fill="url(#s62)"/>
<circle cx="153.0" cy="71.5" r="2.3" fill="url(#h8s)"/>
<path d="M153.1 75.0L154.2 75.4" stroke="#001641" stroke-width="3.6"/>
<path d="M153.3 74.5L154.4 74.9" stroke="#001f5e" stroke-width="2.1"/>
<path d="M173.1 97.9L173.6 106.3" stroke="#001641" stroke-width="3.5"/>
<path d="M173.7 97.9L174.1 106.3" stroke="#001f5e" stroke-width="2.1"/>
<circle cx="173.1" cy="97.9" r="6.0" fill="url(#s63)"/>
<circle cx="175.5" cy="95.6" r="2.3" fill="url(#h8s)"/>
<path d="M172.0 95.0L171.4 93.6" stroke="#001641" stroke-width="3.6"/>
<path d="M172.5 94.9L171.9 93.4" stroke="#001f5e" stroke-width="2.1"/>
<path d="M102.4 115.5L106.0 123.1" stroke="#001641" stroke-width="3.5"/>
<path d="M102.9 115.3L106.5 122.9" stroke="#001f5e" stroke-width="2.1"/>
<circle cx="102.4" cy="115.5" r="6.1" fill="url(#s64)"/>
<circle cx="103.7" cy="113.4" r="2.3" fill="url(#h8s)"/>
<path d="M101.3 113.3L100.8 112.1" stroke="#001641" stroke-width="3.6"/>
<path d="M101.8 113.0L101.3 111.8" stroke="#001f5e" stroke-width="2.2"/>
<circle cx="110.5" cy="83.7" r="6.2" fill="url(#s65)"/>
<circle cx="111.9" cy="81.1" r="2.3" fill="url(#h9s)"/>
<path d="M108.0 86.2L106.8 87.4" stroke="#00233a" stroke-width="3.6"/>
<path d="M107.6 85.8L106.4 87.1" stroke="#003254" stroke-width="2.2"/>
<path d="M115.0 80.4L117.3 78.8" stroke="#00233a" stroke-width="3.6"/>
<path d="M114.7 80.0L117.0 78.3" stroke="#003254" stroke-width="2.2"/>
<path d="M124.2 73.8L117.3 78.8" stroke="#00233a" stroke-width="3.6"/>
<path d="M123.9 73.3L117.0 78.3" stroke="#003254" stroke-width="2.2"/>
<circle cx="124.2" cy="73.8" r="6.2" fill="url(#s66)"/>
<circle cx="125.9" cy="71.0" r="2.4" fill="url(#h9s)"/>
<path d="M126.2 72.7L127.2 72.2" stroke="#00233a" stroke-width="3.7"/>
<path d="M125.9 72.2L126.9 71.7" stroke="#003254" stroke-width="2.2"/>
<circle cx="130.1" cy="145.8" r="6.2" fill="url(#s67)"/>
<circle cx="131.8" cy="144.0" r="2.4" fill="url(#h8s)"/>
<path d="M132.8 146.6L134.3 147.0" stroke="#001641" stroke-width="3.7"/>
<path d="M133.0 146.1L134.4 146.5" stroke="#001f5e" stroke-width="2.2"/>
<path d="M124.8 143.4L122.2 142.2" stroke="#001641" stroke-width="3.6"/>
<path d="M125.0 142.9L122.4 141.8" stroke="#001f5e" stroke-width="2.2"/>
<circle cx="162.4" cy="136.9" r="6.2" fill="url(#s68)"/>
<circle cx="164.6" cy="135.0" r="2.4" fill="url(#h7s)"/>
<path d="M165.7 132.2L167.3 129.8" stroke="#000a46" stroke-width="3.6"/>
<path d="M166.1 132.5L167.8 130.1" stroke="#000f66" stroke-width="2.2"/>
<path d="M160.3 138.9L159.2 140.0" stroke="#000a46" stroke-width="3.7"/>
<path d="M160.6 139.3L159.5 140.4" stroke="#000f66" stroke-width="2.2"/>
<path d="M114.3 138.7L122.2 142.2" stroke="#001641" stroke-width="3.6"/>
<path d="M114.6 138.2L122.4 141.8" stroke="#001f5e" stroke-width="2.2"/>
<circle cx="114.3" cy="138.7" r="6.2" fill="url(#s69)"/>
<circle cx="115.9" cy="136.8" r="2.4" fill="url(#h8s)"/>
<path d="M111.8 137.5L110.5 136.8" stroke="#001641" stroke-width="3.7"/>
<path d="M112.0 137.0L110.7 136.3" stroke="#001f5e" stroke-width="2.2"/>
<path d="M172.3 122.7L167.3 129.8" stroke="#00004a" stroke-width="3.6"/>
<path d="M172.8 123.1L167.8 130.1" stroke="#00006b" stroke-width="2.2"/>
<circle cx="172.3" cy="122.7" r="6.3" fill="url(#s70)"/>
<circle cx="174.8" cy="120.6" r="2.4" fill="url(#h6s)"/>
<path d="M173.2 119.9L173.7 118.4" stroke="#00004a" stroke-width="3.7"/>
<path d="M173.8 120.1L174.3 118.6" stroke="#00006b" stroke-width="2.2"/>
<circle cx="157.5" cy="76.6" r="6.3" fill="url(#s71)"/>
<circle cx="159.7" cy="73.9" r="2.4" fill="url(#h9s)"/>
<path d="M154.4 75.0L152.9 74.2" stroke="#00233a" stroke-width="3.7"/>
<path d="M154.7 74.5L153.1 73.7" stroke="#003254" stroke-width="2.2"/>
<path d="M161.5 80.8L163.5 82.8" stroke="#00233a" stroke-width="3.7"/>
<path d="M161.9 80.4L163.9 82.4" stroke="#003254" stroke-width="2.2"/>
<path d="M169.6 89.0L163.5 82.8" stroke="#00233a" stroke-width="3.7"/>
<path d="M170.0 88.6L163.9 82.4" stroke="#003254" stroke-width="2.2"/>
<circle cx="169.6" cy="89.0" r="6.3" fill="url(#s72)"/>
<circle cx="172.0" cy="86.4" r="2.4" fill="url(#h9s)"/>
<path d="M170.8 91.2L171.4 92.4" stroke="#00233a" stroke-width="3.7"/>
<path d="M171.3 91.0L171.9 92.1" stroke="#003254" stroke-width="2.2"/>
<circle cx="99.1" cy="108.4" r="6.3" fill="url(#s73)"/>
<circle cx="100.4" cy="106.1" r="2.4" fill="url(#h9s)"/>
<path d="M98.7 111.8L98.5 113.6" stroke="#00233a" stroke-width="3.7"/>
<path d="M99.2 111.9L99.0 113.7" stroke="#003254" stroke-width="2.2"/>
<path d="M100.4 102.8L101.0 99.9" stroke="#00233a" stroke-width="3.7"/>
<path d="M100.9 102.9L101.5 100.0" stroke="#003254" stroke-width="2.2"/>
<path d="M102.9 91.3L101.0 99.9" stroke="#003131" stroke-width="3.7"/>
<path d="M103.5 91.4L101.5 100.0" stroke="#004747" stroke-width="2.2"/>
<circle cx="102.9" cy="91.3" r="6.4" fill="url(#s74)"/>
<circle cx="104.3" cy="88.7" r="2.4" fill="url(#h10s)"/>
<path d="M103.5 89.0L103.8 87.8" stroke="#003131" stroke-width="3.8"/>
<path d="M104.0 89.1L104.3 87.9" stroke="#004747" stroke-width="2.3"/>
<circle cx="138.7" cy="148.3" r="6.5" fill="url(#s75)"/>
<circle cx="140.7" cy="146.5" r="2.5" fill="url(#h8s)"/>
<path d="M144.4 146.6L147.2 145.7" stroke="#001641" stroke-width="3.8"/>
<path d="M144.2 146.1L147.1 145.2" stroke="#001f5e" stroke-width="2.3"/>
<path d="M135.7 148.9L134.1 149.2" stroke="#001641" stroke-width="3.8"/>
<path d="M135.5 148.3L134.0 148.6" stroke="#001f5e" stroke-width="2.3"/>
<path d="M155.8 143.2L147.2 145.7" stroke="#000a46" stroke-width="3.8"/>
<path d="M155.6 142.6L147.1 145.2" stroke="#000f66" stroke-width="2.3"/>
<circle cx="155.8" cy="143.2" r="6.5" fill="url(#s76)"/>
<circle cx="158.1" cy="141.3" r="2.5" fill="url(#h7s)"/>
<path d="M158.4 141.7L159.7 141.0" stroke="#000a46" stroke-width="3.8"/>
<path d="M158.1 141.2L159.4 140.5" stroke="#000f66" stroke-width="2.3"/>
<circle cx="130.3" cy="70.5" r="6.5" fill="url(#s77)"/>
<circle cx="132.1" cy="67.6" r="2.5" fill="url(#h10s)"/>
<path d="M136.2 70.9L139.1 71.1" stroke="#003131" stroke-width="3.8"/>
<path d="M136.2 70.3L139.2 70.5" stroke="#004747" stroke-width="2.3"/>
<path d="M126.6 71.2L124.7 71.5" stroke="#003131" stroke-width="3.8"/>
<path d="M126.5 70.6L124.6 70.9" stroke="#004747" stroke-width="2.3"/>
<circle cx="106.4" cy="134.9" r="6.5" fill="url(#s78)"/>
<circle cx="107.9" cy="132.9" r="2.5" fill="url(#h9s)"/>
<path d="M108.2 137.6L109.1 139.0" stroke="#00233a" stroke-width="3.8"/>
<path d="M108.6 137.3L109.6 138.7" stroke="#003254" stroke-width="2.3"/>
<path d="M103.6 129.6L102.1 126.9" stroke="#00233a" stroke-width="3.8"/>
<path d="M104.1 129.3L102.6 126.7" stroke="#003254" stroke-width="2.3"/>
<circle cx="175.2" cy="114.0" r="6.5" fill="url(#s79)"/>
<circle cx="177.8" cy="111.6" r="2.5" fill="url(#h6s)"/>
<path d="M174.6 108.0L174.3 105.0" stroke="#00004a" stroke-width="3.8"/>
<path d="M175.1 107.9L174.8 104.9" stroke="#00006b" stroke-width="2.3"/>
<path d="M174.8 116.8L174.5 118.3" stroke="#00004a" stroke-width="3.9"/>
<path d="M175.3 116.9L175.1 118.4" stroke="#00006b" stroke-width="2.3"/>
<path d="M148.1 71.6L139.1 71.1" stroke="#003131" stroke-width="3.8"/>
<path d="M148.1 71.0L139.2 70.5" stroke="#004747" stroke-width="2.3"/>
<circle cx="148.1" cy="71.6" r="6.5" fill="url(#s80)"/>
<circle cx="150.2" cy="68.6" r="2.5" fill="url(#h10s)"/>
<path d="M150.3 72.3L151.5 72.6" stroke="#003131" stroke-width="3.9"/>
<path d="M150.5 71.7L151.7 72.1" stroke="#004747" stroke-width="2.3"/>
<path d="M173.3 95.9L174.3 105.0" stroke="#003131" stroke-width="3.8"/>
<path d="M173.9 95.9L174.8 104.9" stroke="#004747" stroke-width="2.3"/>
<circle cx="173.3" cy="95.9" r="6.5" fill="url(#s81)"/>
<circle cx="175.9" cy="93.3" r="2.5" fill="url(#h10s)"/>
<path d="M171.9 92.9L171.2 91.3" stroke="#003131" stroke-width="3.9"/>
<path d="M172.4 92.6L171.7 91.0" stroke="#004747" stroke-width="2.3"/>
<path d="M97.8 118.9L102.1 126.9" stroke="#003131" stroke-width="3.8"/>
<path d="M98.3 118.7L102.6 126.7" stroke="#004747" stroke-width="2.3"/>
<circle cx="97.8" cy="118.9" r="6.6" fill="url(#s82)"/>
<circle cx="99.2" cy="116.7" r="2.5" fill="url(#h10s)"/>
<path d="M96.5 116.5L95.8 115.3" stroke="#003131" stroke-width="3.9"/>
<path d="M97.0 116.2L96.3 115.0" stroke="#004747" stroke-width="2.3"/>
<circle cx="104.7" cy="84.0" r="6.7" fill="url(#s83)"/>
<circle cx="106.2" cy="81.2" r="2.5" fill="url(#h11s)"/>
<path d="M102.1 86.8L100.8 88.3" stroke="#004227" stroke-width="3.9"/>
<path d="M101.7 86.4L100.4 87.9" stroke="#006039" stroke-width="2.4"/>
<path d="M109.4 80.2L111.8 78.3" stroke="#004227" stroke-width="3.9"/>
<path d="M109.1 79.8L111.4 77.8" stroke="#006039" stroke-width="2.3"/>
<path d="M119.0 72.5L111.8 78.3" stroke="#004227" stroke-width="3.9"/>
<path d="M118.6 72.0L111.4 77.8" stroke="#006039" stroke-width="2.3"/>
<circle cx="119.0" cy="72.5" r="6.8" fill="url(#s84)"/>
<circle cx="120.7" cy="69.5" r="2.6" fill="url(#h11s)"/>
<path d="M121.0 71.2L122.0 70.5" stroke="#004227" stroke-width="4.0"/>
<path d="M120.7 70.7L121.7 70.0" stroke="#006039" stroke-width="2.4"/>
<circle cx="129.3" cy="150.1" r="6.8" fill="url(#s85)"/>
<circle cx="131.2" cy="148.3" r="2.6" fill="url(#h10s)"/>
<path d="M132.3 150.9L133.9 151.3" stroke="#003131" stroke-width="4.0"/>
<path d="M132.4 150.3L134.0 150.7" stroke="#004747" stroke-width="2.4"/>
<path d="M123.5 147.9L120.6 146.8" stroke="#003131" stroke-width="3.9"/>
<path d="M123.7 147.3L120.8 146.2" stroke="#004747" stroke-width="2.4"/>
<circle cx="163.8" cy="138.7" r="6.8" fill="url(#s86)"/>
<circle cx="166.3" cy="136.7" r="2.6" fill="url(#h9s)"/>
<path d="M167.1 133.4L168.8 130.8" stroke="#00233a" stroke-width="3.9"/>
<path d="M167.6 133.8L169.3 131.1" stroke="#003254" stroke-width="2.4"/>
<path d="M161.6 141.1L160.5 142.3" stroke="#00233a" stroke-width="4.0"/>
<path d="M162.0 141.5L160.9 142.7" stroke="#003254" stroke-width="2.4"/>
<path d="M111.8 143.4L120.6 146.8" stroke="#003131" stroke-width="3.9"/>
<path d="M112.0 142.8L120.8 146.2" stroke="#004747" stroke-width="2.4"/>
<circle cx="111.8" cy="143.4" r="6.8" fill="url(#s87)"/>
<circle cx="113.4" cy="141.4" r="2.6" fill="url(#h10s)"/>
<path d="M108.9 142.2L107.4 141.6" stroke="#003131" stroke-width="4.0"/>
<path d="M109.2 141.7L107.6 141.0" stroke="#004747" stroke-width="2.4"/>
<path d="M173.8 122.8L168.8 130.8" stroke="#001641" stroke-width="3.9"/>
<path d="M174.3 123.2L169.3 131.1" stroke="#001f5e" stroke-width="2.4"/>
<circle cx="173.8" cy="122.8" r="6.8" fill="url(#s88)"/>
<circle cx="176.5" cy="120.5" r="2.6" fill="url(#h8s)"/>
<path d="M174.7 119.7L175.1 118.1" stroke="#001641" stroke-width="4.0"/>
<path d="M175.2 119.9L175.7 118.3" stroke="#001f5e" stroke-width="2.4"/>
<circle cx="155.1" cy="73.7" r="6.8" fill="url(#s89)"/>
<circle cx="157.5" cy="70.6" r="2.6" fill="url(#h11s)"/>
<path d="M151.7 72.0L150.0 71.2" stroke="#004227" stroke-width="4.0"/>
<path d="M152.0 71.5L150.2 70.6" stroke="#006039" stroke-width="2.4"/>
<path d="M159.7 77.9L162.0 80.0" stroke="#004227" stroke-width="4.0"/>
<path d="M160.1 77.5L162.4 79.6" stroke="#006039" stroke-width="2.4"/>
<path d="M169.0 86.4L162.0 80.0" stroke="#004227" stroke-width="4.0"/>
<path d="M169.4 86.0L162.4 79.6" stroke="#006039" stroke-width="2.4"/>
<circle cx="169.0" cy="86.4" r="6.8" fill="url(#s90)"/>
<circle cx="171.6" cy="83.5" r="2.6" fill="url(#h11s)"/>
<path d="M170.4 88.7L171.1 89.9" stroke="#004227" stroke-width="4.0"/>
<path d="M170.9 88.4L171.7 89.6" stroke="#006039" stroke-width="2.4"/>
<circle cx="93.6" cy="111.4" r="6.9" fill="url(#s91)"/>
<circle cx="94.9" cy="108.9" r="2.6" fill="url(#h11s)"/>
<path d="M93.3 115.1L93.1 117.1" stroke="#004227" stroke-width="4.1"/>
<path d="M93.9 115.2L93.7 117.1" stroke="#006039" stroke-width="2.4"/>
<path d="M94.6 105.2L95.2 102.1" stroke="#004227" stroke-width="4.0"/>
<path d="M95.2 105.3L95.8 102.2" stroke="#006039" stroke-width="2.4"/>
<path d="M96.7 92.6L95.2 102.1" stroke="#00541c" stroke-width="4.0"/>
<path d="M97.3 92.7L95.8 102.2" stroke="#007a29" stroke-width="2.4"/>
<circle cx="96.7" cy="92.6" r="6.9" fill="url(#s92)"/>
<circle cx="98.1" cy="89.8" r="2.6" fill="url(#h12s)"/>
<path d="M97.1 90.0L97.3 88.7" stroke="#00541c" stroke-width="4.1"/>
<path d="M97.7 90.1L97.9 88.8" stroke="#007a29" stroke-width="2.5"/>
<circle cx="138.6" cy="152.6" r="7.1" fill="url(#s93)"/>
<circle cx="140.8" cy="150.6" r="2.7" fill="url(#h13b)"/>
<path d="M144.8 150.4L147.8 149.3" stroke="#004227" stroke-width="4.1"/>
<path d="M144.6 149.8L147.6 148.7" stroke="#006039" stroke-width="2.5"/>
<path d="M135.3 153.4L133.6 153.8" stroke="#004227" stroke-width="4.2"/>
<path d="M135.2 152.8L133.5 153.2" stroke="#006039" stroke-width="2.5"/>
<path d="M157.0 146.0L147.8 149.3" stroke="#004227" stroke-width="4.1"/>
<path d="M156.8 145.4L147.6 148.7" stroke="#006039" stroke-width="2.5"/>
<circle cx="157.0" cy="146.0" r="7.1" fill="url(#s94)"/>
<circle cx="159.5" cy="144.0" r="2.7" fill="url(#h13b)"/>
<path d="M159.7 144.3L161.1 143.5" stroke="#004227" stroke-width="4.2"/>
<path d="M159.4 143.8L160.8 142.9" stroke="#006039" stroke-width="2.5"/>
<circle cx="125.2" cy="68.5" r="7.1" fill="url(#s95)"/>
<circle cx="127.1" cy="65.2" r="2.7" fill="url(#h14b)"/>
<path d="M131.6 68.5L134.8 68.5" stroke="#00541c" stroke-width="4.1"/>
<path d="M131.6 67.9L134.8 67.9" stroke="#007a29" stroke-width="2.5"/>
<path d="M121.2 69.3L119.1 69.8" stroke="#00541c" stroke-width="4.2"/>
<path d="M121.1 68.7L119.0 69.1" stroke="#007a29" stroke-width="2.5"/>
<circle cx="102.8" cy="139.7" r="7.1" fill="url(#s96)"/>
<circle cx="104.3" cy="137.6" r="2.7" fill="url(#h14b)"/>
<path d="M104.8 142.7L105.8 144.2" stroke="#00541c" stroke-width="4.2"/>
<path d="M105.3 142.3L106.3 143.8" stroke="#007a29" stroke-width="2.5"/>
<path d="M99.4 134.1L97.7 131.4" stroke="#00541c" stroke-width="4.1"/>
<path d="M99.9 133.8L98.2 131.0" stroke="#007a29" stroke-width="2.5"/>
<circle cx="176.5" cy="113.1" r="7.1" fill="url(#s97)"/>
<circle cx="179.3" cy="110.6" r="2.7" fill="url(#h15b)"/>
<path d="M175.4 106.6L174.9 103.4" stroke="#003131" stroke-width="4.1"/>
<path d="M176.1 106.5L175.6 103.3" stroke="#004747" stroke-width="2.5"/>
<path d="M176.1 116.3L176.0 117.9" stroke="#003131" stroke-width="4.2"/>
<path d="M176.8 116.3L176.6 118.0" stroke="#004747" stroke-width="2.5"/>
<path d="M144.6 68.6L134.8 68.5" stroke="#00541c" stroke-width="4.1"/>
<path d="M144.6 68.0L134.8 67.9" stroke="#007a29" stroke-width="2.5"/>
<circle cx="144.6" cy="68.6" r="7.1" fill="url(#s98)"/>
<circle cx="146.8" cy="65.3" r="2.7" fill="url(#h14b)"/>
<path d="M147.0 69.1L148.3 69.4" stroke="#00541c" stroke-width="4.2"/>
<path d="M147.2 68.5L148.5 68.8" stroke="#007a29" stroke-width="2.5"/>
<path d="M173.4 93.6L174.9 103.4" stroke="#00541c" stroke-width="4.1"/>
<path d="M174.0 93.5L175.6 103.3" stroke="#007a29" stroke-width="2.5"/>
<circle cx="173.4" cy="93.6" r="7.1" fill="url(#s99)"/>
<circle cx="176.2" cy="90.8" r="2.7" fill="url(#h14b)"/>
<path d="M171.7 90.3L170.8 88.6" stroke="#00541c" stroke-width="4.2"/>
<path d="M172.3 90.1L171.4 88.3" stroke="#007a29" stroke-width="2.5"/>
<path d="M92.6 122.9L97.7 131.4" stroke="#00541c" stroke-width="4.1"/>
<path d="M93.1 122.6L98.2 131.0" stroke="#007a29" stroke-width="2.5"/>
<circle cx="92.6" cy="122.9" r="7.1" fill="url(#s100)"/>
<circle cx="93.9" cy="120.5" r="2.7" fill="url(#h14b)"/>
<path d="M90.8 120.4L89.9 119.0" stroke="#00541c" stroke-width="4.2"/>
<path d="M91.4 120.0L90.5 118.7" stroke="#007a29" stroke-width="2.5"/>
<circle cx="98.0" cy="84.5" r="7.3" fill="url(#s101)"/>
<circle cx="99.4" cy="81.4" r="2.8" fill="url(#h16b)"/>
<path d="M95.2 87.7L93.8 89.3" stroke="#00680f" stroke-width="4.3"/>
<path d="M94.7 87.2L93.3 88.9" stroke="#009816" stroke-width="2.6"/>
<path d="M102.9 80.1L105.4 77.8" stroke="#00680f" stroke-width="4.3"/>
<path d="M102.5 79.6L104.9 77.4" stroke="#009816" stroke-width="2.6"/>
<path d="M112.9 71.1L105.4 77.8" stroke="#00680f" stroke-width="4.3"/>
<path d="M112.4 70.6L104.9 77.4" stroke="#009816" stroke-width="2.6"/>
<circle cx="112.9" cy="71.1" r="7.4" fill="url(#s102)"/>
<circle cx="114.6" cy="67.8" r="2.8" fill="url(#h16b)"/>
<path d="M114.9 69.5L115.9 68.7" stroke="#00680f" stroke-width="4.4"/>
<path d="M114.4 69.0L115.5 68.2" stroke="#009816" stroke-width="2.6"/>
<circle cx="128.4" cy="155.2" r="7.4" fill="url(#s103)"/>
<circle cx="130.4" cy="153.2" r="2.8" fill="url(#h16b)"/>
<path d="M131.6 155.9L133.3 156.3" stroke="#00680f" stroke-width="4.4"/>
<path d="M131.8 155.3L133.5 155.7" stroke="#009816" stroke-width="2.6"/>
<path d="M121.9 153.1L118.7 152.0" stroke="#00680f" stroke-width="4.3"/>
<path d="M122.1 152.4L118.9 151.4" stroke="#009816" stroke-width="2.6"/>
<path d="M108.9 148.8L118.7 152.0" stroke="#007e00" stroke-width="4.3"/>
<path d="M109.1 148.2L118.9 151.4" stroke="#00b800" stroke-width="2.6"/>
<circle cx="108.9" cy="148.8" r="7.4" fill="url(#s104)"/>
<circle cx="110.6" cy="146.7" r="2.8" fill="url(#h17b)"/>
<polygon points="106.3,145.7 104.6,145.1 103.2,149.3 105.0,149.8" fill="#007400"/>
<polygon points="106.2,145.8 104.5,145.3 103.4,148.6 105.2,149.2" fill="#00a600"/>
<polygon points="106.1,146.1 104.4,145.5 103.7,147.6 105.5,148.2" fill="#00b800"/>
<polygon points="106.0,146.6 104.2,146.0 104.0,146.9 105.7,147.4" fill="#73d850"/>
<circle cx="165.4" cy="140.8" r="7.4" fill="url(#s105)"/>
<circle cx="168.2" cy="138.6" r="2.8" fill="url(#h16b)"/>
<path d="M168.7 134.9L170.4 131.9" stroke="#00680f" stroke-width="4.3"/>
<path d="M169.3 135.2L171.0 132.2" stroke="#009816" stroke-width="2.6"/>
<path d="M163.1 143.5L161.9 145.0" stroke="#00680f" stroke-width="4.4"/>
<path d="M163.6 144.0L162.4 145.4" stroke="#009816" stroke-width="2.6"/>
<path d="M175.4 122.9L170.4 131.9" stroke="#00680f" stroke-width="4.3"/>
<path d="M176.0 123.2L171.0 132.2" stroke="#009816" stroke-width="2.6"/>
<circle cx="175.4" cy="122.9" r="7.4" fill="url(#s106)"/>
<circle cx="178.4" cy="120.4" r="2.8" fill="url(#h16b)"/>
<polygon points="178.4,119.9 178.8,118.2 174.5,117.2 174.1,119.0" fill="#00600e"/>
<polygon points="178.2,119.9 178.6,118.1 175.2,117.3 174.8,119.1" fill="#008914"/>
<polygon points="177.9,119.8 178.3,118.0 176.1,117.6 175.7,119.4" fill="#009816"/>
<polygon points="177.4,119.7 177.8,117.9 176.9,117.7 176.5,119.5" fill="#73c65c"/>
<circle cx="152.3" cy="70.3" r="7.5" fill="url(#s107)"/>
<circle cx="154.8" cy="66.9" r="2.8" fill="url(#h16b)"/>
<polygon points="149.3,66.6 147.3,65.7 145.6,69.8 147.6,70.6" fill="#00600e"/>
<polygon points="149.3,66.8 147.3,65.9 145.9,69.1 147.9,70.0" fill="#008914"/>
<polygon points="149.1,67.1 147.1,66.2 146.3,68.2 148.3,69.1" fill="#009816"/>
<polygon points="148.9,67.5 146.9,66.7 146.6,67.5 148.6,68.3" fill="#73c65c"/>
<path d="M157.6 74.7L160.2 76.8" stroke="#00680f" stroke-width="4.3"/>
<path d="M158.0 74.2L160.6 76.3" stroke="#009816" stroke-width="2.6"/>
<path d="M168.1 83.4L160.2 76.8" stroke="#00680f" stroke-width="4.3"/>
<path d="M168.6 82.9L160.6 76.3" stroke="#009816" stroke-width="2.6"/>
<circle cx="168.1" cy="83.4" r="7.5" fill="url(#s108)"/>
<circle cx="171.0" cy="80.2" r="2.8" fill="url(#h16b)"/>
<polygon points="171.6,84.5 172.5,85.8 168.9,88.3 168.0,87.0" fill="#00600e"/>
<polygon points="171.5,84.6 172.4,85.9 169.5,87.9 168.6,86.6" fill="#008914"/>
<polygon points="171.2,84.8 172.1,86.1 170.3,87.3 169.4,86.1" fill="#009816"/>
<polygon points="170.8,85.1 171.7,86.4 171.0,86.9 170.1,85.6" fill="#73c65c"/>
<circle cx="87.2" cy="115.0" r="7.5" fill="url(#s109)"/>
<circle cx="88.5" cy="112.3" r="2.9" fill="url(#h17b)"/>
<polygon points="89.1,119.2 89.0,121.3 84.5,121.0 84.7,118.9" fill="#007400"/>
<polygon points="88.9,119.2 88.8,121.3 85.3,121.0 85.4,118.9" fill="#00a600"/>
<polygon points="88.6,119.1 88.5,121.3 86.3,121.1 86.4,119.0" fill="#00b800"/>
<polygon points="88.1,119.1 88.0,121.2 87.1,121.2 87.2,119.1" fill="#73d850"/>
<path d="M87.9 108.1L88.3 104.7" stroke="#007e00" stroke-width="4.4"/>
<path d="M88.6 108.2L89.0 104.8" stroke="#00b800" stroke-width="2.6"/>
<polygon points="91.7,94.5 90.5,104.9 86.1,104.4 87.3,94.0" fill="#007400"/>
<polygon points="91.5,94.5 90.3,104.9 86.8,104.5 88.0,94.1" fill="#00a600"/>
<polygon points="91.2,94.5 90.0,104.9 87.8,104.6 89.0,94.2" fill="#00b800"/>
<polygon points="90.7,94.4 89.5,104.8 88.6,104.7 89.8,94.3" fill="#73d850"/>
<circle cx="89.5" cy="94.3" r="7.6" fill="url(#s110)"/>
<circle cx="90.9" cy="91.2" r="2.9" fill="url(#h17b)"/>
<polygon points="91.9,91.5 92.0,90.0 87.5,89.7 87.4,91.2" fill="#007400"/>
<polygon points="91.7,91.5 91.8,90.0 88.2,89.8 88.1,91.3" fill="#00a600"/>
<polygon points="91.4,91.5 91.5,89.9 89.2,89.8 89.2,91.3" fill="#00b800"/>
<polygon points="90.9,91.4 90.9,89.9 90.0,89.9 90.0,91.4" fill="#73d850"/>
<circle cx="138.6" cy="157.5" r="7.7" fill="url(#s111)"/>
<circle cx="140.9" cy="155.5" r="2.9" fill="url(#h18b)"/>
<polygon points="144.3,152.7 147.6,151.3 149.3,155.5 146.0,156.8" fill="#077700"/>
<polygon points="144.4,152.8 147.6,151.5 149.0,154.8 145.7,156.2" fill="#0baa00"/>
<polygon points="144.5,153.1 147.8,151.8 148.6,153.8 145.4,155.2" fill="#0cbc00"/>
<polygon points="144.7,153.6 148.0,152.3 148.3,153.1 145.0,154.5" fill="#79da50"/>
<polygon points="134.3,156.5 132.4,157.1 133.8,161.5 135.7,160.8" fill="#077700"/>
<polygon points="134.3,156.7 132.4,157.3 133.5,160.8 135.4,160.1" fill="#0baa00"/>
<polygon points="134.4,157.0 132.5,157.6 133.2,159.8 135.1,159.1" fill="#0cbc00"/>
<polygon points="134.6,157.5 132.7,158.1 133.0,159.0 134.9,158.4" fill="#79da50"/>
<polygon points="157.5,147.2 147.6,151.3 149.3,155.5 159.2,151.4" fill="#077700"/>
<polygon points="157.5,147.4 147.6,151.5 149.0,154.8 158.9,150.7" fill="#0baa00"/>
<polygon points="157.6,147.7 147.8,151.8 148.6,153.8 158.5,149.7" fill="#0cbc00"/>
<polygon points="157.9,148.2 148.0,152.3 148.3,153.1 158.2,149.0" fill="#79da50"/>
<circle cx="158.3" cy="149.3" r="7.8" fill="url(#s112)"/>
<circle cx="161.1" cy="147.1" r="2.9" fill="url(#h18b)"/>
<polygon points="159.9,145.5 161.4,144.4 164.0,148.3 162.5,149.3" fill="#077700"/>
<polygon points="160.0,145.6 161.5,144.6 163.5,147.7 162.0,148.6" fill="#0baa00"/>
<polygon points="160.2,145.9 161.7,144.9 163.0,146.8 161.5,147.8" fill="#0cbc00"/>
<polygon points="160.5,146.3 162.0,145.3 162.5,146.1 161.0,147.1" fill="#79da50"/>
<circle cx="119.1" cy="66.1" r="7.8" fill="url(#s113)"/>
<circle cx="121.1" cy="62.6" r="2.9" fill="url(#h17b)"/>
<polygon points="126.1,63.5 129.6,63.4 129.8,67.9 126.3,68.1" fill="#007400"/>
<polygon points="126.1,63.7 129.6,63.6 129.8,67.2 126.3,67.3" fill="#00a600"/>
<polygon points="126.1,64.0 129.6,63.9 129.7,66.1 126.2,66.3" fill="#00b800"/>
<polygon points="126.1,64.6 129.6,64.4 129.7,65.3 126.2,65.5" fill="#73d850"/>
<polygon points="114.2,65.0 111.9,65.6 113.0,70.0 115.3,69.5" fill="#007400"/>
<polygon points="114.2,65.2 112.0,65.7 112.8,69.3 115.1,68.7" fill="#00a600"/>
<polygon points="114.3,65.5 112.0,66.1 112.6,68.3 114.9,67.7" fill="#00b800"/>
<polygon points="114.4,66.0 112.2,66.6 112.4,67.5 114.7,66.9" fill="#73d850"/>
<circle cx="98.6" cy="145.5" r="7.8" fill="url(#s114)"/>
<circle cx="100.1" cy="143.2" r="3.0" fill="url(#h19b)"/>
<polygon points="102.7,147.3 103.8,148.9 100.1,151.6 98.9,149.9" fill="#0f7900"/>
<polygon points="102.5,147.4 103.7,149.0 100.7,151.1 99.5,149.5" fill="#16ae00"/>
<polygon points="102.3,147.6 103.4,149.2 101.5,150.5 100.4,148.9" fill="#18c100"/>
<polygon points="101.8,147.9 103.0,149.5 102.2,150.0 101.1,148.4" fill="#80dd50"/>
<polygon points="96.4,138.3 94.4,135.3 90.6,137.8 92.6,140.8" fill="#0f7900"/>
<polygon points="96.2,138.4 94.2,135.4 91.2,137.4 93.2,140.4" fill="#16ae00"/>
<polygon points="96.0,138.5 93.9,135.6 92.1,136.8 94.1,139.8" fill="#18c100"/>
<polygon points="95.5,138.8 93.5,135.9 92.7,136.4 94.8,139.4" fill="#80dd50"/>
<polygon points="140.2,62.8 129.6,63.4 129.8,67.9 140.5,67.4" fill="#007400"/>
<polygon points="140.3,63.0 129.6,63.6 129.8,67.2 140.4,66.7" fill="#00a600"/>
<polygon points="140.3,63.3 129.6,63.9 129.7,66.1 140.4,65.6" fill="#00b800"/>
<polygon points="140.3,63.9 129.6,64.4 129.7,65.3 140.3,64.8" fill="#73d850"/>
<circle cx="140.4" cy="65.1" r="7.8" fill="url(#s115)"/>
<circle cx="142.8" cy="61.5" r="3.0" fill="url(#h17b)"/>
<polygon points="143.4,63.2 144.8,63.4 144.1,68.0 142.7,67.8" fill="#007400"/>
<polygon points="143.3,63.4 144.8,63.6 144.2,67.3 142.8,67.1" fill="#00a600"/>
<polygon points="143.3,63.7 144.7,63.9 144.4,66.2 143.0,66.0" fill="#00b800"/>
<polygon points="143.2,64.3 144.6,64.5 144.5,65.4 143.1,65.2" fill="#73d850"/>
<circle cx="177.9" cy="112.2" r="7.8" fill="url(#s116)"/>
<circle cx="181.0" cy="109.3" r="3.0" fill="url(#h18b)"/>
<polygon points="178.6,104.6 177.9,101.1 173.4,102.0 174.1,105.5" fill="#077700"/>
<polygon points="178.4,104.6 177.7,101.1 174.1,101.9 174.9,105.4" fill="#0baa00"/>
<polygon points="178.1,104.7 177.4,101.2 175.1,101.7 175.9,105.2" fill="#0cbc00"/>
<polygon points="177.6,104.8 176.8,101.3 175.9,101.5 176.7,105.0" fill="#79da50"/>
<polygon points="180.0,115.7 179.9,117.5 175.3,117.3 175.4,115.5" fill="#077700"/>
<polygon points="179.8,115.7 179.7,117.5 176.0,117.3 176.1,115.5" fill="#0baa00"/>
<polygon points="179.5,115.7 179.4,117.5 177.1,117.4 177.2,115.6" fill="#0cbc00"/>
<polygon points="178.9,115.7 178.8,117.5 177.9,117.4 178.0,115.6" fill="#79da50"/>
<polygon points="175.6,90.5 177.9,101.1 173.4,102.0 171.2,91.4" fill="#007400"/>
<polygon points="175.4,90.5 177.7,101.1 174.1,101.9 171.9,91.2" fill="#00a600"/>
<polygon points="175.1,90.6 177.4,101.2 175.1,101.7 172.9,91.0" fill="#00b800"/>
<polygon points="174.6,90.7 176.8,101.3 175.9,101.5 173.7,90.9" fill="#73d850"/>
<circle cx="173.4" cy="90.9" r="7.8" fill="url(#s117)"/>
<circle cx="176.5" cy="87.7" r="3.0" fill="url(#h17b)"/>
<polygon points="173.4,86.2 172.3,84.3 168.3,86.7 169.3,88.5" fill="#007400"/>
<polygon points="173.2,86.3 172.2,84.4 168.9,86.3 170.0,88.1" fill="#00a600"/>
<polygon points="172.9,86.5 171.9,84.6 169.8,85.8 170.9,87.6" fill="#00b800"/>
<polygon points="172.4,86.7 171.4,84.9 170.6,85.3 171.6,87.2" fill="#73d850"/>
<polygon points="88.2,126.3 94.4,135.3 90.6,137.8 84.5,128.9" fill="#077700"/>
<polygon points="88.1,126.4 94.2,135.4 91.2,137.4 85.1,128.5" fill="#0baa00"/>
<polygon points="87.8,126.6 93.9,135.6 92.1,136.8 85.9,127.9" fill="#0cbc00"/>
<polygon points="87.4,126.9 93.5,135.9 92.7,136.4 86.6,127.4" fill="#79da50"/>
<circle cx="86.4" cy="127.6" r="7.8" fill="url(#s118)"/>
<circle cx="87.7" cy="125.0" r="3.0" fill="url(#h18b)"/>
<polygon points="86.0,123.5 84.9,122.1 81.2,125.0 82.4,126.4" fill="#077700"/>
<polygon points="85.8,123.6 84.7,122.2 81.8,124.5 83.0,125.9" fill="#0baa00"/>
<polygon points="85.6,123.8 84.5,122.4 82.7,123.9 83.8,125.2" fill="#0cbc00"/>
<polygon points="85.2,124.1 84.0,122.7 83.3,123.3 84.4,124.7" fill="#79da50"/>
<circle cx="90.0" cy="85.2" r="8.0" fill="url(#s119)"/>
<circle cx="91.4" cy="81.8" r="3.0" fill="url(#h18b)"/>
<polygon points="85.2,87.2 83.7,89.1 87.4,92.1 88.9,90.2" fill="#077700"/>
<polygon points="85.4,87.4 83.8,89.2 86.8,91.6 88.3,89.8" fill="#0baa00"/>
<polygon points="85.6,87.6 84.1,89.4 85.9,90.9 87.4,89.1" fill="#0cbc00"/>
<polygon points="86.1,87.9 84.5,89.8 85.3,90.4 86.8,88.5" fill="#79da50"/>
<polygon points="93.5,78.3 96.0,75.7 99.4,79.1 96.8,81.6" fill="#077700"/>
<polygon points="93.6,78.5 96.2,75.9 98.8,78.5 96.3,81.1" fill="#0baa00"/>
<polygon points="93.8,78.7 96.4,76.1 98.1,77.8 95.5,80.4" fill="#0cbc00"/>
<polygon points="94.2,79.1 96.8,76.5 97.5,77.2 94.9,79.8" fill="#79da50"/>
<polygon points="103.8,67.9 96.0,75.7 99.4,79.1 107.2,71.2" fill="#077700"/>
<polygon points="104.0,68.0 96.2,75.9 98.8,78.5 106.6,70.7" fill="#0baa00"/>
<polygon points="104.2,68.2 96.4,76.1 98.1,77.8 105.9,69.9" fill="#0cbc00"/>
<polygon points="104.6,68.6 96.8,76.5 97.5,77.2 105.3,69.3" fill="#79da50"/>
<circle cx="105.5" cy="69.5" r="8.1" fill="url(#s120)"/>
<circle cx="107.3" cy="65.8" r="3.1" fill="url(#h18b)"/>
<polygon points="105.9,65.9 106.9,64.8 110.3,68.3 109.2,69.3" fill="#077700"/>
<polygon points="106.0,66.0 107.0,65.0 109.7,67.8 108.7,68.8" fill="#0baa00"/>
<polygon points="106.2,66.3 107.3,65.2 108.9,67.0 107.9,68.0" fill="#0cbc00"/>
<polygon points="106.6,66.7 107.7,65.6 108.3,66.3 107.3,67.4" fill="#79da50"/>
<circle cx="127.3" cy="161.2" r="8.1" fill="url(#s121)"/>
<circle cx="129.5" cy="159.1" r="3.1" fill="url(#h20b)"/>
<polygon points="131.3,159.5 133.2,159.8 132.3,164.6 130.4,164.2" fill="#298200"/>
<polygon points="131.3,159.7 133.2,160.0 132.4,163.8 130.5,163.5" fill="#3aba00"/>
<polygon points="131.2,160.0 133.1,160.4 132.6,162.8 130.7,162.4" fill="#40ce00"/>
<polygon points="131.1,160.6 133.0,160.9 132.8,161.9 130.9,161.5" fill="#96e450"/>
<polygon points="120.6,156.9 117.0,155.9 115.8,160.5 119.4,161.5" fill="#298200"/>
<polygon points="120.6,157.1 117.0,156.1 116.0,159.7 119.6,160.7" fill="#3aba00"/>
<polygon points="120.5,157.4 116.9,156.4 116.3,158.7 119.9,159.7" fill="#40ce00"/>
<polygon points="120.3,157.9 116.7,157.0 116.5,157.9 120.1,158.9" fill="#96e450"/>
<polygon points="106.1,152.9 117.0,155.9 115.8,160.5 104.9,157.5" fill="#298200"/>
<polygon points="106.1,153.1 117.0,156.1 116.0,159.7 105.1,156.8" fill="#3aba00"/>
<polygon points="106.0,153.4 116.9,156.4 116.3,158.7 105.4,155.7" fill="#40ce00"/>
<polygon points="105.9,154.0 116.7,157.0 116.5,157.9 105.6,154.9" fill="#96e450"/>
<circle cx="105.5" cy="155.2" r="8.2" fill="url(#s122)"/>
<circle cx="107.3" cy="153.1" r="3.1" fill="url(#h20b)"/>
<polygon points="102.3,152.0 100.3,151.5 99.1,156.2 101.1,156.6" fill="#298200"/>
<polygon points="102.2,152.1 100.2,151.6 99.3,155.4 101.3,155.9" fill="#3aba00"/>
<polygon points="102.1,152.5 100.1,152.0 99.6,154.3 101.6,154.8" fill="#40ce00"/>
<polygon points="102.0,153.0 100.0,152.5 99.8,153.5 101.8,154.0" fill="#96e450"/>
<circle cx="167.3" cy="143.3" r="8.2" fill="url(#s123)"/>
<circle cx="170.3" cy="140.9" r="3.1" fill="url(#h21b)"/>
<polygon points="172.7,137.6 174.4,134.2 170.1,132.1 168.5,135.5" fill="#328500"/>
<polygon points="172.6,137.5 174.2,134.1 170.8,132.4 169.2,135.8" fill="#47be00"/>
<polygon points="172.3,137.3 173.9,134.0 171.8,132.9 170.1,136.3" fill="#4fd200"/>
<polygon points="171.8,137.1 173.4,133.7 172.6,133.3 170.9,136.7" fill="#9ee650"/>
<polygon points="166.8,147.9 165.6,149.5 161.7,146.6 163.0,145.0" fill="#328500"/>
<polygon points="166.7,147.8 165.4,149.4 162.3,147.1 163.6,145.5" fill="#47be00"/>
<polygon points="166.4,147.6 165.2,149.2 163.2,147.8 164.5,146.1" fill="#4fd200"/>
<polygon points="165.9,147.2 164.7,148.9 163.9,148.3 165.2,146.6" fill="#9ee650"/>
<polygon points="179.4,124.0 174.4,134.2 170.1,132.1 175.2,121.9" fill="#328500"/>
<polygon points="179.3,123.9 174.2,134.1 170.8,132.4 175.9,122.2" fill="#47be00"/>
<polygon points="179.0,123.8 173.9,134.0 171.8,132.9 176.8,122.7" fill="#4fd200"/>
<polygon points="178.5,123.5 173.4,133.7 172.6,133.3 177.6,123.1" fill="#9ee650"/>
<circle cx="177.3" cy="123.0" r="8.2" fill="url(#s124)"/>
<circle cx="180.6" cy="120.2" r="3.1" fill="url(#h21b)"/>
<polygon points="180.4,119.5 180.7,117.5 175.9,116.7 175.6,118.7" fill="#328500"/>
<polygon points="180.2,119.5 180.6,117.5 176.7,116.8 176.4,118.8" fill="#47be00"/>
<polygon points="179.8,119.5 180.2,117.5 177.8,117.0 177.5,119.0" fill="#4fd200"/>
<polygon points="179.3,119.4 179.6,117.4 178.7,117.2 178.3,119.2" fill="#9ee650"/>
<circle cx="148.8" cy="66.3" r="8.2" fill="url(#s125)"/>
<circle cx="151.5" cy="62.5" r="3.1" fill="url(#h18b)"/>
<polygon points="145.3,62.4 143.1,61.5 141.3,66.0 143.6,66.9" fill="#077700"/>
<polygon points="145.3,62.5 143.0,61.6 141.6,65.3 143.8,66.2" fill="#0baa00"/>
<polygon points="145.1,62.9 142.9,62.0 142.0,64.2 144.2,65.1" fill="#0cbc00"/>
<polygon points="144.9,63.4 142.6,62.5 142.3,63.4 144.6,64.3" fill="#79da50"/>
<polygon points="156.3,68.9 159.3,71.1 156.5,75.0 153.5,72.7" fill="#077700"/>
<polygon points="156.2,69.0 159.2,71.3 156.9,74.4 153.9,72.1" fill="#0baa00"/>
<polygon points="156.0,69.3 159.0,71.5 157.6,73.5 154.6,71.2" fill="#0cbc00"/>
<polygon points="155.6,69.8 158.7,72.0 158.1,72.8 155.1,70.5" fill="#79da50"/>
<polygon points="168.5,77.9 159.3,71.1 156.5,75.0 165.6,81.7" fill="#077700"/>
<polygon points="168.3,78.0 159.2,71.3 156.9,74.4 166.1,81.1" fill="#0baa00"/>
<polygon points="168.1,78.3 159.0,71.5 157.6,73.5 166.7,80.2" fill="#0cbc00"/>
<polygon points="167.8,78.8 158.7,72.0 158.1,72.8 167.2,79.5" fill="#79da50"/>
<circle cx="167.0" cy="79.8" r="8.3" fill="url(#s126)"/>
<circle cx="170.1" cy="76.2" r="3.1" fill="url(#h18b)"/>
<polygon points="170.9,80.8 172.0,82.1 168.1,85.2 167.1,83.8" fill="#077700"/>
<polygon points="170.8,80.9 171.8,82.2 168.7,84.7 167.7,83.3" fill="#0baa00"/>
<polygon points="170.5,81.1 171.6,82.4 169.6,84.0 168.6,82.6" fill="#0cbc00"/>
<polygon points="170.1,81.5 171.1,82.8 170.3,83.4 169.3,82.1" fill="#79da50"/>
<circle cx="79.6" cy="119.2" r="8.3" fill="url(#s127)"/>
<circle cx="80.9" cy="116.4" r="3.2" fill="url(#h22b)"/>
<polygon points="81.8,123.8 81.7,126.2 76.8,126.0 76.9,123.6" fill="#207f00"/>
<polygon points="81.6,123.8 81.5,126.2 77.6,126.0 77.7,123.7" fill="#2db600"/>
<polygon points="81.3,123.8 81.2,126.2 78.7,126.1 78.8,123.7" fill="#32c900"/>
<polygon points="80.7,123.8 80.6,126.1 79.6,126.1 79.7,123.8" fill="#8ee250"/>
<polygon points="82.4,111.8 82.6,108.0 77.8,107.7 77.6,111.5" fill="#207f00"/>
<polygon points="82.2,111.8 82.4,108.0 78.6,107.7 78.4,111.5" fill="#2db600"/>
<polygon points="81.9,111.7 82.1,107.9 79.7,107.8 79.5,111.6" fill="#32c900"/>
<polygon points="81.3,111.7 81.5,107.9 80.5,107.8 80.3,111.6" fill="#8ee250"/>
<polygon points="83.3,96.4 82.6,108.0 77.8,107.7 78.4,96.1" fill="#177c00"/>
<polygon points="83.1,96.4 82.4,108.0 78.6,107.7 79.2,96.2" fill="#21b200"/>
<polygon points="82.7,96.4 82.1,107.9 79.7,107.8 80.3,96.2" fill="#25c500"/>
<polygon points="82.2,96.4 81.5,107.9 80.5,107.8 81.2,96.3" fill="#87df50"/>
<circle cx="80.9" cy="96.3" r="8.4" fill="url(#s128)"/>
<circle cx="82.2" cy="93.0" r="3.2" fill="url(#h23b)"/>
<polygon points="83.2,92.9 83.1,91.2 78.1,91.4 78.2,93.1" fill="#177c00"/>
<polygon points="83.0,92.9 82.9,91.2 78.9,91.4 79.0,93.1" fill="#21b200"/>
<polygon points="82.6,92.9 82.6,91.2 80.1,91.3 80.1,93.1" fill="#25c500"/>
<polygon points="82.0,93.0 82.0,91.3 81.0,91.3 81.0,93.0" fill="#87df50"/>
<circle cx="138.5" cy="163.4" r="8.6" fill="url(#s129)"/>
<circle cx="141.1" cy="161.2" r="3.3" fill="url(#h24b)"/>
<polygon points="144.5,157.7 148.1,156.0 150.2,160.5 146.7,162.2" fill="#4f8c00"/>
<polygon points="144.6,157.9 148.2,156.2 149.9,159.8 146.3,161.5" fill="#70c800"/>
<polygon points="144.8,158.2 148.3,156.5 149.4,158.8 145.8,160.5" fill="#7dde00"/>
<polygon points="145.0,158.7 148.6,157.1 149.0,158.0 145.5,159.6" fill="#b7ed50"/>
<polygon points="133.5,162.6 131.4,163.4 133.3,168.2 135.4,167.3" fill="#4f8c00"/>
<polygon points="133.6,162.8 131.5,163.6 133.0,167.4 135.1,166.6" fill="#70c800"/>
<polygon points="133.7,163.1 131.6,163.9 132.6,166.3 134.7,165.5" fill="#7dde00"/>
<polygon points="134.0,163.7 131.9,164.5 132.2,165.4 134.3,164.6" fill="#b7ed50"/>
<circle cx="111.8" cy="63.4" r="8.6" fill="url(#s130)"/>
<circle cx="113.8" cy="59.4" r="3.3" fill="url(#h19b)"/>
<polygon points="119.3,60.2 123.2,59.8 123.7,64.7 119.8,65.1" fill="#0f7900"/>
<polygon points="119.3,60.4 123.2,60.0 123.6,63.9 119.7,64.3" fill="#16ae00"/>
<polygon points="119.4,60.7 123.3,60.3 123.5,62.8 119.6,63.2" fill="#18c100"/>
<polygon points="119.4,61.3 123.3,60.9 123.4,61.9 119.5,62.3" fill="#80dd50"/>
<polygon points="106.2,62.4 103.7,63.1 105.1,68.0 107.6,67.3" fill="#0f7900"/>
<polygon points="106.3,62.6 103.8,63.3 104.9,67.2 107.4,66.5" fill="#16ae00"/>
<polygon points="106.4,62.9 103.8,63.6 104.5,66.1 107.1,65.4" fill="#18c100"/>
<polygon points="106.6,63.5 104.0,64.2 104.3,65.2 106.8,64.5" fill="#80dd50"/>
<polygon points="158.8,150.9 148.1,156.0 150.2,160.5 160.9,155.4" fill="#588d00"/>
<polygon points="158.9,151.1 148.2,156.2 149.9,159.8 160.6,154.7" fill="#7eca00"/>
<polygon points="159.0,151.4 148.3,156.5 149.4,158.8 160.1,153.7" fill="#8ce000"/>
<polygon points="159.3,151.9 148.6,157.1 149.0,158.0 159.7,152.8" fill="#c0ee50"/>
<circle cx="159.9" cy="153.2" r="8.6" fill="url(#s131)"/>
<circle cx="163.0" cy="150.8" r="3.3" fill="url(#h25b)"/>
<polygon points="161.4,148.9 163.0,147.7 166.0,151.9 164.4,153.0" fill="#588d00"/>
<polygon points="161.5,149.0 163.1,147.9 165.5,151.2 163.9,152.3" fill="#7eca00"/>
<polygon points="161.7,149.3 163.3,148.2 164.8,150.2 163.2,151.4" fill="#8ce000"/>
<polygon points="162.1,149.8 163.7,148.7 164.3,149.5 162.7,150.7" fill="#c0ee50"/>
<circle cx="93.5" cy="152.3" r="8.6" fill="url(#s132)"/>
<circle cx="95.2" cy="150.0" r="3.3" fill="url(#h26b)"/>
<polygon points="98.1,154.2 99.4,156.0 95.3,159.0 94.0,157.3" fill="#458a00"/>
<polygon points="97.9,154.3 99.2,156.1 95.9,158.6 94.6,156.8" fill="#63c600"/>
<polygon points="97.6,154.6 99.0,156.3 96.9,157.9 95.6,156.1" fill="#6edb00"/>
<polygon points="97.1,154.9 98.5,156.7 97.6,157.3 96.3,155.5" fill="#afeb50"/>
<polygon points="90.7,144.5 88.3,141.3 84.3,144.4 86.7,147.5" fill="#458a00"/>
<polygon points="90.5,144.6 88.1,141.4 84.9,143.9 87.3,147.0" fill="#63c600"/>
<polygon points="90.2,144.8 87.8,141.6 85.8,143.2 88.2,146.3" fill="#6edb00"/>
<polygon points="89.8,145.2 87.3,142.0 86.5,142.6 89.0,145.8" fill="#afeb50"/>
<polygon points="134.9,58.5 123.2,59.8 123.7,64.7 135.5,63.5" fill="#0f7900"/>
<polygon points="135.0,58.7 123.2,60.0 123.6,63.9 135.4,62.7" fill="#16ae00"/>
<polygon points="135.0,59.1 123.3,60.3 123.5,62.8 135.3,61.6" fill="#18c100"/>
<polygon points="135.1,59.7 123.3,60.9 123.4,61.9 135.2,60.7" fill="#80dd50"/>
<circle cx="135.2" cy="61.0" r="8.7" fill="url(#s133)"/>
<circle cx="137.8" cy="56.9" r="3.3" fill="url(#h19b)"/>
<polygon points="138.3,58.6 139.8,58.7 139.5,63.9 138.0,63.8" fill="#0f7900"/>
<polygon points="138.3,58.8 139.8,58.9 139.6,63.0 138.0,62.9" fill="#16ae00"/>
<polygon points="138.3,59.2 139.8,59.3 139.7,61.9 138.1,61.8" fill="#18c100"/>
<polygon points="138.2,59.8 139.8,59.9 139.7,60.9 138.2,60.8" fill="#80dd50"/>
<circle cx="179.4" cy="110.9" r="8.7" fill="url(#s134)"/>
<circle cx="183.0" cy="107.8" r="3.3" fill="url(#h27b)"/>
<polygon points="179.8,102.5 178.8,98.7 173.9,100.0 174.9,103.8" fill="#628f00"/>
<polygon points="179.6,102.6 178.6,98.7 174.7,99.8 175.7,103.6" fill="#8ccc00"/>
<polygon points="179.3,102.7 178.2,98.8 175.8,99.5 176.8,103.3" fill="#9ce200"/>
<polygon points="178.7,102.8 177.7,99.0 176.7,99.2 177.7,103.1" fill="#c8ef50"/>
<polygon points="182.0,114.8 182.0,116.8 176.9,116.8 176.9,114.8" fill="#628f00"/>
<polygon points="181.8,114.8 181.8,116.8 177.7,116.8 177.7,114.8" fill="#8ccc00"/>
<polygon points="181.4,114.8 181.5,116.8 178.9,116.8 178.9,114.8" fill="#9ce200"/>
<polygon points="180.8,114.8 180.8,116.8 179.8,116.8 179.8,114.8" fill="#c8ef50"/>
<polygon points="80.9,131.7 88.3,141.3 84.3,144.4 76.9,134.8" fill="#3b8800"/>
<polygon points="80.8,131.9 88.1,141.4 84.9,143.9 77.6,134.3" fill="#55c200"/>
<polygon points="80.5,132.1 87.8,141.6 85.8,143.2 78.5,133.6" fill="#5ed700"/>
<polygon points="80.0,132.4 87.3,142.0 86.5,142.6 79.2,133.0" fill="#a6e950"/>
<circle cx="78.9" cy="133.3" r="8.7" fill="url(#s135)"/>
<circle cx="80.3" cy="130.5" r="3.3" fill="url(#h28b)"/>
<polygon points="78.1,128.7 76.6,127.2 72.9,130.8 74.4,132.3" fill="#3b8800"/>
<polygon points="77.9,128.8 76.5,127.3 73.5,130.2 75.0,131.7" fill="#55c200"/>
<polygon points="77.6,129.1 76.2,127.6 74.4,129.4 75.8,130.9" fill="#5ed700"/>
<polygon points="77.2,129.5 75.8,128.0 75.0,128.7 76.5,130.2" fill="#a6e950"/>
<polygon points="175.7,87.0 178.8,98.7 173.9,100.0 170.8,88.3" fill="#0f7900"/>
<polygon points="175.5,87.1 178.6,98.7 174.7,99.8 171.6,88.1" fill="#16ae00"/>
<polygon points="175.2,87.2 178.2,98.8 175.8,99.5 172.7,87.8" fill="#18c100"/>
<polygon points="174.6,87.3 177.7,99.0 176.7,99.2 173.6,87.6" fill="#80dd50"/>
<circle cx="173.3" cy="87.7" r="8.7" fill="url(#s136)"/>
<circle cx="176.7" cy="84.1" r="3.3" fill="url(#h19b)"/>
<polygon points="173.0,82.4 171.7,80.4 167.3,83.1 168.6,85.2" fill="#0f7900"/>
<polygon points="172.8,82.5 171.5,80.5 168.0,82.7 169.3,84.7" fill="#16ae00"/>
<polygon points="172.5,82.7 171.2,80.7 169.0,82.1 170.3,84.1" fill="#18c100"/>
<polygon points="172.0,83.1 170.7,81.0 169.8,81.6 171.1,83.6" fill="#80dd50"/>
<circle cx="80.4" cy="86.1" r="8.9" fill="url(#s137)"/>
<circle cx="81.8" cy="82.3" r="3.4" fill="url(#h20b)"/>
<polygon points="75.1,88.5 73.4,90.6 77.6,93.9 79.2,91.8" fill="#298200"/>
<polygon points="75.2,88.6 73.6,90.8 76.9,93.4 78.6,91.2" fill="#3aba00"/>
<polygon points="75.5,88.9 73.8,91.0 75.9,92.6 77.6,90.5" fill="#40ce00"/>
<polygon points="76.0,89.3 74.3,91.4 75.2,92.0 76.9,89.9" fill="#96e450"/>
<polygon points="83.8,78.3 86.5,75.2 90.4,78.7 87.7,81.7" fill="#298200"/>
<polygon points="83.9,78.4 86.6,75.4 89.7,78.1 87.1,81.2" fill="#3aba00"/>
<polygon points="84.2,78.6 86.9,75.6 88.9,77.3 86.2,80.4" fill="#40ce00"/>
<polygon points="84.7,79.1 87.4,76.0 88.2,76.7 85.5,79.8" fill="#96e450"/>
<polygon points="94.6,66.0 86.5,75.2 90.4,78.7 98.6,69.5" fill="#207f00"/>
<polygon points="94.8,66.2 86.6,75.4 89.7,78.1 97.9,68.9" fill="#2db600"/>
<polygon points="95.1,66.4 86.9,75.6 88.9,77.3 97.0,68.1" fill="#32c900"/>
<polygon points="95.5,66.8 87.4,76.0 88.2,76.7 96.3,67.5" fill="#8ee250"/>
<circle cx="96.6" cy="67.8" r="9.0" fill="url(#s138)"/>
<circle cx="98.4" cy="63.6" r="3.4" fill="url(#h22b)"/>
<polygon points="96.5,63.7 97.5,62.4 101.7,65.8 100.6,67.1" fill="#207f00"/>
<polygon points="96.7,63.8 97.7,62.5 101.0,65.3 100.0,66.5" fill="#2db600"/>
<polygon points="97.0,64.0 98.0,62.8 100.1,64.5 99.0,65.7" fill="#32c900"/>
<polygon points="97.4,64.5 98.5,63.2 99.3,63.9 98.3,65.1" fill="#8ee250"/>
<circle cx="125.9" cy="168.3" r="9.1" fill="url(#s139)"/>
<circle cx="128.4" cy="166.2" r="3.4" fill="url(#h29b)"/>
<polygon points="130.3,166.4 132.4,166.7 131.5,172.1 129.4,171.7" fill="#769200"/>
<polygon points="130.3,166.6 132.4,166.9 131.6,171.2 129.6,170.8" fill="#a9d000"/>
<polygon points="130.2,167.0 132.3,167.3 131.8,170.0 129.8,169.6" fill="#bce700"/>
<polygon points="130.1,167.6 132.2,167.9 132.0,169.0 129.9,168.7" fill="#daf250"/>
<polygon points="118.3,164.0 114.2,163.1 113.1,168.2 117.2,169.1" fill="#769200"/>
<polygon points="118.3,164.2 114.2,163.3 113.3,167.4 117.4,168.3" fill="#a9d000"/>
<polygon points="118.2,164.5 114.1,163.7 113.5,166.2 117.6,167.1" fill="#bce700"/>
<polygon points="118.0,165.2 114.0,164.3 113.7,165.3 117.8,166.2" fill="#daf250"/>
<polygon points="102.0,160.4 114.2,163.1 113.1,168.2 100.8,165.6" fill="#6c9000"/>
<polygon points="101.9,160.6 114.2,163.3 113.3,167.4 101.0,164.7" fill="#9bce00"/>
<polygon points="101.8,161.0 114.1,163.7 113.5,166.2 101.3,163.6" fill="#abe500"/>
<polygon points="101.7,161.6 114.0,164.3 113.7,165.3 101.5,162.6" fill="#d1f150"/>
<circle cx="101.4" cy="163.0" r="9.1" fill="url(#s140)"/>
<circle cx="103.3" cy="160.7" r="3.5" fill="url(#h30b)"/>
<polygon points="97.4,159.6 95.0,159.2 94.2,164.6 96.5,164.9" fill="#6c9000"/>
<polygon points="97.3,159.8 95.0,159.4 94.3,163.7 96.6,164.1" fill="#9bce00"/>
<polygon points="97.3,160.2 94.9,159.8 94.5,162.5 96.8,162.9" fill="#abe500"/>
<polygon points="97.2,160.8 94.8,160.5 94.6,161.5 97.0,161.9" fill="#d1f150"/>
<circle cx="169.4" cy="146.2" r="9.1" fill="url(#s141)"/>
<circle cx="172.9" cy="143.6" r="3.5" fill="url(#h31b)"/>
<polygon points="175.2,139.5 176.9,135.7 172.0,133.6 170.3,137.4" fill="#8b9500"/>
<polygon points="175.0,139.4 176.7,135.6 172.8,133.9 171.1,137.8" fill="#c7d400"/>
<polygon points="174.7,139.3 176.3,135.4 173.9,134.4 172.2,138.2" fill="#ddec00"/>
<polygon points="174.1,139.0 175.7,135.2 174.8,134.8 173.1,138.6" fill="#ecf450"/>
<polygon points="169.2,151.4 167.9,153.4 163.4,150.4 164.7,148.4" fill="#8b9500"/>
<polygon points="169.0,151.3 167.8,153.2 164.1,150.8 165.4,148.9" fill="#c7d400"/>
<polygon points="168.7,151.1 167.4,153.0 165.2,151.5 166.5,149.6" fill="#ddec00"/>
<polygon points="168.2,150.7 166.9,152.7 166.0,152.1 167.3,150.1" fill="#ecf450"/>
<polygon points="181.9,124.1 176.9,135.7 172.0,133.6 177.0,121.9" fill="#969600"/>
<polygon points="181.7,124.0 176.7,135.6 172.8,133.9 177.8,122.3" fill="#d7d700"/>
<polygon points="181.4,123.8 176.3,135.4 173.9,134.4 178.9,122.8" fill="#eeee00"/>
<polygon points="180.8,123.6 175.7,135.2 174.8,134.8 179.8,123.1" fill="#f6f650"/>
<circle cx="179.5" cy="123.0" r="9.2" fill="url(#s142)"/>
<circle cx="183.2" cy="119.9" r="3.5" fill="url(#h32b)"/>
<polygon points="182.7,119.0 183.0,116.8 177.6,116.1 177.3,118.3" fill="#969600"/>
<polygon points="182.5,119.0 182.8,116.8 178.5,116.2 178.2,118.5" fill="#d7d700"/>
<polygon points="182.1,119.0 182.4,116.7 179.7,116.4 179.4,118.6" fill="#eeee00"/>
<polygon points="181.5,118.9 181.8,116.6 180.7,116.5 180.4,118.7" fill="#f6f650"/>
<circle cx="144.5" cy="61.6" r="9.2" fill="url(#s143)"/>
<circle cx="147.4" cy="57.2" r="3.5" fill="url(#h23b)"/>
<polygon points="140.3,57.3 137.7,56.3 135.9,61.5 138.6,62.4" fill="#177c00"/>
<polygon points="140.3,57.5 137.7,56.5 136.2,60.7 138.8,61.6" fill="#21b200"/>
<polygon points="140.1,57.8 137.5,56.9 136.6,59.5 139.3,60.4" fill="#25c500"/>
<polygon points="139.9,58.4 137.3,57.5 137.0,58.6 139.6,59.5" fill="#87df50"/>
<polygon points="153.0,64.0 156.5,66.3 153.5,70.7 150.0,68.4" fill="#177c00"/>
<polygon points="152.8,64.2 156.3,66.5 154.0,70.0 150.5,67.7" fill="#21b200"/>
<polygon points="152.6,64.5 156.1,66.8 154.7,69.0 151.2,66.7" fill="#25c500"/>
<polygon points="152.3,65.0 155.8,67.3 155.2,68.2 151.7,65.9" fill="#87df50"/>
<polygon points="167.0,73.3 156.5,66.3 153.5,70.7 164.1,77.7" fill="#177c00"/>
<polygon points="166.9,73.4 156.3,66.5 154.0,70.0 164.5,77.0" fill="#21b200"/>
<polygon points="166.7,73.8 156.1,66.8 154.7,69.0 165.2,76.0" fill="#25c500"/>
<polygon points="166.3,74.3 155.8,67.3 155.2,68.2 165.7,75.2" fill="#87df50"/>
<circle cx="165.5" cy="75.5" r="9.2" fill="url(#s144)"/>
<circle cx="169.0" cy="71.4" r="3.5" fill="url(#h23b)"/>
<polygon points="169.9,76.3 171.2,77.6 167.1,81.3 165.9,79.9" fill="#177c00"/>
<polygon points="169.8,76.4 171.0,77.8 167.7,80.7 166.5,79.3" fill="#21b200"/>
<polygon points="169.5,76.7 170.7,78.0 168.7,79.9 167.5,78.5" fill="#25c500"/>
<polygon points="169.0,77.1 170.2,78.5 169.4,79.2 168.2,77.9" fill="#87df50"/>
<circle cx="70.3" cy="124.5" r="9.3" fill="url(#s145)"/>
<circle cx="71.6" cy="121.4" r="3.5" fill="url(#h24b)"/>
<polygon points="72.9,129.6 72.9,132.2 67.4,132.1 67.5,129.4" fill="#4f8c00"/>
<polygon points="72.7,129.6 72.6,132.2 68.2,132.1 68.3,129.5" fill="#70c800"/>
<polygon points="72.3,129.6 72.3,132.2 69.5,132.1 69.6,129.5" fill="#7dde00"/>
<polygon points="71.7,129.6 71.6,132.2 70.5,132.2 70.6,129.5" fill="#b7ed50"/>
<polygon points="73.0,116.0 73.0,111.7 67.6,111.7 67.6,116.0" fill="#4f8c00"/>
<polygon points="72.8,116.0 72.8,111.7 68.5,111.7 68.5,116.0" fill="#70c800"/>
<polygon points="72.4,116.0 72.5,111.7 69.7,111.7 69.8,116.0" fill="#7dde00"/>
<polygon points="71.8,116.0 71.8,111.7 70.7,111.7 70.7,116.0" fill="#b7ed50"/>
<polygon points="73.1,98.8 73.0,111.7 67.6,111.7 67.6,98.8" fill="#3b8800"/>
<polygon points="72.8,98.8 72.8,111.7 68.5,111.7 68.5,98.8" fill="#55c200"/>
<polygon points="72.5,98.8 72.5,111.7 69.7,111.7 69.7,98.8" fill="#5ed700"/>
<polygon points="71.8,98.8 71.8,111.7 70.7,111.7 70.7,98.8" fill="#a6e950"/>
<circle cx="70.3" cy="98.8" r="9.4" fill="url(#s146)"/>
<circle cx="71.6" cy="95.1" r="3.6" fill="url(#h28b)"/>
<polygon points="72.5,94.7 72.2,92.8 66.7,93.7 67.0,95.6" fill="#3b8800"/>
<polygon points="72.3,94.7 72.0,92.8 67.6,93.5 67.9,95.4" fill="#55c200"/>
<polygon points="71.9,94.8 71.6,92.9 68.8,93.3 69.1,95.2" fill="#5ed700"/>
<polygon points="71.2,94.9 70.9,93.0 69.8,93.1 70.1,95.1" fill="#a6e950"/>
<circle cx="102.8" cy="60.3" r="9.6" fill="url(#s147)"/>
<circle cx="104.8" cy="55.7" r="3.7" fill="url(#h20b)"/>
<polygon points="111.0,56.1 115.3,55.4 116.2,61.0 111.8,61.7" fill="#298200"/>
<polygon points="111.0,56.3 115.3,55.7 116.0,60.1 111.7,60.8" fill="#3aba00"/>
<polygon points="111.1,56.7 115.4,56.0 115.8,58.8 111.5,59.5" fill="#40ce00"/>
<polygon points="111.2,57.4 115.5,56.7 115.7,57.8 111.3,58.5" fill="#96e450"/>
<polygon points="96.4,59.3 93.5,60.1 95.2,65.6 98.1,64.7" fill="#298200"/>
<polygon points="96.5,59.5 93.6,60.4 95.0,64.7 97.9,63.8" fill="#3aba00"/>
<polygon points="96.6,59.9 93.7,60.7 94.6,63.5 97.5,62.6" fill="#40ce00"/>
<polygon points="96.8,60.5 93.9,61.4 94.3,62.5 97.2,61.6" fill="#96e450"/>
<circle cx="138.3" cy="170.5" r="9.6" fill="url(#s148)"/>
<circle cx="141.3" cy="168.3" r="3.7" fill="url(#h33b)"/>
<polygon points="144.8,163.8 148.7,161.7 151.3,166.7 147.4,168.8" fill="#999000"/>
<polygon points="144.9,164.0 148.8,161.9 150.9,165.9 147.0,168.0" fill="#dbcd00"/>
<polygon points="145.1,164.4 149.0,162.3 150.3,164.7 146.4,166.8" fill="#f3e400"/>
<polygon points="145.4,165.0 149.3,162.9 149.8,163.9 145.9,166.0" fill="#f8f050"/>
<polygon points="132.6,170.1 130.3,171.2 132.7,176.4 135.1,175.2" fill="#999000"/>
<polygon points="132.7,170.3 130.4,171.4 132.3,175.5 134.7,174.4" fill="#dbcd00"/>
<polygon points="132.9,170.6 130.5,171.7 131.8,174.3 134.1,173.2" fill="#f3e400"/>
<polygon points="133.2,171.2 130.8,172.4 131.3,173.4 133.7,172.3" fill="#f8f050"/>
<polygon points="160.4,155.4 148.7,161.7 151.3,166.7 163.0,160.3" fill="#9b8c00"/>
<polygon points="160.5,155.6 148.8,161.9 150.9,165.9 162.6,159.6" fill="#ddc800"/>
<polygon points="160.7,156.0 149.0,162.3 150.3,164.7 162.0,158.4" fill="#f5de00"/>
<polygon points="161.0,156.5 149.3,162.9 149.8,163.9 161.5,157.5" fill="#faed50"/>
<circle cx="161.7" cy="157.9" r="9.7" fill="url(#s149)"/>
<circle cx="165.2" cy="155.4" r="3.7" fill="url(#h34b)"/>
<polygon points="163.2,153.1 164.9,151.7 168.5,156.2 166.7,157.6" fill="#9b8c00"/>
<polygon points="163.3,153.2 165.0,151.9 167.9,155.5 166.2,156.8" fill="#ddc800"/>
<polygon points="163.6,153.6 165.3,152.2 167.1,154.5 165.4,155.8" fill="#f5de00"/>
<polygon points="164.0,154.1 165.7,152.7 166.4,153.6 164.7,155.0" fill="#faed50"/>
<circle cx="87.3" cy="160.7" r="9.7" fill="url(#s150)"/>
<circle cx="89.0" cy="158.3" r="3.7" fill="url(#h31b)"/>
<polygon points="92.5,162.8 94.0,164.8 89.4,168.2 87.9,166.2" fill="#8b9500"/>
<polygon points="92.3,162.9 93.8,164.9 90.1,167.7 88.6,165.7" fill="#c7d400"/>
<polygon points="92.0,163.2 93.5,165.1 91.2,166.9 89.7,164.9" fill="#ddec00"/>
<polygon points="91.4,163.6 92.9,165.6 92.0,166.3 90.5,164.3" fill="#ecf450"/>
<polygon points="83.7,152.1 80.8,148.7 76.5,152.4 79.4,155.8" fill="#8b9500"/>
<polygon points="83.5,152.3 80.6,148.9 77.2,151.8 80.1,155.2" fill="#c7d400"/>
<polygon points="83.2,152.5 80.3,149.1 78.2,150.9 81.1,154.3" fill="#ddec00"/>
<polygon points="82.7,153.0 79.8,149.6 78.9,150.3 81.8,153.7" fill="#ecf450"/>
<polygon points="128.3,53.3 115.3,55.4 116.2,61.0 129.2,58.9" fill="#298200"/>
<polygon points="128.4,53.6 115.3,55.7 116.0,60.1 129.1,58.0" fill="#3aba00"/>
<polygon points="128.4,54.0 115.4,56.0 115.8,58.8 128.9,56.7" fill="#40ce00"/>
<polygon points="128.5,54.6 115.5,56.7 115.7,57.8 128.7,55.7" fill="#96e450"/>
<circle cx="128.8" cy="56.1" r="9.7" fill="url(#s151)"/>
<circle cx="131.5" cy="51.4" r="3.7" fill="url(#h20b)"/>
<polygon points="131.9,53.1 133.6,53.0 133.8,58.8 132.1,58.9" fill="#298200"/>
<polygon points="131.9,53.3 133.6,53.3 133.8,57.9 132.1,58.0" fill="#3aba00"/>
<polygon points="131.9,53.8 133.6,53.7 133.7,56.6 132.0,56.6" fill="#40ce00"/>
<polygon points="131.9,54.4 133.6,54.4 133.7,55.5 132.0,55.6" fill="#96e450"/>
<circle cx="181.2" cy="109.4" r="9.7" fill="url(#s152)"/>
<circle cx="185.2" cy="105.9" r="3.7" fill="url(#h35b)"/>
<polygon points="181.1,100.0 179.8,95.7 174.4,97.5 175.8,101.7" fill="#9c7f00"/>
<polygon points="180.9,100.1 179.6,95.8 175.2,97.2 176.6,101.5" fill="#dfb500"/>
<polygon points="180.6,100.2 179.2,95.9 176.5,96.8 177.9,101.1" fill="#f8c900"/>
<polygon points="179.9,100.4 178.5,96.1 177.5,96.5 178.8,100.7" fill="#fbe150"/>
<polygon points="184.3,113.6 184.5,115.8 178.7,116.2 178.6,113.9" fill="#9c7f00"/>
<polygon points="184.1,113.6 184.3,115.9 179.6,116.1 179.5,113.9" fill="#dfb500"/>
<polygon points="183.7,113.6 183.9,115.9 181.0,116.1 180.8,113.8" fill="#f8c900"/>
<polygon points="183.0,113.7 183.2,115.9 182.0,116.0 181.9,113.7" fill="#fbe150"/>
<polygon points="72.0,138.4 80.8,148.7 76.5,152.4 67.7,142.1" fill="#769200"/>
<polygon points="71.8,138.6 80.6,148.9 77.2,151.8 68.4,141.5" fill="#a9d000"/>
<polygon points="71.5,138.8 80.3,149.1 78.2,150.9 69.4,140.7" fill="#bce700"/>
<polygon points="71.0,139.3 79.8,149.6 78.9,150.3 70.2,140.0" fill="#daf250"/>
<circle cx="69.9" cy="140.3" r="9.8" fill="url(#s153)"/>
<circle cx="71.1" cy="137.3" r="3.7" fill="url(#h29b)"/>
<polygon points="68.3,135.1 66.4,133.6 62.7,138.0 64.5,139.5" fill="#769200"/>
<polygon points="68.1,135.3 66.3,133.7 63.3,137.3 65.1,138.8" fill="#a9d000"/>
<polygon points="67.8,135.6 66.0,134.0 64.1,136.3 66.0,137.8" fill="#bce700"/>
<polygon points="67.4,136.1 65.6,134.6 64.8,135.5 66.7,137.0" fill="#daf250"/>
<polygon points="175.6,82.8 179.8,95.7 174.4,97.5 170.2,84.6" fill="#298200"/>
<polygon points="175.4,82.9 179.6,95.8 175.2,97.2 171.1,84.3" fill="#3aba00"/>
<polygon points="175.1,83.0 179.2,95.9 176.5,96.8 172.4,83.9" fill="#40ce00"/>
<polygon points="174.4,83.2 178.5,96.1 177.5,96.5 173.3,83.6" fill="#96e450"/>
<circle cx="172.9" cy="83.7" r="9.8" fill="url(#s154)"/>
<circle cx="176.8" cy="79.6" r="3.7" fill="url(#h20b)"/>
<polygon points="172.3,77.8 170.8,75.5 166.0,78.8 167.6,81.1" fill="#298200"/>
<polygon points="172.1,77.9 170.6,75.6 166.8,78.3 168.3,80.5" fill="#3aba00"/>
<polygon points="171.8,78.1 170.3,75.9 167.9,77.5 169.4,79.8" fill="#40ce00"/>
<polygon points="171.2,78.5 169.7,76.3 168.7,76.9 170.3,79.2" fill="#96e450"/>
<circle cx="68.5" cy="87.2" r="10.0" fill="url(#s155)"/>
<circle cx="69.7" cy="83.1" r="3.8" fill="url(#h25b)"/>
<polygon points="62.5,90.2 60.6,92.6 65.4,96.2 67.2,93.7" fill="#588d00"/>
<polygon points="62.7,90.3 60.8,92.8 64.6,95.7 66.5,93.2" fill="#7eca00"/>
<polygon points="63.0,90.6 61.1,93.0 63.5,94.8 65.4,92.3" fill="#8ce000"/>
<polygon points="63.6,91.0 61.7,93.4 62.7,94.2 64.6,91.7" fill="#c0ee50"/>
<polygon points="71.8,78.3 74.6,74.7 79.2,78.3 76.4,81.9" fill="#588d00"/>
<polygon points="72.0,78.4 74.8,74.8 78.5,77.8 75.7,81.3" fill="#7eca00"/>
<polygon points="72.3,78.7 75.1,75.1 77.4,76.9 74.6,80.5" fill="#8ce000"/>
<polygon points="72.9,79.1 75.7,75.5 76.6,76.3 73.8,79.8" fill="#c0ee50"/>
<polygon points="83.2,63.8 74.6,74.7 79.2,78.3 87.8,67.5" fill="#458a00"/>
<polygon points="83.4,64.0 74.8,74.8 78.5,77.8 87.1,66.9" fill="#63c600"/>
<polygon points="83.7,64.2 75.1,75.1 77.4,76.9 86.0,66.1" fill="#6edb00"/>
<polygon points="84.3,64.7 75.7,75.5 76.6,76.3 85.2,65.4" fill="#afeb50"/>
<circle cx="85.5" cy="65.6" r="10.2" fill="url(#s156)"/>
<circle cx="87.3" cy="60.9" r="3.9" fill="url(#h26b)"/>
<polygon points="89.9,64.3 90.9,62.8 85.8,59.5 84.8,61.1" fill="#458a00"/>
<polygon points="89.7,64.2 90.7,62.7 86.6,60.1 85.6,61.6" fill="#63c600"/>
<polygon points="89.4,64.0 90.4,62.4 87.8,60.8 86.8,62.4" fill="#6edb00"/>
<polygon points="88.7,63.6 89.7,62.1 88.7,61.4 87.7,62.9" fill="#afeb50"/>
<circle cx="124.2" cy="177.2" r="10.2" fill="url(#s157)"/>
<circle cx="127.0" cy="175.0" r="3.9" fill="url(#h36b)"/>
<polygon points="129.1,174.9 131.4,175.3 130.4,181.3 128.1,180.9" fill="#9c7a00"/>
<polygon points="129.1,175.2 131.4,175.5 130.6,180.4 128.3,180.0" fill="#dfaf00"/>
<polygon points="129.0,175.6 131.3,175.9 130.8,179.0 128.5,178.6" fill="#f8c200"/>
<polygon points="128.9,176.3 131.2,176.7 131.0,177.9 128.7,177.5" fill="#fbdd50"/>
<polygon points="115.4,172.7 110.7,172.0 109.8,177.8 114.4,178.6" fill="#9c7a00"/>
<polygon points="115.3,173.0 110.7,172.2 109.9,176.9 114.6,177.7" fill="#dfaf00"/>
<polygon points="115.3,173.4 110.6,172.6 110.2,175.6 114.8,176.3" fill="#f8c200"/>
<polygon points="115.2,174.1 110.5,173.3 110.3,174.5 115.0,175.3" fill="#fbdd50"/>
<polygon points="96.7,169.7 110.7,172.0 109.8,177.8 95.8,175.5" fill="#9c8400"/>
<polygon points="96.7,169.9 110.7,172.2 109.9,176.9 95.9,174.6" fill="#dfbc00"/>
<polygon points="96.6,170.3 110.6,172.6 110.2,175.6 96.2,173.2" fill="#f8d100"/>
<polygon points="96.5,171.0 110.5,173.3 110.3,174.5 96.3,172.2" fill="#fbe650"/>
<circle cx="96.3" cy="172.6" r="10.3" fill="url(#s158)"/>
<circle cx="98.3" cy="170.3" r="3.9" fill="url(#h37b)"/>
<polygon points="91.2,169.2 88.4,168.9 88.0,175.1 90.8,175.2" fill="#9c8400"/>
<polygon points="91.2,169.4 88.4,169.2 88.0,174.1 90.8,174.3" fill="#dfbc00"/>
<polygon points="91.2,169.8 88.4,169.6 88.2,172.7 90.9,172.9" fill="#f8d100"/>
<polygon points="91.1,170.6 88.3,170.3 88.2,171.6 91.0,171.8" fill="#fbe650"/>
<circle cx="172.0" cy="149.8" r="10.3" fill="url(#s159)"/>
<circle cx="176.0" cy="146.9" r="3.9" fill="url(#h38b)"/>
<polygon points="178.2,141.9 179.8,137.5 174.2,135.4 172.5,139.8" fill="#9d6700"/>
<polygon points="177.9,141.8 179.6,137.4 175.1,135.7 173.4,140.1" fill="#e09300"/>
<polygon points="177.5,141.7 179.2,137.2 176.4,136.2 174.7,140.6" fill="#f9a300"/>
<polygon points="176.9,141.4 178.5,137.0 177.4,136.6 175.7,141.0" fill="#fbcc50"/>
<polygon points="172.1,155.7 170.8,158.1 165.4,155.0 166.8,152.7" fill="#9d6700"/>
<polygon points="171.9,155.6 170.6,158.0 166.3,155.5 167.6,153.2" fill="#e09300"/>
<polygon points="171.5,155.4 170.2,157.7 167.5,156.2 168.9,153.9" fill="#f9a300"/>
<polygon points="170.9,155.0 169.5,157.4 168.5,156.8 169.8,154.4" fill="#fbcc50"/>
<polygon points="184.8,124.1 179.8,137.5 174.2,135.4 179.2,122.0" fill="#9d6200"/>
<polygon points="184.6,124.0 179.6,137.4 175.1,135.7 180.1,122.3" fill="#e08c00"/>
<polygon points="184.2,123.8 179.2,137.2 176.4,136.2 181.4,122.8" fill="#f99b00"/>
<polygon points="183.6,123.6 178.5,137.0 177.4,136.6 182.4,123.2" fill="#fcc850"/>
<circle cx="182.0" cy="123.0" r="10.4" fill="url(#s160)"/>
<circle cx="186.3" cy="119.5" r="3.9" fill="url(#h39b)"/>
<polygon points="185.5,118.4 185.8,115.8 179.5,115.3 179.4,117.9" fill="#9d6200"/>
<polygon points="185.3,118.4 185.5,115.8 180.5,115.4 180.4,118.0" fill="#e08c00"/>
<polygon points="184.8,118.3 185.1,115.7 182.0,115.5 181.8,118.1" fill="#f99b00"/>
<polygon points="184.1,118.3 184.3,115.7 183.1,115.6 182.9,118.2" fill="#fcc850"/>
<circle cx="138.9" cy="55.7" r="10.4" fill="url(#s161)"/>
<circle cx="142.1" cy="50.7" r="3.9" fill="url(#h28b)"/>
<polygon points="134.0,51.0 130.9,50.0 129.1,55.9 132.2,56.9" fill="#3b8800"/>
<polygon points="133.9,51.2 130.9,50.2 129.4,55.0 132.5,55.9" fill="#55c200"/>
<polygon points="133.8,51.6 130.7,50.7 129.8,53.6 132.9,54.6" fill="#5ed700"/>
<polygon points="133.6,52.3 130.5,51.4 130.2,52.6 133.2,53.5" fill="#a6e950"/>
<polygon points="148.7,57.9 152.7,60.3 149.7,65.5 145.6,63.1" fill="#3b8800"/>
<polygon points="148.5,58.1 152.6,60.5 150.2,64.7 146.1,62.3" fill="#55c200"/>
<polygon points="148.3,58.5 152.4,60.9 150.9,63.5 146.8,61.1" fill="#5ed700"/>
<polygon points="148.0,59.1 152.0,61.5 151.4,62.6 147.3,60.2" fill="#a6e950"/>
<polygon points="165.1,67.6 152.7,60.3 149.7,65.5 162.0,72.8" fill="#3b8800"/>
<polygon points="164.9,67.8 152.6,60.5 150.2,64.7 162.5,71.9" fill="#55c200"/>
<polygon points="164.7,68.1 152.4,60.9 150.9,63.5 163.2,70.7" fill="#5ed700"/>
<polygon points="164.4,68.8 152.0,61.5 151.4,62.6 163.8,69.8" fill="#a6e950"/>
<circle cx="163.5" cy="70.2" r="10.4" fill="url(#s162)"/>
<circle cx="167.4" cy="65.4" r="4.0" fill="url(#h28b)"/>
<polygon points="168.5,70.7 170.0,72.1 165.6,76.6 164.2,75.1" fill="#3b8800"/>
<polygon points="168.3,70.8 169.8,72.2 166.3,75.8 164.9,74.4" fill="#55c200"/>
<polygon points="168.0,71.1 169.5,72.5 167.3,74.8 165.9,73.4" fill="#5ed700"/>
<polygon points="167.5,71.7 169.0,73.1 168.1,74.0 166.6,72.6" fill="#a6e950"/>
<circle cx="58.9" cy="131.0" r="10.5" fill="url(#s163)"/>
<circle cx="60.0" cy="127.7" r="4.0" fill="url(#h32b)"/>
<polygon points="61.8,136.8 61.8,139.9 55.5,139.7 55.6,136.7" fill="#969600"/>
<polygon points="61.6,136.8 61.5,139.9 56.5,139.7 56.6,136.7" fill="#d7d700"/>
<polygon points="61.1,136.8 61.1,139.8 58.0,139.8 58.1,136.7" fill="#eeee00"/>
<polygon points="60.4,136.8 60.3,139.8 59.1,139.8 59.2,136.8" fill="#f6f650"/>
<polygon points="61.4,121.3 61.1,116.5 55.0,116.8 55.3,121.6" fill="#969600"/>
<polygon points="61.1,121.3 60.9,116.5 56.0,116.7 56.3,121.5" fill="#d7d700"/>
<polygon points="60.7,121.3 60.4,116.5 57.4,116.7 57.7,121.5" fill="#eeee00"/>
<polygon points="60.0,121.3 59.7,116.5 58.5,116.6 58.8,121.4" fill="#f6f650"/>
<polygon points="60.3,101.9 61.1,116.5 55.0,116.8 54.2,102.2" fill="#819300"/>
<polygon points="60.1,101.9 60.9,116.5 56.0,116.7 55.1,102.2" fill="#b8d200"/>
<polygon points="59.6,101.9 60.4,116.5 57.4,116.7 56.6,102.1" fill="#cce900"/>
<polygon points="58.9,101.9 59.7,116.5 58.5,116.6 57.7,102.0" fill="#e3f350"/>
<circle cx="57.2" cy="102.0" r="10.6" fill="url(#s164)"/>
<circle cx="58.3" cy="98.0" r="4.0" fill="url(#h40b)"/>
<polygon points="59.0,97.0 58.4,94.8 52.3,96.6 53.0,98.8" fill="#819300"/>
<polygon points="58.8,97.1 58.2,94.9 53.3,96.3 54.0,98.5" fill="#b8d200"/>
<polygon points="58.4,97.2 57.8,95.0 54.7,95.9 55.3,98.1" fill="#cce900"/>
<polygon points="57.6,97.4 57.0,95.2 55.8,95.6 56.4,97.8" fill="#e3f350"/>
<circle cx="91.4" cy="56.4" r="10.9" fill="url(#s165)"/>
<circle cx="93.4" cy="51.1" r="4.2" fill="url(#h25b)"/>
<polygon points="100.4,51.1 105.2,50.1 106.6,56.3 101.7,57.4" fill="#588d00"/>
<polygon points="100.4,51.4 105.3,50.3 106.3,55.3 101.5,56.4" fill="#7eca00"/>
<polygon points="100.5,51.8 105.4,50.8 106.0,53.9 101.2,54.9" fill="#8ce000"/>
<polygon points="100.7,52.6 105.5,51.5 105.8,52.8 101.0,53.8" fill="#c0ee50"/>
<polygon points="84.0,55.4 80.6,56.5 82.7,62.7 86.1,61.6" fill="#588d00"/>
<polygon points="84.1,55.7 80.7,56.8 82.4,61.7 85.7,60.6" fill="#7eca00"/>
<polygon points="84.2,56.1 80.9,57.2 81.9,60.3 85.2,59.2" fill="#8ce000"/>
<polygon points="84.5,56.8 81.1,57.9 81.5,59.2 84.9,58.1" fill="#c0ee50"/>
<circle cx="138.1" cy="179.5" r="11.0" fill="url(#s166)"/>
<circle cx="141.4" cy="177.1" r="4.2" fill="url(#h41b)"/>
<polygon points="145.0,171.5 149.3,168.9 152.6,174.4 148.3,177.0" fill="#9d5800"/>
<polygon points="145.2,171.7 149.5,169.1 152.1,173.5 147.8,176.1" fill="#e17e00"/>
<polygon points="145.4,172.1 149.7,169.5 151.3,172.2 147.1,174.8" fill="#f98c00"/>
<polygon points="145.8,172.8 150.1,170.2 150.7,171.2 146.5,173.9" fill="#fcc050"/>
<polygon points="131.4,179.5 128.7,181.0 132.0,186.7 134.6,185.2" fill="#9d5800"/>
<polygon points="131.5,179.7 128.8,181.2 131.4,185.8 134.1,184.2" fill="#e17e00"/>
<polygon points="131.8,180.1 129.1,181.6 130.7,184.5 133.4,182.9" fill="#f98c00"/>
<polygon points="132.1,180.8 129.5,182.3 130.1,183.4 132.8,181.9" fill="#fcc050"/>
<polygon points="162.3,161.0 149.3,168.9 152.6,174.4 165.6,166.5" fill="#9d4f00"/>
<polygon points="162.4,161.3 149.5,169.1 152.1,173.5 165.0,165.6" fill="#e17000"/>
<polygon points="162.6,161.6 149.7,169.5 151.3,172.2 164.3,164.4" fill="#f97d00"/>
<polygon points="163.0,162.3 150.1,170.2 150.7,171.2 163.7,163.4" fill="#fcb750"/>
<circle cx="163.9" cy="163.8" r="11.0" fill="url(#s167)"/>
<circle cx="168.0" cy="161.1" r="4.2" fill="url(#h42b)"/>
<polygon points="169.6,163.3 171.5,161.8 167.2,156.7 165.4,158.3" fill="#9d4f00"/>
<polygon points="169.4,163.1 171.3,161.6 167.9,157.5 166.1,159.1" fill="#e17000"/>
<polygon points="169.1,162.7 171.0,161.2 168.9,158.7 167.0,160.2" fill="#f97d00"/>
<polygon points="168.6,162.1 170.5,160.6 169.7,159.6 167.8,161.1" fill="#fcb750"/>
<circle cx="79.6" cy="171.3" r="11.0" fill="url(#s168)"/>
<circle cx="81.3" cy="168.8" r="4.2" fill="url(#h43b)"/>
<polygon points="85.4,173.7 87.1,175.9 81.8,179.9 80.2,177.6" fill="#9d7100"/>
<polygon points="85.2,173.8 86.9,176.1 82.7,179.2 81.0,176.9" fill="#e0a100"/>
<polygon points="84.8,174.1 86.5,176.3 83.9,178.3 82.2,176.1" fill="#f8b200"/>
<polygon points="84.2,174.6 85.9,176.8 84.8,177.6 83.1,175.3" fill="#fbd550"/>
<polygon points="74.9,161.8 71.4,158.1 66.7,162.5 70.2,166.2" fill="#9d7100"/>
<polygon points="74.7,161.9 71.2,158.2 67.5,161.8 71.0,165.5" fill="#e0a100"/>
<polygon points="74.4,162.2 70.9,158.5 68.5,160.8 72.0,164.4" fill="#f8b200"/>
<polygon points="73.8,162.8 70.3,159.1 69.4,160.0 72.9,163.6" fill="#fbd550"/>
<polygon points="119.9,46.9 105.2,50.1 106.6,56.3 121.2,53.2" fill="#588d00"/>
<polygon points="119.9,47.1 105.3,50.3 106.3,55.3 121.0,52.2" fill="#7eca00"/>
<polygon points="120.0,47.6 105.4,50.8 106.0,53.9 120.7,50.7" fill="#8ce000"/>
<polygon points="120.2,48.3 105.5,51.5 105.8,52.8 120.4,49.6" fill="#c0ee50"/>
<circle cx="120.5" cy="50.0" r="11.1" fill="url(#s169)"/>
<circle cx="123.4" cy="44.5" r="4.2" fill="url(#h25b)"/>
<polygon points="123.6,46.2 125.4,45.9 126.4,52.5 124.6,52.7" fill="#588d00"/>
<polygon points="123.6,46.5 125.4,46.2 126.3,51.4 124.4,51.7" fill="#7eca00"/>
<polygon points="123.7,47.0 125.5,46.6 126.0,49.9 124.2,50.2" fill="#8ce000"/>
<polygon points="123.8,47.7 125.6,47.4 125.8,48.7 124.0,49.0" fill="#c0ee50"/>
<polygon points="60.8,146.9 71.4,158.1 66.7,162.5 56.1,151.3" fill="#9c7f00"/>
<polygon points="60.6,147.1 71.2,158.2 67.5,161.8 56.8,150.6" fill="#dfb500"/>
<polygon points="60.2,147.4 70.9,158.5 68.5,160.8 57.9,149.6" fill="#f8c900"/>
<polygon points="59.7,147.9 70.3,159.1 69.4,160.0 58.8,148.8" fill="#fbe150"/>
<circle cx="58.4" cy="149.1" r="11.1" fill="url(#s170)"/>
<circle cx="59.6" cy="146.0" r="4.2" fill="url(#h35b)"/>
<polygon points="55.8,143.3 53.5,141.7 49.7,147.3 52.1,148.8" fill="#9c7f00"/>
<polygon points="55.7,143.6 53.3,141.9 50.3,146.4 52.7,147.9" fill="#dfb500"/>
<polygon points="55.4,143.9 53.0,142.3 51.2,145.1 53.5,146.7" fill="#f8c900"/>
<polygon points="55.0,144.6 52.6,143.0 51.8,144.1 54.2,145.7" fill="#fbe150"/>
<circle cx="183.3" cy="107.5" r="11.1" fill="url(#s171)"/>
<circle cx="188.0" cy="103.4" r="4.2" fill="url(#h44b)"/>
<polygon points="182.7,96.8 180.9,92.0 174.8,94.3 176.7,99.1" fill="#9e4300"/>
<polygon points="182.4,96.9 180.6,92.1 175.8,93.9 177.6,98.7" fill="#e25f00"/>
<polygon points="182.0,97.0 180.2,92.3 177.2,93.4 179.0,98.2" fill="#fa6a00"/>
<polygon points="181.3,97.3 179.5,92.5 178.3,93.0 180.1,97.8" fill="#fcad50"/>
<polygon points="187.2,112.0 187.5,114.6 180.9,115.4 180.6,112.8" fill="#9e4300"/>
<polygon points="186.9,112.1 187.3,114.6 182.0,115.3 181.7,112.7" fill="#e25f00"/>
<polygon points="186.5,112.1 186.8,114.7 183.5,115.1 183.2,112.5" fill="#fa6a00"/>
<polygon points="185.7,112.2 186.0,114.8 184.7,114.9 184.4,112.4" fill="#fcad50"/>
<polygon points="175.4,77.6 180.9,92.0 174.8,94.3 169.4,79.9" fill="#588d00"/>
<polygon points="175.2,77.7 180.6,92.1 175.8,93.9 170.3,79.5" fill="#7eca00"/>
<polygon points="174.8,77.8 180.2,92.3 177.2,93.4 171.7,79.0" fill="#8ce000"/>
<polygon points="174.0,78.1 179.5,92.5 178.3,93.0 172.8,78.6" fill="#c0ee50"/>
<circle cx="172.4" cy="78.7" r="11.1" fill="url(#s172)"/>
<circle cx="176.8" cy="73.9" r="4.2" fill="url(#h25b)"/>
<polygon points="171.4,71.9 169.5,69.3 164.1,73.4 166.1,75.9" fill="#588d00"/>
<polygon points="171.2,72.0 169.3,69.5 165.0,72.7 166.9,75.2" fill="#7eca00"/>
<polygon points="170.8,72.3 168.9,69.8 166.2,71.8 168.2,74.3" fill="#8ce000"/>
<polygon points="170.2,72.8 168.3,70.2 167.2,71.1 169.1,73.6" fill="#c0ee50"/>
<circle cx="53.4" cy="88.8" r="11.5" fill="url(#s173)"/>
<circle cx="54.4" cy="84.1" r="4.4" fill="url(#h45b)"/>
<polygon points="46.5,92.3 44.3,95.2 49.8,99.3 51.9,96.4" fill="#989300"/>
<polygon points="46.7,92.5 44.5,95.4 48.9,98.7 51.1,95.7" fill="#d9d200"/>
<polygon points="47.1,92.8 44.9,95.7 47.7,97.7 49.8,94.8" fill="#f0e900"/>
<polygon points="47.8,93.3 45.6,96.2 46.7,97.0 48.8,94.1" fill="#f7f350"/>
<polygon points="56.6,78.4 59.5,74.1 65.0,78.0 62.0,82.2" fill="#989300"/>
<polygon points="56.8,78.6 59.7,74.3 64.1,77.4 61.2,81.6" fill="#d9d200"/>
<polygon points="57.2,78.8 60.1,74.6 62.9,76.5 59.9,80.7" fill="#f0e900"/>
<polygon points="57.8,79.3 60.8,75.0 61.9,75.8 58.9,80.1" fill="#f7f350"/>
<polygon points="68.6,61.2 59.5,74.1 65.0,78.0 74.1,65.0" fill="#819300"/>
<polygon points="68.8,61.3 59.7,74.3 64.1,77.4 73.2,64.4" fill="#b8d200"/>
<polygon points="69.2,61.6 60.1,74.6 62.9,76.5 72.0,63.5" fill="#cce900"/>
<polygon points="69.8,62.0 60.8,75.0 61.9,75.8 71.0,62.8" fill="#e3f350"/>
<polygon points="70.3,59.9 80.6,56.5 82.7,62.7 72.4,66.3" fill="#819300"/>
<polygon points="70.4,60.1 80.7,56.8 82.4,61.7 72.1,65.3" fill="#b8d200"/>
<polygon points="70.5,60.6 80.9,57.2 81.9,60.3 71.6,63.8" fill="#cce900"/>
<polygon points="70.8,61.4 81.1,57.9 81.5,59.2 71.2,62.6" fill="#e3f350"/>
<circle cx="71.3" cy="63.1" r="11.6" fill="url(#s174)"/>
<circle cx="72.9" cy="57.6" r="4.4" fill="url(#h40b)"/>
<polygon points="76.1,60.8 77.0,58.9 70.6,56.1 69.8,58.0" fill="#819300"/>
<polygon points="75.9,60.7 76.8,58.8 71.6,56.5 70.8,58.5" fill="#b8d200"/>
<polygon points="75.4,60.5 76.3,58.6 73.1,57.2 72.2,59.1" fill="#cce900"/>
<polygon points="74.7,60.2 75.5,58.3 74.2,57.7 73.4,59.6" fill="#e3f350"/>
<circle cx="122.0" cy="188.5" r="11.8" fill="url(#s175)"/>
<circle cx="125.1" cy="186.3" r="4.5" fill="url(#h46b)"/>
<polygon points="127.5,185.9 130.1,186.3 129.0,193.3 126.4,192.8" fill="#9e4500"/>
<polygon points="127.5,186.2 130.1,186.5 129.2,192.1 126.6,191.7" fill="#e26300"/>
<polygon points="127.4,186.6 130.0,187.0 129.4,190.5 126.8,190.1" fill="#fa6d00"/>
<polygon points="127.2,187.5 129.9,187.9 129.6,189.3 127.0,188.9" fill="#fcaf50"/>
<polygon points="111.6,183.9 106.3,183.3 105.5,190.1 110.9,190.7" fill="#9e4500"/>
<polygon points="111.6,184.2 106.2,183.6 105.6,189.0 111.0,189.6" fill="#e26300"/>
<polygon points="111.5,184.7 106.2,184.1 105.8,187.5 111.2,188.1" fill="#fa6d00"/>
<polygon points="111.4,185.5 106.1,184.9 105.9,186.2 111.3,186.8" fill="#fcaf50"/>
<polygon points="90.1,181.5 106.3,183.3 105.5,190.1 89.3,188.3" fill="#9d4f00"/>
<polygon points="90.0,181.8 106.2,183.6 105.6,189.0 89.4,187.2" fill="#e17000"/>
<polygon points="90.0,182.2 106.2,184.1 105.8,187.5 89.6,185.6" fill="#f97d00"/>
<polygon points="89.9,183.1 106.1,184.9 105.9,186.2 89.7,184.4" fill="#fcb750"/>
<circle cx="89.7" cy="184.9" r="11.8" fill="url(#s176)"/>
<circle cx="91.8" cy="182.5" r="4.5" fill="url(#h42b)"/>
<polygon points="83.3,181.5 79.9,181.5 80.0,188.6 83.4,188.5" fill="#9d4f00"/>
<polygon points="83.3,181.7 79.9,181.7 80.0,187.4 83.4,187.4" fill="#e17000"/>
<polygon points="83.3,182.2 79.9,182.2 80.0,185.8 83.3,185.7" fill="#f97d00"/>
<polygon points="83.3,183.1 79.9,183.1 80.0,184.5 83.3,184.5" fill="#fcb750"/>
<circle cx="175.2" cy="154.3" r="11.9" fill="url(#s177)"/>
<circle cx="179.9" cy="151.1" r="4.5" fill="url(#h47b)"/>
<polygon points="181.8,144.9 183.5,139.8 176.9,137.7 175.3,142.9" fill="#9e3600"/>
<polygon points="181.6,144.9 183.2,139.7 178.0,138.0 176.3,143.2" fill="#e24e00"/>
<polygon points="181.1,144.7 182.8,139.5 179.5,138.5 177.8,143.7" fill="#fb5600"/>
<polygon points="180.3,144.5 182.0,139.3 180.6,138.9 179.0,144.0" fill="#fda250"/>
<polygon points="175.7,161.3 174.3,164.1 167.9,161.0 169.4,158.1" fill="#9e3600"/>
<polygon points="175.4,161.1 174.1,164.0 169.0,161.5 170.4,158.6" fill="#e24e00"/>
<polygon points="175.0,160.9 173.6,163.8 170.4,162.2 171.9,159.4" fill="#fb5600"/>
<polygon points="174.3,160.5 172.9,163.4 171.6,162.8 173.0,159.9" fill="#fda250"/>
<polygon points="188.5,124.1 183.5,139.8 176.9,137.7 181.9,122.0" fill="#9f3200"/>
<polygon points="188.2,124.0 183.2,139.7 178.0,138.0 182.9,122.3" fill="#e34700"/>
<polygon points="187.8,123.8 182.8,139.5 179.5,138.5 184.5,122.8" fill="#fc4f00"/>
<polygon points="187.0,123.6 182.0,139.3 180.6,138.9 185.6,123.2" fill="#fd9e50"/>
<circle cx="185.2" cy="123.0" r="11.9" fill="url(#s178)"/>
<circle cx="190.2" cy="119.0" r="4.5" fill="url(#h48b)"/>
<polygon points="189.0,117.5 189.1,114.5 181.9,114.2 181.9,117.2" fill="#9f3200"/>
<polygon points="188.7,117.5 188.8,114.5 183.1,114.3 183.0,117.3" fill="#e34700"/>
<polygon points="188.2,117.5 188.3,114.5 184.7,114.4 184.6,117.3" fill="#fc4f00"/>
<polygon points="187.3,117.4 187.5,114.5 186.0,114.4 185.9,117.4" fill="#fd9e50"/>
<circle cx="131.7" cy="48.3" r="11.9" fill="url(#s179)"/>
<circle cx="135.1" cy="42.3" r="4.5" fill="url(#h29b)"/>
<polygon points="125.7,43.0 122.0,41.9 120.1,48.8 123.8,49.8" fill="#769200"/>
<polygon points="125.6,43.2 122.0,42.2 120.4,47.7 124.1,48.7" fill="#a9d000"/>
<polygon points="125.5,43.7 121.8,42.7 120.9,46.1 124.5,47.1" fill="#bce700"/>
<polygon points="125.3,44.5 121.6,43.5 121.2,44.9 124.9,45.9" fill="#daf250"/>
<polygon points="143.0,50.3 147.8,52.8 144.6,58.9 139.8,56.4" fill="#769200"/>
<polygon points="142.9,50.5 147.7,53.0 145.1,57.9 140.3,55.4" fill="#a9d000"/>
<polygon points="142.6,50.9 147.5,53.4 145.9,56.5 141.0,54.0" fill="#bce700"/>
<polygon points="142.3,51.7 147.1,54.2 146.4,55.4 141.6,52.9" fill="#daf250"/>
<polygon points="162.4,60.3 147.8,52.8 144.6,58.9 159.2,66.5" fill="#6c9000"/>
<polygon points="162.3,60.6 147.7,53.0 145.1,57.9 159.7,65.5" fill="#9bce00"/>
<polygon points="162.0,61.0 147.5,53.4 145.9,56.5 160.4,64.1" fill="#abe500"/>
<polygon points="161.7,61.7 147.1,54.2 146.4,55.4 161.0,63.0" fill="#d1f150"/>
<circle cx="160.8" cy="63.4" r="12.0" fill="url(#s180)"/>
<circle cx="165.1" cy="57.8" r="4.6" fill="url(#h30b)"/>
<polygon points="166.4,63.4 168.2,64.8 163.6,70.4 161.9,68.9" fill="#6c9000"/>
<polygon points="166.2,63.6 168.1,65.1 164.4,69.5 162.6,68.0" fill="#9bce00"/>
<polygon points="165.9,64.0 167.7,65.5 165.4,68.2 163.7,66.8" fill="#abe500"/>
<polygon points="165.4,64.7 167.2,66.1 166.3,67.2 164.5,65.8" fill="#d1f150"/>
<circle cx="44.2" cy="139.5" r="12.0" fill="url(#s181)"/>
<circle cx="45.0" cy="135.9" r="4.6" fill="url(#h49b)"/>
<polygon points="47.5,146.3 47.5,149.8 40.2,149.6 40.4,146.1" fill="#9d6c00"/>
<polygon points="47.2,146.3 47.2,149.8 41.4,149.6 41.5,146.1" fill="#e09a00"/>
<polygon points="46.7,146.3 46.7,149.8 43.0,149.7 43.2,146.2" fill="#f8ab00"/>
<polygon points="45.9,146.2 45.8,149.8 44.3,149.7 44.5,146.2" fill="#fbd150"/>
<polygon points="46.4,128.1 45.8,122.6 38.8,123.4 39.4,128.9" fill="#9d6c00"/>
<polygon points="46.1,128.1 45.5,122.7 39.9,123.3 40.5,128.8" fill="#e09a00"/>
<polygon points="45.6,128.2 45.0,122.7 41.5,123.1 42.1,128.6" fill="#f8ab00"/>
<polygon points="44.8,128.3 44.1,122.8 42.7,123.0 43.4,128.5" fill="#fbd150"/>
<polygon points="43.8,105.9 45.8,122.6 38.8,123.4 36.8,106.7" fill="#9c7f00"/>
<polygon points="43.6,105.9 45.5,122.7 39.9,123.3 37.9,106.6" fill="#dfb500"/>
<polygon points="43.1,106.0 45.0,122.7 41.5,123.1 39.5,106.4" fill="#f8c900"/>
<polygon points="42.2,106.1 44.1,122.8 42.7,123.0 40.8,106.2" fill="#fbe150"/>
<polygon points="37.5,104.2 44.3,95.2 49.8,99.3 43.2,108.4" fill="#9c7f00"/>
<polygon points="37.7,104.3 44.5,95.4 48.9,98.7 42.3,107.7" fill="#dfb500"/>
<polygon points="38.1,104.6 44.9,95.7 47.7,97.7 40.9,106.8" fill="#f8c900"/>
<polygon points="38.8,105.2 45.6,96.2 46.7,97.0 39.9,106.0" fill="#fbe150"/>
<circle cx="40.3" cy="106.3" r="12.2" fill="url(#s182)"/>
<circle cx="41.0" cy="101.7" r="4.6" fill="url(#h35b)"/>
<polygon points="41.5,100.0 40.4,97.5 33.7,100.5 34.8,103.0" fill="#9c7f00"/>
<polygon points="41.2,100.2 40.1,97.6 34.7,100.0 35.9,102.6" fill="#dfb500"/>
<polygon points="40.8,100.4 39.7,97.8 36.3,99.3 37.4,101.9" fill="#f8c900"/>
<polygon points="40.0,100.7 38.8,98.2 37.5,98.8 38.6,101.3" fill="#fbe150"/>
<circle cx="76.5" cy="51.4" r="12.7" fill="url(#s183)"/>
<circle cx="78.3" cy="45.1" r="4.8" fill="url(#h32b)"/>
<polygon points="86.5,44.8 92.0,43.3 93.9,50.4 88.4,51.9" fill="#969600"/>
<polygon points="86.5,45.1 92.0,43.6 93.6,49.3 88.1,50.8" fill="#d7d700"/>
<polygon points="86.7,45.6 92.2,44.1 93.2,47.6 87.7,49.1" fill="#eeee00"/>
<polygon points="86.9,46.4 92.4,44.9 92.8,46.3 87.3,47.9" fill="#f6f650"/>
<polygon points="67.7,50.5 63.7,51.9 66.2,59.1 70.2,57.6" fill="#969600"/>
<polygon points="67.8,50.8 63.8,52.2 65.8,57.9 69.8,56.5" fill="#d7d700"/>
<polygon points="67.9,51.3 63.9,52.7 65.2,56.3 69.2,54.9" fill="#eeee00"/>
<polygon points="68.2,52.2 64.2,53.5 64.7,55.0 68.7,53.6" fill="#f6f650"/>
<circle cx="137.7" cy="191.1" r="12.7" fill="url(#s184)"/>
<circle cx="141.5" cy="188.7" r="4.8" fill="url(#h48b)"/>
<polygon points="145.3,181.5 150.1,178.2 154.2,184.3 149.4,187.6" fill="#9f3200"/>
<polygon points="145.5,181.7 150.3,178.5 153.6,183.4 148.8,186.6" fill="#e34700"/>
<polygon points="145.7,182.2 150.6,178.9 152.6,182.0 147.8,185.2" fill="#fc4f00"/>
<polygon points="146.2,182.9 151.1,179.6 151.9,180.9 147.1,184.1" fill="#fd9e50"/>
<polygon points="129.7,191.9 126.6,193.9 130.9,200.3 134.0,198.2" fill="#9f3200"/>
<polygon points="129.9,192.1 126.8,194.1 130.2,199.3 133.3,197.1" fill="#e34700"/>
<polygon points="130.2,192.5 127.1,194.6 129.2,197.8 132.3,195.7" fill="#fc4f00"/>
<polygon points="130.7,193.3 127.6,195.4 128.4,196.6 131.6,194.6" fill="#fd9e50"/>
<circle cx="69.4" cy="185.1" r="12.8" fill="url(#s185)"/>
<circle cx="71.1" cy="182.6" r="4.8" fill="url(#h46b)"/>
<polygon points="76.1,188.0 78.1,190.6 71.8,195.1 69.9,192.4" fill="#9e4500"/>
<polygon points="75.9,188.2 77.8,190.8 72.8,194.4 70.9,191.7" fill="#e26300"/>
<polygon points="75.4,188.5 77.4,191.1 74.3,193.4 72.4,190.7" fill="#fa6d00"/>
<polygon points="74.7,189.0 76.6,191.7 75.4,192.6 73.5,189.9" fill="#fcaf50"/>
<polygon points="63.4,174.3 59.1,170.3 54.0,175.7 58.3,179.7" fill="#9e4500"/>
<polygon points="63.2,174.6 58.9,170.5 54.8,174.8 59.1,178.9" fill="#e26300"/>
<polygon points="62.8,174.9 58.5,170.9 56.0,173.6 60.3,177.6" fill="#fa6d00"/>
<polygon points="62.2,175.6 57.9,171.5 56.9,172.6 61.2,176.7" fill="#fcaf50"/>
<polygon points="164.6,168.4 150.1,178.2 154.2,184.3 168.8,174.5" fill="#9f2800"/>
<polygon points="164.8,168.6 150.3,178.5 153.6,183.4 168.1,173.5" fill="#e33900"/>
<polygon points="165.1,169.0 150.6,178.9 152.6,182.0 167.2,172.1" fill="#fc3f00"/>
<polygon points="165.6,169.8 151.1,179.6 151.9,180.9 166.4,171.0" fill="#fd9550"/>
<circle cx="166.7" cy="171.4" r="12.8" fill="url(#s186)"/>
<circle cx="171.5" cy="168.5" r="4.9" fill="url(#h50b)"/>
<polygon points="173.2,170.8 175.3,169.0 170.2,163.2 168.2,165.1" fill="#9f2800"/>
<polygon points="173.0,170.6 175.1,168.8 171.0,164.2 169.0,166.0" fill="#e33900"/>
<polygon points="172.6,170.2 174.8,168.4 172.2,165.5 170.1,167.3" fill="#fc3f00"/>
<polygon points="172.0,169.5 174.1,167.7 173.1,166.5 171.0,168.4" fill="#fd9550"/>
<polygon points="110.7,38.6 122.0,41.9 120.1,48.8 108.7,45.8" fill="#8b9500"/>
<polygon points="110.6,38.9 122.0,42.2 120.4,47.7 109.0,44.6" fill="#c7d400"/>
<polygon points="110.4,39.4 121.8,42.7 120.9,46.1 109.5,43.0" fill="#ddec00"/>
<polygon points="110.2,40.3 121.6,43.5 121.2,44.9 109.8,41.7" fill="#ecf450"/>
<polygon points="108.7,38.6 92.0,43.3 93.9,50.4 110.7,45.8" fill="#8b9500"/>
<polygon points="108.8,38.9 92.0,43.6 93.6,49.3 110.3,44.6" fill="#c7d400"/>
<polygon points="108.9,39.4 92.2,44.1 93.2,47.6 109.9,43.0" fill="#ddec00"/>
<polygon points="109.1,40.3 92.4,44.9 92.8,46.3 109.5,41.7" fill="#ecf450"/>
<circle cx="109.7" cy="42.2" r="12.8" fill="url(#s187)"/>
<circle cx="112.6" cy="35.6" r="4.9" fill="url(#h31b)"/>
<polygon points="112.4,37.4 114.4,36.7 116.6,44.2 114.6,44.7" fill="#8b9500"/>
<polygon points="112.5,37.7 114.5,37.0 116.3,43.0 114.2,43.6" fill="#c7d400"/>
<polygon points="112.6,38.2 114.6,37.5 115.7,41.3 113.7,41.9" fill="#ddec00"/>
<polygon points="112.9,39.1 114.9,38.4 115.3,39.9 113.3,40.5" fill="#ecf450"/>
<polygon points="46.1,158.0 59.1,170.3 54.0,175.7 40.9,163.4" fill="#9d4f00"/>
<polygon points="45.8,158.2 58.9,170.5 54.8,174.8 41.7,162.6" fill="#e17000"/>
<polygon points="45.5,158.6 58.5,170.9 56.0,173.6 42.9,161.3" fill="#f97d00"/>
<polygon points="44.9,159.2 57.9,171.5 56.9,172.6 43.8,160.3" fill="#fcb750"/>
<circle cx="43.5" cy="160.7" r="12.9" fill="url(#s188)"/>
<circle cx="44.3" cy="157.4" r="4.9" fill="url(#h42b)"/>
<polygon points="39.4,154.2 36.2,152.5 32.6,159.5 35.8,161.1" fill="#9d4f00"/>
<polygon points="39.2,154.5 36.1,152.8 33.2,158.4 36.4,160.0" fill="#e17000"/>
<polygon points="39.0,155.0 35.8,153.3 34.0,156.8 37.2,158.4" fill="#f97d00"/>
<polygon points="38.5,155.8 35.4,154.1 34.7,155.5 37.8,157.2" fill="#fcb750"/>
<circle cx="185.9" cy="105.0" r="12.9" fill="url(#s189)"/>
<circle cx="191.4" cy="100.2" r="4.9" fill="url(#h51b)"/>
<polygon points="184.5,92.6 182.2,87.1 175.3,90.2 177.7,95.6" fill="#a01600"/>
<polygon points="184.3,92.7 181.9,87.3 176.4,89.7 178.8,95.1" fill="#e42000"/>
<polygon points="183.8,92.9 181.4,87.5 178.0,89.0 180.3,94.4" fill="#fd2400"/>
<polygon points="183.0,93.3 180.6,87.8 179.2,88.4 181.6,93.9" fill="#fe8650"/>
<polygon points="190.7,110.0 191.3,112.9 183.6,114.4 183.1,111.4" fill="#a01600"/>
<polygon points="190.4,110.0 191.0,113.0 184.9,114.1 184.4,111.1" fill="#e42000"/>
<polygon points="189.9,110.1 190.5,113.1 186.6,113.8 186.1,110.8" fill="#fd2400"/>
<polygon points="189.0,110.3 189.6,113.3 188.0,113.5 187.5,110.6" fill="#fe8650"/>
<polygon points="174.9,70.7 182.2,87.1 175.3,90.2 168.1,73.7" fill="#8b9500"/>
<polygon points="174.7,70.8 181.9,87.3 176.4,89.7 169.2,73.2" fill="#c7d400"/>
<polygon points="174.2,71.0 181.4,87.5 178.0,89.0 170.7,72.6" fill="#ddec00"/>
<polygon points="173.4,71.4 180.6,87.8 179.2,88.4 172.0,72.0" fill="#ecf450"/>
<circle cx="171.5" cy="72.2" r="13.0" fill="url(#s190)"/>
<circle cx="176.5" cy="66.4" r="4.9" fill="url(#h31b)"/>
<polygon points="169.9,64.2 167.6,61.2 161.5,66.2 163.9,69.1" fill="#8b9500"/>
<polygon points="169.7,64.4 167.3,61.4 162.5,65.4 164.9,68.3" fill="#c7d400"/>
<polygon points="169.3,64.7 166.9,61.7 163.9,64.2 166.3,67.2" fill="#ddec00"/>
<polygon points="168.6,65.3 166.2,62.3 165.0,63.3 167.4,66.3" fill="#ecf450"/>
<circle cx="33.4" cy="91.0" r="13.4" fill="url(#s191)"/>
<circle cx="33.9" cy="85.6" r="5.1" fill="url(#h52b)"/>
<polygon points="25.3,95.3 22.6,98.8 29.0,103.6 31.6,100.1" fill="#9d7500"/>
<polygon points="25.5,95.5 22.8,99.0 28.0,102.8 30.6,99.3" fill="#e0a800"/>
<polygon points="26.0,95.8 23.3,99.3 26.5,101.7 29.1,98.2" fill="#f8ba00"/>
<polygon points="26.7,96.4 24.1,99.9 25.4,100.8 28.0,97.3" fill="#fbd950"/>
<polygon points="36.4,78.7 39.5,73.5 46.2,77.6 43.0,82.8" fill="#9d7500"/>
<polygon points="36.7,78.9 39.8,73.7 45.1,77.0 42.0,82.1" fill="#e0a800"/>
<polygon points="37.1,79.2 40.3,74.0 43.6,76.0 40.4,81.2" fill="#f8ba00"/>
<polygon points="37.9,79.7 41.1,74.5 42.4,75.3 39.2,80.5" fill="#fbd950"/>
<polygon points="49.1,57.8 39.5,73.5 46.2,77.6 55.9,61.9" fill="#9c8900"/>
<polygon points="49.4,57.9 39.8,73.7 45.1,77.0 54.8,61.2" fill="#dfc300"/>
<polygon points="49.9,58.2 40.3,74.0 43.6,76.0 53.2,60.3" fill="#f7d800"/>
<polygon points="50.7,58.7 41.1,74.5 42.4,75.3 52.0,59.6" fill="#fbea50"/>
<polygon points="51.2,56.1 63.7,51.9 66.2,59.1 53.8,63.6" fill="#9c8900"/>
<polygon points="51.3,56.4 63.8,52.2 65.8,57.9 53.4,62.4" fill="#dfc300"/>
<polygon points="51.5,56.9 63.9,52.7 65.2,56.3 52.8,60.7" fill="#f7d800"/>
<polygon points="51.8,57.8 64.2,53.5 64.7,55.0 52.3,59.3" fill="#fbea50"/>
<circle cx="52.5" cy="59.8" r="13.6" fill="url(#s192)"/>
<circle cx="53.7" cy="53.4" r="5.2" fill="url(#h53b)"/>
<polygon points="57.6,56.1 58.2,53.7 50.2,51.7 49.6,54.3" fill="#9c8900"/>
<polygon points="57.3,56.1 57.9,53.6 51.5,52.1 50.9,54.6" fill="#dfc300"/>
<polygon points="56.7,55.9 57.3,53.5 53.3,52.5 52.7,55.0" fill="#f7d800"/>
<polygon points="55.7,55.7 56.4,53.2 54.8,52.8 54.2,55.3" fill="#fbea50"/>
<circle cx="119.0" cy="203.6" r="13.8" fill="url(#s193)"/>
<circle cx="122.5" cy="201.4" r="5.2" fill="url(#h54b)"/>
<polygon points="125.4,200.6 128.4,201.1 126.9,209.3 123.9,208.7" fill="#9f2d00"/>
<polygon points="125.3,200.9 128.3,201.4 127.1,208.0 124.1,207.4" fill="#e34000"/>
<polygon points="125.2,201.5 128.2,202.0 127.5,206.1 124.5,205.5" fill="#fc4700"/>
<polygon points="125.0,202.4 128.0,203.0 127.7,204.6 124.7,204.1" fill="#fd9a50"/>
<polygon points="106.6,198.8 100.2,198.4 99.7,206.4 106.1,206.8" fill="#9f2d00"/>
<polygon points="106.5,199.1 100.2,198.7 99.8,205.1 106.1,205.5" fill="#e34000"/>
<polygon points="106.5,199.7 100.2,199.3 99.9,203.3 106.3,203.7" fill="#fc4700"/>
<polygon points="106.4,200.6 100.1,200.2 100.0,201.8 106.3,202.2" fill="#fd9a50"/>
<polygon points="81.2,197.2 100.2,198.4 99.7,206.4 80.7,205.2" fill="#9e3600"/>
<polygon points="81.1,197.5 100.2,198.7 99.8,205.1 80.8,204.0" fill="#e24e00"/>
<polygon points="81.1,198.1 100.2,199.3 99.9,203.3 80.9,202.1" fill="#fb5600"/>
<polygon points="81.1,199.1 100.1,200.2 100.0,201.8 81.0,200.7" fill="#fda250"/>
<circle cx="80.9" cy="201.2" r="13.8" fill="url(#s194)"/>
<circle cx="83.1" cy="199.0" r="5.3" fill="url(#h47b)"/>
<polygon points="72.6,198.0 68.4,198.4 69.3,206.7 73.5,206.2" fill="#9e3600"/>
<polygon points="72.6,198.3 68.4,198.7 69.1,205.4 73.3,204.9" fill="#e24e00"/>
<polygon points="72.7,198.9 68.5,199.3 68.9,203.5 73.1,203.0" fill="#fb5600"/>
<polygon points="72.8,199.9 68.6,200.3 68.8,202.0 73.0,201.5" fill="#fda250"/>
<circle cx="179.4" cy="160.3" r="13.9" fill="url(#s195)"/>
<circle cx="185.1" cy="156.8" r="5.3" fill="url(#h55b)"/>
<polygon points="186.6,149.0 188.2,142.8 180.4,140.7 178.7,146.9" fill="#a01900"/>
<polygon points="186.3,148.9 187.9,142.7 181.6,141.0 180.0,147.2" fill="#e42400"/>
<polygon points="185.7,148.7 187.3,142.5 183.4,141.5 181.8,147.7" fill="#fd2800"/>
<polygon points="184.8,148.5 186.4,142.3 184.8,141.9 183.2,148.1" fill="#fe8950"/>
<polygon points="180.4,168.7 179.0,172.3 171.2,169.0 172.7,165.5" fill="#a01900"/>
<polygon points="180.1,168.5 178.7,172.1 172.4,169.5 174.0,166.0" fill="#e42400"/>
<polygon points="179.6,168.3 178.1,171.9 174.2,170.3 175.7,166.7" fill="#fd2800"/>
<polygon points="178.7,167.9 177.2,171.5 175.6,170.9 177.1,167.3" fill="#fe8950"/>
<circle cx="121.9" cy="38.5" r="14.0" fill="url(#s196)"/>
<circle cx="125.6" cy="31.2" r="5.3" fill="url(#h33b)"/>
<polygon points="114.4,32.3 109.9,31.1 107.8,39.3 112.3,40.4" fill="#999000"/>
<polygon points="114.3,32.7 109.8,31.4 108.1,38.0 112.7,39.1" fill="#dbcd00"/>
<polygon points="114.2,33.2 109.7,32.0 108.6,36.1 113.1,37.3" fill="#f3e400"/>
<polygon points="113.9,34.2 109.4,33.0 109.0,34.7 113.5,35.8" fill="#f8f050"/>
<polygon points="135.2,40.1 141.0,42.7 137.7,50.2 131.9,47.5" fill="#999000"/>
<polygon points="135.1,40.4 140.9,43.0 138.2,49.0 132.4,46.3" fill="#dbcd00"/>
<polygon points="134.9,40.9 140.7,43.5 139.0,47.3 133.2,44.6" fill="#f3e400"/>
<polygon points="134.4,41.8 140.3,44.4 139.6,45.9 133.8,43.3" fill="#f8f050"/>
<polygon points="193.2,124.0 188.2,142.8 180.4,140.7 185.3,121.9" fill="#a00d00"/>
<polygon points="192.8,123.9 187.9,142.7 181.6,141.0 186.5,122.3" fill="#e51200"/>
<polygon points="192.3,123.8 187.3,142.5 183.4,141.5 188.4,122.8" fill="#fe1400"/>
<polygon points="191.3,123.5 186.4,142.3 184.8,141.9 189.8,123.1" fill="#ff7e50"/>
<circle cx="189.2" cy="123.0" r="14.0" fill="url(#s197)"/>
<circle cx="195.3" cy="118.3" r="5.3" fill="url(#h56b)"/>
<polygon points="193.4,116.4 193.5,112.8 185.0,112.8 185.0,116.3" fill="#a00d00"/>
<polygon points="193.1,116.4 193.2,112.8 186.3,112.8 186.4,116.3" fill="#e51200"/>
<polygon points="192.5,116.4 192.6,112.8 188.3,112.8 188.3,116.3" fill="#fe1400"/>
<polygon points="191.5,116.4 191.5,112.8 189.8,112.8 189.8,116.4" fill="#ff7e50"/>
<polygon points="158.6,50.6 141.0,42.7 137.7,50.2 155.3,58.1" fill="#989300"/>
<polygon points="158.5,50.9 140.9,43.0 138.2,49.0 155.8,56.9" fill="#d9d200"/>
<polygon points="158.3,51.5 140.7,43.5 139.0,47.3 156.6,55.2" fill="#f0e900"/>
<polygon points="157.9,52.4 140.3,44.4 139.6,45.9 157.2,53.9" fill="#f7f350"/>
<circle cx="156.9" cy="54.4" r="14.1" fill="url(#s198)"/>
<circle cx="161.9" cy="47.5" r="5.4" fill="url(#h45b)"/>
<polygon points="163.4,53.7 165.6,55.1 160.8,62.2 158.6,60.6" fill="#989300"/>
<polygon points="163.2,54.0 165.4,55.4 161.5,61.1 159.4,59.5" fill="#d9d200"/>
<polygon points="162.9,54.4 165.1,55.9 162.7,59.4 160.5,57.9" fill="#f0e900"/>
<polygon points="162.3,55.3 164.5,56.7 163.5,58.2 161.3,56.7" fill="#f7f350"/>
<circle cx="24.5" cy="150.9" r="14.1" fill="url(#s199)"/>
<circle cx="24.7" cy="147.0" r="5.4" fill="url(#h57b)"/>
<polygon points="28.2,159.2 28.1,163.5 19.5,163.0 19.8,158.7" fill="#9e4a00"/>
<polygon points="27.9,159.1 27.7,163.4 20.9,163.0 21.2,158.8" fill="#e16a00"/>
<polygon points="27.3,159.1 27.1,163.4 22.8,163.2 23.1,158.9" fill="#fa7500"/>
<polygon points="26.3,159.1 26.1,163.3 24.4,163.2 24.6,159.0" fill="#fcb350"/>
<polygon points="26.3,137.4 25.1,130.9 17.0,132.4 18.1,138.8" fill="#9e4a00"/>
<polygon points="25.9,137.4 24.8,131.0 18.3,132.2 19.4,138.6" fill="#e16a00"/>
<polygon points="25.4,137.5 24.2,131.1 20.2,131.8 21.3,138.2" fill="#fa7500"/>
<polygon points="24.4,137.7 23.3,131.3 21.6,131.6 22.8,138.0" fill="#fcb350"/>
<polygon points="21.7,111.4 25.1,130.9 17.0,132.4 13.5,112.9" fill="#9d5d00"/>
<polygon points="21.4,111.4 24.8,131.0 18.3,132.2 14.8,112.6" fill="#e08500"/>
<polygon points="20.8,111.6 24.2,131.1 20.2,131.8 16.7,112.3" fill="#f99400"/>
<polygon points="19.8,111.7 23.3,131.3 21.6,131.6 18.2,112.0" fill="#fcc450"/>
<polygon points="14.2,109.6 22.6,98.8 29.0,103.6 20.9,114.6" fill="#9d5d00"/>
<polygon points="14.5,109.8 22.8,99.0 28.0,102.8 19.8,113.8" fill="#e08500"/>
<polygon points="15.0,110.2 23.3,99.3 26.5,101.7 18.3,112.7" fill="#f99400"/>
<polygon points="15.8,110.8 24.1,99.9 25.4,100.8 17.1,111.8" fill="#fcc450"/>
<circle cx="17.6" cy="112.1" r="14.4" fill="url(#s200)"/>
<circle cx="17.5" cy="106.9" r="5.5" fill="url(#h58b)"/>
<polygon points="17.6,104.2 15.7,101.2 8.3,106.1 10.3,109.0" fill="#9d5d00"/>
<polygon points="17.3,104.4 15.4,101.4 9.5,105.3 11.5,108.2" fill="#e08500"/>
<polygon points="16.8,104.8 14.9,101.8 11.2,104.2 13.2,107.1" fill="#f99400"/>
<polygon points="15.9,105.3 14.0,102.3 12.5,103.3 14.5,106.3" fill="#fcc450"/>
<circle cx="56.1" cy="44.8" r="15.0" fill="url(#s201)"/>
<circle cx="57.5" cy="37.2" r="5.7" fill="url(#h37b)"/>
<polygon points="67.4,36.3 73.8,34.1 76.6,42.4 70.2,44.6" fill="#9c8400"/>
<polygon points="67.5,36.7 73.9,34.5 76.2,41.1 69.8,43.3" fill="#dfbc00"/>
<polygon points="67.7,37.2 74.1,35.0 75.5,39.2 69.1,41.4" fill="#f8d100"/>
<polygon points="68.0,38.2 74.4,36.0 75.0,37.7 68.6,39.9" fill="#fbe650"/>
<polygon points="45.2,43.9 40.2,45.6 43.3,54.2 48.2,52.4" fill="#9c8400"/>
<polygon points="45.3,44.3 40.4,46.0 42.8,52.8 47.7,51.0" fill="#dfbc00"/>
<polygon points="45.6,44.9 40.6,46.6 42.1,50.9 47.1,49.1" fill="#f8d100"/>
<polygon points="45.9,45.9 40.9,47.6 41.5,49.3 46.5,47.6" fill="#fbe650"/>
<circle cx="137.1" cy="206.9" r="15.1" fill="url(#s202)"/>
<circle cx="141.6" cy="204.7" r="5.8" fill="url(#h59b)"/>
<polygon points="150.8,202.1 156.3,198.0 151.0,190.9 145.5,195.1" fill="#a01e00"/>
<polygon points="150.6,201.8 156.1,197.7 151.9,192.1 146.4,196.2" fill="#e42b00"/>
<polygon points="150.2,201.4 155.8,197.2 153.1,193.7 147.6,197.8" fill="#fd2f00"/>
<polygon points="149.6,200.5 155.1,196.3 154.1,194.9 148.5,199.1" fill="#fe8d50"/>
<polygon points="133.0,216.0 129.3,219.0 123.6,211.8 127.3,208.9" fill="#a01e00"/>
<polygon points="132.7,215.7 129.1,218.7 124.5,212.9 128.2,210.0" fill="#e42b00"/>
<polygon points="132.4,215.2 128.7,218.2 125.8,214.6 129.5,211.7" fill="#fd2f00"/>
<polygon points="131.7,214.4 128.0,217.3 126.8,215.9 130.5,212.9" fill="#fe8d50"/>
<circle cx="55.6" cy="204.0" r="15.2" fill="url(#s203)"/>
<circle cx="57.0" cy="201.6" r="5.8" fill="url(#h60b)"/>
<polygon points="63.4,207.8 65.6,211.1 57.8,216.1 55.8,212.7" fill="#9f3400"/>
<polygon points="63.1,208.0 65.3,211.3 59.1,215.3 57.0,211.9" fill="#e34a00"/>
<polygon points="62.6,208.3 64.8,211.7 60.9,214.2 58.7,210.8" fill="#fb5200"/>
<polygon points="61.6,208.9 63.8,212.3 62.3,213.3 60.1,209.9" fill="#fda050"/>
<polygon points="47.6,191.6 42.2,187.0 36.5,193.8 41.9,198.3" fill="#9f3400"/>
<polygon points="47.4,191.8 42.0,187.3 37.4,192.7 42.8,197.2" fill="#e34a00"/>
<polygon points="47.0,192.3 41.6,187.8 38.8,191.1 44.1,195.7" fill="#fb5200"/>
<polygon points="46.3,193.1 40.9,188.6 39.8,189.9 45.2,194.5" fill="#fda050"/>
<polygon points="173.1,185.4 156.3,198.0 151.0,190.9 167.8,178.3" fill="#a01400"/>
<polygon points="172.9,185.1 156.1,197.7 151.9,192.1 168.6,179.5" fill="#e51d00"/>
<polygon points="172.5,184.6 155.8,197.2 153.1,193.7 169.8,181.1" fill="#fe2000"/>
<polygon points="171.8,183.8 155.1,196.3 154.1,194.9 170.8,182.4" fill="#fe8450"/>
<circle cx="170.4" cy="181.9" r="15.2" fill="url(#s204)"/>
<circle cx="176.3" cy="178.7" r="5.8" fill="url(#h61b)"/>
<polygon points="178.0,181.3 180.5,179.2 174.3,172.2 171.9,174.4" fill="#a01400"/>
<polygon points="177.7,181.0 180.2,178.9 175.3,173.3 172.9,175.5" fill="#e51d00"/>
<polygon points="177.3,180.5 179.8,178.4 176.7,174.9 174.3,177.1" fill="#fe2000"/>
<polygon points="176.6,179.7 179.0,177.6 177.8,176.2 175.4,178.3" fill="#fe8450"/>
<polygon points="95.8,27.3 109.9,31.1 107.8,39.3 93.6,35.9" fill="#9c8400"/>
<polygon points="95.7,27.7 109.8,31.4 108.1,38.0 93.9,34.5" fill="#dfbc00"/>
<polygon points="95.5,28.3 109.7,32.0 108.6,36.1 94.4,32.6" fill="#f8d100"/>
<polygon points="95.2,29.3 109.4,33.0 109.0,34.7 94.8,31.0" fill="#fbe650"/>
<polygon points="93.2,27.4 73.8,34.1 76.6,42.4 96.1,35.8" fill="#9c8400"/>
<polygon points="93.3,27.8 73.9,34.5 76.2,41.1 95.6,34.5" fill="#dfbc00"/>
<polygon points="93.5,28.3 74.1,35.0 75.5,39.2 95.0,32.5" fill="#f8d100"/>
<polygon points="93.9,29.4 74.4,36.0 75.0,37.7 94.5,31.0" fill="#fbe650"/>
<circle cx="94.7" cy="31.6" r="15.3" fill="url(#s205)"/>
<circle cx="97.6" cy="23.4" r="5.8" fill="url(#h37b)"/>
<polygon points="96.6,25.5 98.8,24.3 103.0,32.6 100.8,33.6" fill="#9c8400"/>
<polygon points="96.8,25.8 98.9,24.6 102.3,31.3 100.1,32.3" fill="#dfbc00"/>
<polygon points="97.1,26.4 99.2,25.2 101.4,29.3 99.2,30.4" fill="#f8d100"/>
<polygon points="97.6,27.3 99.7,26.2 100.6,27.9 98.4,29.0" fill="#fbe650"/>
<polygon points="25.9,173.2 42.2,187.0 36.5,193.8 20.2,180.1" fill="#9e3e00"/>
<polygon points="25.7,173.5 42.0,187.3 37.4,192.7 21.1,179.0" fill="#e25800"/>
<polygon points="25.3,174.0 41.6,187.8 38.8,191.1 22.4,177.4" fill="#fb6200"/>
<polygon points="24.6,174.8 40.9,188.6 39.8,189.9 23.4,176.2" fill="#fda950"/>
<circle cx="23.0" cy="176.6" r="15.4" fill="url(#s206)"/>
<circle cx="23.2" cy="173.3" r="5.8" fill="url(#h62b)"/>
<polygon points="16.5,169.3 12.2,167.7 8.9,176.5 13.3,178.0" fill="#9e3e00"/>
<polygon points="16.4,169.7 12.0,168.0 9.5,175.1 13.8,176.6" fill="#e25800"/>
<polygon points="16.2,170.3 11.8,168.6 10.2,173.1 14.6,174.6" fill="#fb6200"/>
<polygon points="15.8,171.3 11.4,169.7 10.8,171.5 15.1,173.1" fill="#fda950"/>
<circle cx="189.3" cy="101.6" r="15.5" fill="url(#s207)"/>
<circle cx="196.0" cy="95.7" r="5.9" fill="url(#h34b)"/>
<polygon points="186.9,86.8 183.7,80.5 175.7,84.5 178.8,90.9" fill="#9b8c00"/>
<polygon points="186.5,87.0 183.4,80.6 176.9,83.9 180.1,90.2" fill="#ddc800"/>
<polygon points="186.0,87.3 182.8,80.9 178.8,82.9 182.0,89.3" fill="#f5de00"/>
<polygon points="185.0,87.8 181.8,81.4 180.2,82.2 183.4,88.6" fill="#faed50"/>
<polygon points="195.4,107.1 196.4,110.6 187.3,112.9 186.5,109.4" fill="#9b8c00"/>
<polygon points="195.1,107.2 196.1,110.7 188.8,112.5 187.9,109.0" fill="#ddc800"/>
<polygon points="194.5,107.3 195.4,110.8 190.9,112.0 190.0,108.5" fill="#f5de00"/>
<polygon points="193.4,107.6 194.3,111.1 192.5,111.6 191.6,108.0" fill="#faed50"/>
<polygon points="174.1,61.3 183.7,80.5 175.7,84.5 166.0,65.3" fill="#9b8c00"/>
<polygon points="173.8,61.5 183.4,80.6 176.9,83.9 167.3,64.7" fill="#ddc800"/>
<polygon points="173.2,61.8 182.8,80.9 178.8,82.9 169.2,63.8" fill="#f5de00"/>
<polygon points="172.2,62.2 181.8,81.4 180.2,82.2 170.6,63.0" fill="#faed50"/>
<circle cx="170.1" cy="63.3" r="15.5" fill="url(#s208)"/>
<circle cx="176.0" cy="56.1" r="5.9" fill="url(#h34b)"/>
<polygon points="167.7,53.6 164.7,50.0 157.6,56.2 160.7,59.7" fill="#9b8c00"/>
<polygon points="167.5,53.8 164.4,50.2 158.7,55.2 161.9,58.7" fill="#ddc800"/>
<polygon points="167.0,54.3 163.9,50.6 160.3,53.7 163.5,57.3" fill="#f5de00"/>
<polygon points="166.1,55.0 163.1,51.4 161.6,52.6 164.7,56.2" fill="#faed50"/>
<circle cx="5.8" cy="94.2" r="16.0" fill="url(#s209)"/>
<circle cx="5.3" cy="87.8" r="6.1" fill="url(#h41b)"/>
<polygon points="-4.4,99.5 -7.9,103.8 -0.2,109.8 3.2,105.4" fill="#9d5800"/>
<polygon points="-4.1,99.7 -7.5,104.0 -1.4,108.8 1.9,104.4" fill="#e17e00"/>
<polygon points="-3.5,100.1 -7.0,104.4 -3.2,107.4 0.2,103.1" fill="#f98c00"/>
<polygon points="-2.6,100.8 -6.1,105.2 -4.6,106.4 -1.1,102.0" fill="#fcc050"/>
<polygon points="16.6,83.7 20.0,77.3 11.7,72.9 8.3,79.3" fill="#9d5800"/>
<polygon points="16.3,83.5 19.7,77.1 13.0,73.6 9.7,80.0" fill="#e17e00"/>
<polygon points="15.7,83.2 19.1,76.8 14.9,74.6 11.6,81.0" fill="#f98c00"/>
<polygon points="14.7,82.7 18.1,76.2 16.4,75.4 13.1,81.8" fill="#fcc050"/>
<polygon points="30.4,57.7 20.0,77.3 11.7,72.9 21.9,53.2" fill="#9d6c00"/>
<polygon points="30.0,57.5 19.7,77.1 13.0,73.6 23.3,54.0" fill="#e09a00"/>
<polygon points="29.4,57.2 19.1,76.8 14.9,74.6 25.2,55.0" fill="#f8ab00"/>
<polygon points="28.4,56.6 18.1,76.2 16.4,75.4 26.7,55.8" fill="#fbd150"/>
<polygon points="24.6,51.0 40.2,45.6 43.3,54.2 27.7,59.9" fill="#9d6c00"/>
<polygon points="24.7,51.3 40.4,46.0 42.8,52.8 27.2,58.5" fill="#e09a00"/>
<polygon points="24.9,52.0 40.6,46.6 42.1,50.9 26.5,56.4" fill="#f8ab00"/>
<polygon points="25.3,53.0 40.9,47.6 41.5,49.3 25.9,54.8" fill="#fbd150"/>
<circle cx="26.1" cy="55.5" r="16.4" fill="url(#s210)"/>
<circle cx="26.5" cy="47.5" r="6.2" fill="url(#h49b)"/>
<polygon points="31.2,49.4 31.3,46.2 21.3,46.0 21.3,49.3" fill="#9d6c00"/>
<polygon points="30.8,49.4 30.9,46.2 22.9,46.0 22.9,49.3" fill="#e09a00"/>
<polygon points="30.1,49.4 30.2,46.1 25.2,46.1 25.2,49.4" fill="#f8ab00"/>
<polygon points="28.9,49.4 29.0,46.1 27.0,46.1 26.9,49.4" fill="#fbd150"/>
<circle cx="114.7" cy="224.7" r="16.7" fill="url(#s211)"/>
<circle cx="118.8" cy="222.8" r="6.3" fill="url(#h55b)"/>
<polygon points="122.5,221.5 126.0,222.2 123.5,232.2 120.0,231.2" fill="#a01900"/>
<polygon points="122.4,221.9 125.9,222.6 123.9,230.6 120.4,229.7" fill="#e42400"/>
<polygon points="122.2,222.5 125.7,223.3 124.5,228.3 121.0,227.4" fill="#fd2800"/>
<polygon points="121.9,223.7 125.4,224.5 124.9,226.5 121.4,225.7" fill="#fe8950"/>
<polygon points="99.4,219.7 91.7,219.6 91.6,229.3 99.2,229.4" fill="#a01900"/>
<polygon points="99.4,220.1 91.7,220.0 91.6,227.8 99.3,227.8" fill="#e42400"/>
<polygon points="99.3,220.8 91.7,220.7 91.6,225.5 99.3,225.6" fill="#fd2800"/>
<polygon points="99.3,221.9 91.7,221.8 91.6,223.8 99.3,223.9" fill="#fe8950"/>
<polygon points="68.6,219.3 91.7,219.6 91.6,229.3 68.5,229.0" fill="#9f2500"/>
<polygon points="68.6,219.7 91.7,220.0 91.6,227.8 68.5,227.5" fill="#e43500"/>
<polygon points="68.6,220.4 91.7,220.7 91.6,225.5 68.5,225.3" fill="#fc3b00"/>
<polygon points="68.6,221.6 91.7,221.8 91.6,223.8 68.5,223.5" fill="#fe9350"/>
<circle cx="68.5" cy="224.2" r="16.7" fill="url(#s212)"/>
<circle cx="70.7" cy="222.3" r="6.4" fill="url(#h63b)"/>
<polygon points="57.3,221.5 51.8,222.6 54.0,232.6 59.4,231.3" fill="#9f2500"/>
<polygon points="57.4,221.9 51.8,223.0 53.6,231.0 59.1,229.8" fill="#e43500"/>
<polygon points="57.5,222.6 52.0,223.7 53.1,228.7 58.6,227.5" fill="#fc3b00"/>
<polygon points="57.8,223.8 52.3,224.9 52.7,226.9 58.2,225.7" fill="#fe9350"/>
<circle cx="185.1" cy="168.8" r="16.9" fill="url(#s213)"/>
<circle cx="192.2" cy="164.9" r="6.4" fill="url(#h64b)"/>
<polygon points="193.1,154.6 194.7,147.0 185.1,145.0 183.5,152.6" fill="#a10300"/>
<polygon points="192.7,154.5 194.3,146.9 186.6,145.3 185.0,152.9" fill="#e60400"/>
<polygon points="192.1,154.4 193.7,146.8 188.8,145.8 187.2,153.4" fill="#ff0400"/>
<polygon points="190.9,154.2 192.5,146.5 190.6,146.1 189.0,153.7" fill="#ff7550"/>
<polygon points="187.0,179.2 185.5,183.9 175.7,180.6 177.4,175.9" fill="#a10300"/>
<polygon points="186.6,179.0 185.1,183.7 177.3,181.1 178.9,176.4" fill="#e60400"/>
<polygon points="185.9,178.8 184.5,183.5 179.5,181.9 181.1,177.2" fill="#ff0400"/>
<polygon points="184.8,178.4 183.3,183.1 181.3,182.4 182.9,177.8" fill="#ff7550"/>
<circle cx="107.8" cy="24.9" r="17.0" fill="url(#s214)"/>
<circle cx="111.7" cy="15.5" r="6.5" fill="url(#h35b)"/>
<polygon points="124.0,25.9 131.2,28.6 127.7,37.9 120.5,35.1" fill="#9c7f00"/>
<polygon points="123.9,26.2 131.1,29.0 128.2,36.4 121.0,33.6" fill="#dfb500"/>
<polygon points="123.6,26.9 130.8,29.7 129.1,34.3 121.9,31.5" fill="#f8c900"/>
<polygon points="123.2,28.0 130.4,30.8 129.7,32.6 122.5,29.8" fill="#fbe150"/>
<polygon points="98.2,17.3 92.3,15.8 89.9,25.9 95.7,27.2" fill="#9c7f00"/>
<polygon points="98.1,17.7 92.2,16.2 90.3,24.3 96.1,25.6" fill="#dfb500"/>
<polygon points="97.9,18.4 92.1,16.9 90.9,22.0 96.7,23.3" fill="#f8c900"/>
<polygon points="97.6,19.6 91.8,18.1 91.3,20.1 97.1,21.6" fill="#fbe150"/>
<polygon points="199.6,124.0 194.7,147.0 185.1,145.0 189.9,121.9" fill="#a10000"/>
<polygon points="199.2,123.9 194.3,146.9 186.6,145.3 191.4,122.3" fill="#e60000"/>
<polygon points="198.5,123.7 193.7,146.8 188.8,145.8 193.7,122.7" fill="#ff0000"/>
<polygon points="197.4,123.5 192.5,146.5 190.6,146.1 195.4,123.1" fill="#ff7350"/>
<circle cx="194.7" cy="122.9" r="17.1" fill="url(#s215)"/>
<circle cx="202.4" cy="117.2" r="6.5" fill="url(#h65b)"/>
<polygon points="199.6,114.7 199.6,110.4 189.1,110.7 189.3,115.0" fill="#a10000"/>
<polygon points="199.2,114.7 199.2,110.4 190.8,110.6 191.0,115.0" fill="#e60000"/>
<polygon points="198.5,114.8 198.5,110.4 193.2,110.6 193.4,114.9" fill="#ff0000"/>
<polygon points="197.3,114.8 197.2,110.5 195.1,110.5 195.2,114.9" fill="#ff7350"/>
<circle cx="-3.4" cy="167.0" r="17.2" fill="url(#s216)"/>
<circle cx="-4.3" cy="162.9" r="6.5" fill="url(#h66b)"/>
<polygon points="0.7,177.7 0.2,183.2 -10.3,182.1 -9.6,176.6" fill="#9e3b00"/>
<polygon points="0.3,177.7 -0.3,183.2 -8.6,182.3 -7.9,176.8" fill="#e25500"/>
<polygon points="-0.5,177.6 -1.0,183.1 -6.2,182.5 -5.6,177.1" fill="#fb5e00"/>
<polygon points="-1.7,177.5 -2.2,182.9 -4.3,182.7 -3.7,177.3" fill="#fda650"/>
<polygon points="-2.3,150.5 -4.1,142.8 -13.9,145.2 -12.0,152.9" fill="#9e3b00"/>
<polygon points="-2.6,150.6 -4.5,142.9 -12.3,144.9 -10.4,152.5" fill="#e25500"/>
<polygon points="-3.3,150.8 -5.2,143.1 -10.1,144.3 -8.2,152.0" fill="#fb5e00"/>
<polygon points="-4.5,151.1 -6.4,143.4 -8.3,143.9 -6.4,151.6" fill="#fda650"/>
<polygon points="153.1,37.1 131.2,28.6 127.7,37.9 149.5,46.3" fill="#9c7f00"/>
<polygon points="152.9,37.4 131.1,29.0 128.2,36.4 150.0,44.9" fill="#dfb500"/>
<polygon points="152.7,38.1 130.8,29.7 129.1,34.3 150.9,42.7" fill="#f8c900"/>
<polygon points="152.2,39.2 130.4,30.8 129.7,32.6 151.5,41.1" fill="#fbe150"/>
<circle cx="151.3" cy="41.7" r="17.2" fill="url(#s217)"/>
<circle cx="157.0" cy="32.8" r="6.5" fill="url(#h35b)"/>
<polygon points="158.7,39.8 161.4,41.1 156.5,50.4 153.9,48.9" fill="#9c7f00"/>
<polygon points="158.5,40.1 161.2,41.5 157.3,48.9 154.6,47.5" fill="#dfb500"/>
<polygon points="158.2,40.8 160.9,42.1 158.4,46.8 155.7,45.4" fill="#f8c900"/>
<polygon points="157.6,41.9 160.3,43.3 159.3,45.1 156.6,43.7" fill="#fbe150"/>
<polygon points="-9.9,119.3 -4.1,142.8 -13.9,145.2 -19.8,121.7" fill="#9e4700"/>
<polygon points="-10.3,119.4 -4.5,142.9 -12.3,144.9 -18.2,121.4" fill="#e16600"/>
<polygon points="-11.0,119.6 -5.2,143.1 -10.1,144.3 -15.9,120.8" fill="#fa7100"/>
<polygon points="-12.2,119.9 -6.4,143.4 -8.3,143.9 -14.1,120.4" fill="#fcb150"/>
<polygon points="-18.8,117.4 -7.9,103.8 -0.2,109.8 -10.8,123.7" fill="#9e4700"/>
<polygon points="-18.5,117.6 -7.5,104.0 -1.4,108.8 -12.1,122.7" fill="#e16600"/>
<polygon points="-17.9,118.1 -7.0,104.4 -3.2,107.4 -13.9,121.2" fill="#fa7100"/>
<polygon points="-17.0,118.8 -6.1,105.2 -4.6,106.4 -15.4,120.1" fill="#fcb150"/>
<circle cx="-14.8" cy="120.5" r="17.5" fill="url(#s218)"/>
<circle cx="-16.3" cy="114.5" r="6.7" fill="url(#h67b)"/>
<polygon points="-17.2,110.4 -20.4,106.8 -28.3,114.2 -24.8,117.7" fill="#9e4700"/>
<polygon points="-17.5,110.7 -20.8,107.1 -27.0,113.0 -23.6,116.5" fill="#e16600"/>
<polygon points="-18.0,111.2 -21.3,107.6 -25.2,111.3 -21.9,114.8" fill="#fa7100"/>
<polygon points="-18.9,112.1 -22.2,108.5 -23.8,110.0 -20.5,113.5" fill="#fcb150"/>
<circle cx="26.5" cy="35.5" r="18.5" fill="url(#s219)"/>
<circle cx="26.8" cy="25.7" r="7.0" fill="url(#h49b)"/>
<polygon points="12.4,34.4 5.8,36.6 9.4,47.3 16.0,44.9" fill="#9d6c00"/>
<polygon points="12.5,34.8 5.9,37.0 8.8,45.6 15.4,43.3" fill="#e09a00"/>
<polygon points="12.8,35.6 6.2,37.7 8.0,43.1 14.6,40.8" fill="#f8ab00"/>
<polygon points="13.2,36.8 6.6,39.0 7.3,41.2 13.9,38.9" fill="#fbd150"/>
<polygon points="39.6,24.2 47.2,21.0 51.4,31.0 43.7,34.2" fill="#9d6c00"/>
<polygon points="39.7,24.6 47.4,21.4 50.7,29.4 43.0,32.6" fill="#e09a00"/>
<polygon points="40.0,25.3 47.7,22.1 49.7,27.1 42.1,30.3" fill="#f8ab00"/>
<polygon points="40.5,26.5 48.2,23.3 49.0,25.3 41.4,28.5" fill="#fbd150"/>
<circle cx="136.0" cy="230.0" r="18.7" fill="url(#s220)"/>
<circle cx="141.6" cy="228.1" r="7.1" fill="url(#h68b)"/>
<polygon points="152.7,223.3 159.2,217.8 152.3,209.4 145.7,214.9" fill="#a10800"/>
<polygon points="152.4,222.9 159.0,217.5 153.4,210.8 146.8,216.2" fill="#e50b00"/>
<polygon points="151.9,222.4 158.5,216.9 155.0,212.7 148.4,218.2" fill="#fe0c00"/>
<polygon points="151.1,221.4 157.6,215.9 156.2,214.2 149.7,219.7" fill="#ff7950"/>
<polygon points="131.4,242.3 126.9,246.7 118.9,238.4 123.6,234.1" fill="#a10800"/>
<polygon points="131.1,241.9 126.6,246.4 120.2,239.7 124.9,235.4" fill="#e50b00"/>
<polygon points="130.6,241.4 126.0,245.8 122.0,241.7 126.7,237.3" fill="#fe0c00"/>
<polygon points="129.6,240.4 125.0,244.8 123.5,243.2 128.1,238.7" fill="#ff7950"/>
<polygon points="34.1,226.2 51.8,222.6 54.0,232.6 36.4,236.8" fill="#9f2000"/>
<polygon points="34.2,226.6 51.8,223.0 53.6,231.0 36.1,235.1" fill="#e42e00"/>
<polygon points="34.4,227.3 52.0,223.7 53.1,228.7 35.5,232.6" fill="#fd3300"/>
<polygon points="34.7,228.6 52.3,224.9 52.7,226.9 35.1,230.7" fill="#fe8f50"/>
<circle cx="35.3" cy="231.5" r="18.8" fill="url(#s221)"/>
<circle cx="36.1" cy="229.7" r="7.1" fill="url(#h69b)"/>
<polygon points="44.7,237.3 47.1,241.8 36.9,247.1 34.6,242.5" fill="#9f2000"/>
<polygon points="44.3,237.5 46.7,242.0 38.5,246.2 36.2,241.7" fill="#e42e00"/>
<polygon points="43.6,237.9 46.0,242.4 40.9,245.0 38.6,240.5" fill="#fd3300"/>
<polygon points="42.4,238.5 44.8,243.0 42.7,244.1 40.4,239.5" fill="#fe8f50"/>
<polygon points="24.6,216.7 17.6,211.4 11.0,220.2 18.0,225.4" fill="#9f2000"/>
<polygon points="24.3,217.0 17.3,211.8 12.1,218.8 19.1,224.0" fill="#e42e00"/>
<polygon points="23.9,217.6 16.9,212.4 13.6,216.8 20.6,222.0" fill="#fd3300"/>
<polygon points="23.1,218.7 16.1,213.5 14.8,215.2 21.8,220.4" fill="#fe8f50"/>
<polygon points="179.1,201.3 159.2,217.8 152.3,209.4 172.1,192.9" fill="#a10000"/>
<polygon points="178.9,201.0 159.0,217.5 153.4,210.8 173.3,194.2" fill="#e60000"/>
<polygon points="178.4,200.4 158.5,216.9 155.0,212.7 174.9,196.2" fill="#ff0000"/>
<polygon points="177.5,199.4 157.6,215.9 156.2,214.2 176.1,197.7" fill="#ff7350"/>
<circle cx="175.6" cy="197.1" r="18.9" fill="url(#s222)"/>
<circle cx="183.2" cy="193.8" r="7.2" fill="url(#h65b)"/>
<polygon points="184.8,196.8 187.8,194.4 180.2,185.5 177.4,188.1" fill="#a10000"/>
<polygon points="184.5,196.5 187.5,194.1 181.4,187.0 178.6,189.5" fill="#e60000"/>
<polygon points="184.0,195.9 187.0,193.5 183.2,189.0 180.3,191.5" fill="#ff0000"/>
<polygon points="183.1,194.8 186.1,192.4 184.6,190.6 181.6,193.1" fill="#ff7350"/>
<polygon points="73.9,11.0 92.3,15.8 89.9,25.9 71.3,21.7" fill="#9d7100"/>
<polygon points="73.8,11.5 92.2,16.2 90.3,24.3 71.7,20.0" fill="#e0a100"/>
<polygon points="73.6,12.2 92.1,16.9 90.9,22.0 72.3,17.5" fill="#f8b200"/>
<polygon points="73.3,13.5 91.8,18.1 91.3,20.1 72.8,15.6" fill="#fbd550"/>
<polygon points="70.5,11.3 47.2,21.0 51.4,31.0 74.7,21.4" fill="#9d7100"/>
<polygon points="70.7,11.7 47.4,21.4 50.7,29.4 74.0,19.8" fill="#e0a100"/>
<polygon points="70.9,12.4 47.7,22.1 49.7,27.1 73.0,17.5" fill="#f8b200"/>
<polygon points="71.5,13.6 48.2,23.3 49.0,25.3 72.3,15.7" fill="#fbd550"/>
<circle cx="72.6" cy="16.4" r="18.9" fill="url(#s223)"/>
<circle cx="75.2" cy="5.5" r="7.2" fill="url(#h43b)"/>
<polygon points="72.8,8.4 75.0,6.3 82.8,15.0 80.5,16.9" fill="#9d7100"/>
<polygon points="73.2,8.8 75.3,6.7 81.6,13.6 79.3,15.6" fill="#e0a100"/>
<polygon points="73.7,9.4 75.8,7.3 79.8,11.6 77.5,13.6" fill="#f8b200"/>
<polygon points="74.6,10.4 76.8,8.3 78.4,10.1 76.1,12.1" fill="#fbd550"/>
<polygon points="-3.6,195.5 17.6,211.4 11.0,220.2 -10.2,204.4" fill="#9f2d00"/>
<polygon points="-3.9,195.9 17.3,211.8 12.1,218.8 -9.2,203.0" fill="#e34000"/>
<polygon points="-4.3,196.5 16.9,212.4 13.6,216.8 -7.6,200.9" fill="#fc4700"/>
<polygon points="-5.1,197.6 16.1,213.5 14.8,215.2 -6.5,199.3" fill="#fd9a50"/>
<circle cx="-6.9" cy="200.0" r="19.0" fill="url(#s224)"/>
<circle cx="-8.1" cy="196.8" r="7.2" fill="url(#h54b)"/>
<polygon points="-17.5,191.9 -23.9,190.4 -26.3,202.0 -19.9,203.2" fill="#9f2d00"/>
<polygon points="-17.6,192.3 -24.0,190.9 -26.0,200.1 -19.5,201.4" fill="#e34000"/>
<polygon points="-17.8,193.1 -24.2,191.7 -25.4,197.4 -19.0,198.8" fill="#fc4700"/>
<polygon points="-18.1,194.5 -24.5,193.1 -25.0,195.4 -18.5,196.7" fill="#fd9a50"/>
<circle cx="193.9" cy="96.6" r="19.2" fill="url(#s225)"/>
<circle cx="202.5" cy="89.0" r="7.3" fill="url(#h35b)"/>
<polygon points="190.0,78.4 185.7,70.7 176.0,76.2 180.3,83.9" fill="#9c7f00"/>
<polygon points="189.7,78.6 185.3,71.0 177.5,75.4 181.9,83.0" fill="#dfb500"/>
<polygon points="189.0,79.0 184.6,71.3 179.8,74.1 184.1,81.8" fill="#f8c900"/>
<polygon points="187.8,79.7 183.4,72.0 181.5,73.1 185.9,80.8" fill="#fbe150"/>
<polygon points="202.2,102.7 203.8,107.0 192.6,110.8 191.2,106.5" fill="#9c7f00"/>
<polygon points="201.7,102.9 203.3,107.2 194.3,110.2 192.9,105.9" fill="#dfb500"/>
<polygon points="201.0,103.1 202.5,107.4 196.9,109.3 195.5,105.0" fill="#f8c900"/>
<polygon points="199.6,103.6 201.2,107.9 198.9,108.7 197.4,104.3" fill="#fbe150"/>
<polygon points="172.5,47.6 185.7,70.7 176.0,76.2 162.8,53.1" fill="#9c7a00"/>
<polygon points="172.1,47.8 185.3,71.0 177.5,75.4 164.4,52.2" fill="#dfaf00"/>
<polygon points="171.5,48.2 184.6,71.3 179.8,74.1 166.6,50.9" fill="#f8c200"/>
<polygon points="170.3,48.8 183.4,72.0 181.5,73.1 168.3,49.9" fill="#fbdd50"/>
<circle cx="167.7" cy="50.3" r="19.3" fill="url(#s226)"/>
<circle cx="175.0" cy="40.7" r="7.3" fill="url(#h36b)"/>
<polygon points="164.3,37.9 160.2,33.2 151.4,41.2 155.6,45.7" fill="#9c7a00"/>
<polygon points="163.9,38.2 159.8,33.6 152.8,40.0 157.0,44.5" fill="#dfaf00"/>
<polygon points="163.3,38.8 159.2,34.1 154.8,38.1 159.0,42.7" fill="#f8c200"/>
<polygon points="162.3,39.7 158.1,35.1 156.4,36.7 160.5,41.3" fill="#fbdd50"/>
<circle cx="-35.2" cy="99.1" r="20.0" fill="url(#s227)"/>
<circle cx="-37.9" cy="91.3" r="7.6" fill="url(#h46b)"/>
<polygon points="-48.9,105.7 -53.9,111.4 -44.6,119.4 -39.8,113.6" fill="#9e4500"/>
<polygon points="-48.5,106.1 -53.5,111.7 -46.1,118.1 -41.2,112.3" fill="#e26300"/>
<polygon points="-47.9,106.6 -52.9,112.2 -48.2,116.2 -43.3,110.5" fill="#fa6d00"/>
<polygon points="-46.8,107.5 -51.7,113.2 -49.9,114.8 -45.0,109.1" fill="#fcaf50"/>
<polygon points="-33.5,80.4 -29.9,72.1 -19.1,76.8 -22.7,85.1" fill="#9e4500"/>
<polygon points="-33.0,80.6 -29.5,72.3 -20.8,76.0 -24.5,84.3" fill="#e26300"/>
<polygon points="-32.3,80.9 -28.7,72.6 -23.3,75.0 -26.9,83.2" fill="#fa6d00"/>
<polygon points="-31.0,81.5 -27.4,73.2 -25.3,74.1 -28.9,82.4" fill="#fcaf50"/>
<polygon points="-18.9,46.7 -29.9,72.1 -19.1,76.8 -8.0,51.4" fill="#9d5400"/>
<polygon points="-18.5,46.9 -29.5,72.3 -20.8,76.0 -9.7,50.7" fill="#e17700"/>
<polygon points="-17.7,47.2 -28.7,72.6 -23.3,75.0 -12.3,49.6" fill="#f98400"/>
<polygon points="-16.4,47.8 -27.4,73.2 -25.3,74.1 -14.2,48.7" fill="#fcbc50"/>
<polygon points="-15.4,43.4 5.8,36.6 9.4,47.3 -11.5,54.7" fill="#9d5400"/>
<polygon points="-15.2,43.9 5.9,37.0 8.8,45.6 -12.1,52.9" fill="#e17700"/>
<polygon points="-15.0,44.7 6.2,37.7 8.0,43.1 -13.0,50.3" fill="#f98400"/>
<polygon points="-14.5,46.0 6.6,39.0 7.3,41.2 -13.7,48.3" fill="#fcbc50"/>
<circle cx="-13.5" cy="49.1" r="20.6" fill="url(#s228)"/>
<circle cx="-15.1" cy="38.8" r="7.8" fill="url(#h70b)"/>
<polygon points="-9.5,39.1 -10.5,34.5 -23.0,37.7 -21.7,42.2" fill="#9d5400"/>
<polygon points="-10.0,39.3 -11.0,34.6 -21.0,37.2 -19.7,41.7" fill="#e17700"/>
<polygon points="-10.9,39.5 -11.9,34.8 -18.1,36.4 -16.9,41.0" fill="#f98400"/>
<polygon points="-12.3,39.8 -13.4,35.2 -15.9,35.8 -14.7,40.5" fill="#fcbc50"/>
<polygon points="112.3,261.2 126.9,246.7 118.9,238.4 103.8,252.3" fill="#a00a00"/>
<polygon points="111.9,260.9 126.6,246.4 120.2,239.7 105.1,253.8" fill="#e50e00"/>
<polygon points="111.3,260.2 126.0,245.8 122.0,241.7 107.1,255.8" fill="#fe1000"/>
<polygon points="110.3,259.2 125.0,244.8 123.5,243.2 108.6,257.4" fill="#ff7b50"/>
<circle cx="108.0" cy="256.8" r="21.2" fill="url(#s229)"/>
<circle cx="112.8" cy="255.9" r="8.0" fill="url(#h71b)"/>
<polygon points="118.2,253.9 122.6,255.4 117.8,267.7 113.5,265.8" fill="#a00a00"/>
<polygon points="118.0,254.4 122.4,255.9 118.5,265.7 114.3,263.9" fill="#e50e00"/>
<polygon points="117.7,255.2 122.0,256.8 119.6,262.9 115.4,261.2" fill="#fe1000"/>
<polygon points="117.1,256.6 121.5,258.2 120.5,260.7 116.2,259.0" fill="#ff7b50"/>
<polygon points="88.3,251.4 78.6,251.8 79.1,264.1 88.8,263.7" fill="#a00a00"/>
<polygon points="88.3,251.9 78.6,252.3 79.0,262.1 88.7,261.7" fill="#e50e00"/>
<polygon points="88.3,252.8 78.7,253.1 78.9,259.3 88.6,258.9" fill="#fe1000"/>
<polygon points="88.4,254.2 78.7,254.6 78.8,257.1 88.5,256.7" fill="#ff7b50"/>
<polygon points="49.4,252.9 78.6,251.8 79.1,264.1 49.9,265.2" fill="#a01600"/>
<polygon points="49.4,253.4 78.6,252.3 79.0,262.1 49.8,263.2" fill="#e42000"/>
<polygon points="49.4,254.3 78.7,253.1 78.9,259.3 49.7,260.4" fill="#fd2400"/>
<polygon points="49.5,255.7 78.7,254.6 78.8,257.1 49.6,258.2" fill="#fe8650"/>
<circle cx="49.6" cy="259.1" r="21.2" fill="url(#s230)"/>
<circle cx="51.3" cy="258.3" r="8.0" fill="url(#h51b)"/>
<polygon points="33.5,257.9 25.7,260.5 30.1,272.9 37.7,270.1" fill="#a01600"/>
<polygon points="33.6,258.4 25.9,261.0 29.4,270.9 37.0,268.1" fill="#e42000"/>
<polygon points="33.9,259.2 26.2,261.8 28.4,268.0 36.0,265.3" fill="#fd2400"/>
<polygon points="34.4,260.7 26.7,263.3 27.6,265.8 35.3,263.1" fill="#fe8650"/>
<circle cx="193.6" cy="181.8" r="21.5" fill="url(#s231)"/>
<circle cx="203.2" cy="177.4" r="8.2" fill="url(#h65b)"/>
<polygon points="202.9,163.3 204.4,153.5 192.0,151.5 190.5,161.3" fill="#a10000"/>
<polygon points="202.4,163.2 204.0,153.4 194.0,151.9 192.5,161.6" fill="#e60000"/>
<polygon points="201.5,163.1 203.1,153.3 196.9,152.3 195.3,162.1" fill="#ff0000"/>
<polygon points="200.0,162.8 201.6,153.1 199.1,152.7 197.6,162.4" fill="#ff7350"/>
<polygon points="197.0,195.4 195.5,202.0 182.6,198.8 184.3,192.3" fill="#a10000"/>
<polygon points="196.5,195.3 195.0,201.8 184.6,199.3 186.3,192.8" fill="#e60000"/>
<polygon points="195.6,195.0 194.1,201.6 187.6,200.0 189.3,193.5" fill="#ff0000"/>
<polygon points="194.1,194.7 192.6,201.2 190.0,200.6 191.5,194.0" fill="#ff7350"/>
<circle cx="86.1" cy="4.2" r="21.6" fill="url(#s232)"/>
<circle cx="89.8" cy="-8.8" r="8.2" fill="url(#h38b)"/>
<polygon points="106.7,4.2 116.0,7.2 112.1,19.2 102.8,16.2" fill="#9d6700"/>
<polygon points="106.5,4.7 115.8,7.7 112.7,17.3 103.4,14.3" fill="#e09300"/>
<polygon points="106.2,5.5 115.5,8.5 113.6,14.5 104.3,11.5" fill="#f9a300"/>
<polygon points="105.8,7.0 115.1,10.0 114.3,12.4 105.0,9.4" fill="#fbcc50"/>
<polygon points="72.8,-5.8 64.8,-8.0 61.6,5.0 69.7,6.9" fill="#9d6700"/>
<polygon points="72.7,-5.3 64.7,-7.4 62.1,3.0 70.2,4.9" fill="#e09300"/>
<polygon points="72.5,-4.4 64.4,-6.5 62.8,-0.0 70.9,1.9" fill="#f9a300"/>
<polygon points="72.1,-2.9 64.0,-5.0 63.4,-2.4 71.5,-0.4" fill="#fbcc50"/>
<polygon points="209.2,123.9 204.4,153.5 192.0,151.5 196.7,121.9" fill="#a10000"/>
<polygon points="208.7,123.8 204.0,153.4 194.0,151.9 198.7,122.2" fill="#e60000"/>
<polygon points="207.8,123.7 203.1,153.3 196.9,152.3 201.6,122.7" fill="#ff0000"/>
<polygon points="206.3,123.4 201.6,153.1 199.1,152.7 203.8,123.0" fill="#ff7350"/>
<circle cx="202.9" cy="122.9" r="21.8" fill="url(#s233)"/>
<circle cx="213.1" cy="115.6" r="8.3" fill="url(#h65b)"/>
<polygon points="209.1,112.3 209.0,106.7 195.4,107.3 195.8,112.9" fill="#a10000"/>
<polygon points="208.5,112.3 208.4,106.7 197.5,107.2 197.9,112.8" fill="#e60000"/>
<polygon points="207.6,112.4 207.5,106.7 200.7,107.1 201.0,112.7" fill="#ff0000"/>
<polygon points="206.0,112.4 205.8,106.8 203.1,106.9 203.4,112.6" fill="#ff7350"/>
<polygon points="-44.7,185.6 -23.9,190.4 -26.3,202.0 -47.3,198.0" fill="#9f2d00"/>
<polygon points="-44.9,186.1 -24.0,190.9 -26.0,200.1 -46.9,196.0" fill="#e34000"/>
<polygon points="-45.0,187.0 -24.2,191.7 -25.4,197.4 -46.3,193.2" fill="#fc4700"/>
<polygon points="-45.3,188.5 -24.5,193.1 -25.0,195.4 -45.9,191.0" fill="#fd9a50"/>
<circle cx="-46.0" cy="191.8" r="21.8" fill="url(#s234)"/>
<circle cx="-49.6" cy="187.8" r="8.3" fill="url(#h54b)"/>
<polygon points="-42.3,207.0 -43.7,214.5 -56.9,211.9 -55.3,204.4" fill="#9f2d00"/>
<polygon points="-42.9,206.9 -44.2,214.4 -54.8,212.3 -53.2,204.8" fill="#e34000"/>
<polygon points="-43.8,206.7 -45.2,214.2 -51.8,212.9 -50.2,205.4" fill="#fc4700"/>
<polygon points="-45.3,206.4 -46.7,213.9 -49.4,213.4 -47.9,205.8" fill="#fd9a50"/>
<polygon points="-46.2,170.8 -49.3,161.2 -61.5,165.1 -58.3,174.7" fill="#9f2d00"/>
<polygon points="-46.6,170.9 -49.7,161.3 -59.5,164.5 -56.4,174.1" fill="#e34000"/>
<polygon points="-47.5,171.2 -50.6,161.6 -56.7,163.6 -53.6,173.2" fill="#fc4700"/>
<polygon points="-49.0,171.7 -52.1,162.1 -54.5,162.9 -51.4,172.5" fill="#fd9a50"/>
<polygon points="144.2,16.3 116.0,7.2 112.1,19.2 140.3,28.4" fill="#9d6c00"/>
<polygon points="144.0,16.8 115.8,7.7 112.7,17.3 140.9,26.5" fill="#e09a00"/>
<polygon points="143.8,17.6 115.5,8.5 113.6,14.5 141.8,23.7" fill="#f8ab00"/>
<polygon points="143.3,19.1 115.1,10.0 114.3,12.4 142.5,21.5" fill="#fbd150"/>
<circle cx="142.2" cy="22.4" r="21.9" fill="url(#s235)"/>
<circle cx="149.1" cy="10.1" r="8.3" fill="url(#h49b)"/>
<polygon points="150.6,18.1 154.2,19.1 149.9,32.1 146.5,30.8" fill="#9d6c00"/>
<polygon points="150.5,18.6 154.0,19.6 150.6,30.0 147.2,28.7" fill="#e09a00"/>
<polygon points="150.2,19.5 153.7,20.5 151.6,27.0 148.1,25.8" fill="#f8ab00"/>
<polygon points="149.7,21.0 153.2,22.1 152.4,24.7 148.9,23.5" fill="#fbd150"/>
<circle cx="-11.6" cy="20.9" r="24.0" fill="url(#s236)"/>
<circle cx="-13.5" cy="7.4" r="9.1" fill="url(#h42b)"/>
<polygon points="-40.6,19.2 -50.3,22.0 -46.1,36.3 -36.4,33.2" fill="#9d4f00"/>
<polygon points="-40.4,19.8 -50.2,22.5 -46.8,34.0 -37.1,31.0" fill="#e17000"/>
<polygon points="-40.1,20.8 -49.9,23.5 -47.7,30.7 -38.0,27.8" fill="#f97d00"/>
<polygon points="-39.6,22.5 -49.3,25.3 -48.5,28.1 -38.8,25.3" fill="#fcb750"/>
<polygon points="-4.9,5.2 4.6,0.4 10.9,13.0 1.4,17.8" fill="#9d4f00"/>
<polygon points="-4.7,5.7 4.8,0.9 9.9,11.0 0.4,15.8" fill="#e17000"/>
<polygon points="-4.2,6.6 5.3,1.8 8.4,8.1 -1.1,12.9" fill="#f97d00"/>
<polygon points="-3.5,8.1 6.0,3.3 7.3,5.8 -2.2,10.6" fill="#fcb750"/>
<circle cx="134.2" cy="267.0" r="24.5" fill="url(#s237)"/>
<circle cx="141.4" cy="266.6" r="9.3" fill="url(#h65b)"/>
<polygon points="155.5,257.3 163.7,249.8 154.0,239.2 145.8,246.7" fill="#a10000"/>
<polygon points="155.1,256.9 163.3,249.3 155.6,240.9 147.4,248.4" fill="#e60000"/>
<polygon points="154.4,256.1 162.6,248.6 157.8,243.3 149.6,250.8" fill="#ff0000"/>
<polygon points="153.2,254.9 161.5,247.3 159.5,245.2 151.3,252.7" fill="#ff7350"/>
<polygon points="0.4,268.8 25.7,260.5 30.1,272.9 5.1,282.2" fill="#a01600"/>
<polygon points="0.5,269.3 25.9,261.0 29.4,270.9 4.3,280.1" fill="#e42000"/>
<polygon points="0.9,270.3 26.2,261.8 28.4,268.0 3.2,277.0" fill="#fd2400"/>
<polygon points="1.4,271.9 26.7,263.3 27.6,265.8 2.4,274.6" fill="#fe8650"/>
<circle cx="2.7" cy="275.5" r="24.5" fill="url(#s238)"/>
<circle cx="1.7" cy="275.5" r="9.3" fill="url(#h51b)"/>
<polygon points="-12.5,257.0 -22.1,250.7 -29.9,262.7 -20.3,269.0" fill="#a01600"/>
<polygon points="-12.8,257.5 -22.4,251.2 -28.7,260.8 -19.1,267.1" fill="#e42000"/>
<polygon points="-13.4,258.3 -22.9,252.0 -26.9,258.0 -17.3,264.3" fill="#fd2400"/>
<polygon points="-14.3,259.8 -23.9,253.5 -25.5,255.9 -15.9,262.1" fill="#fe8650"/>
<polygon points="38.7,-14.9 64.8,-8.0 61.6,5.0 35.2,-0.9" fill="#9d5800"/>
<polygon points="38.5,-14.3 64.7,-7.4 62.1,3.0 35.8,-3.2" fill="#e17e00"/>
<polygon points="38.3,-13.3 64.4,-6.5 62.8,-0.0 36.6,-6.4" fill="#f98c00"/>
<polygon points="37.9,-11.7 64.0,-5.0 63.4,-2.4 37.2,-8.9" fill="#fcc050"/>
<polygon points="33.7,-14.3 4.6,0.4 10.9,13.0 40.2,-1.5" fill="#9d5800"/>
<polygon points="34.0,-13.8 4.8,0.9 9.9,11.0 39.1,-3.5" fill="#e17e00"/>
<polygon points="34.5,-12.9 5.3,1.8 8.4,8.1 37.7,-6.5" fill="#f98c00"/>
<polygon points="35.2,-11.4 6.0,3.3 7.3,5.8 36.5,-8.8" fill="#fcc050"/>
<circle cx="37.0" cy="-7.9" r="24.7" fill="url(#s239)"/>
<circle cx="38.1" cy="-23.4" r="9.4" fill="url(#h41b)"/>
<polygon points="33.4,-18.1 35.1,-22.0 49.2,-15.2 47.1,-11.5" fill="#9d5800"/>
<polygon points="34.0,-17.8 35.6,-21.7 46.9,-16.3 44.9,-12.5" fill="#e17e00"/>
<polygon points="35.0,-17.3 36.6,-21.2 43.7,-17.8 41.8,-14.0" fill="#f98c00"/>
<polygon points="36.6,-16.5 38.3,-20.4 41.1,-19.0 39.3,-15.2" fill="#fcc050"/>
<polygon points="188.7,227.0 163.7,249.8 154.0,239.2 179.0,216.4" fill="#a10000"/>
<polygon points="188.3,226.6 163.3,249.3 155.6,240.9 180.5,218.1" fill="#e60000"/>
<polygon points="187.6,225.8 162.6,248.6 157.8,243.3 182.8,220.5" fill="#ff0000"/>
<polygon points="186.4,224.5 161.5,247.3 159.5,245.2 184.5,222.4" fill="#ff7350"/>
<circle cx="183.8" cy="221.7" r="24.8" fill="url(#s240)"/>
<circle cx="194.2" cy="218.7" r="9.4" fill="url(#h65b)"/>
<circle cx="201.3" cy="88.5" r="25.4" fill="url(#s241)"/>
<circle cx="213.0" cy="78.0" r="9.6" fill="url(#h38b)"/>
<polygon points="194.9,64.8 188.6,55.0 176.2,62.9 182.4,72.7" fill="#9d6700"/>
<polygon points="194.4,65.1 188.1,55.3 178.2,61.6 184.4,71.4" fill="#e09300"/>
<polygon points="193.5,65.6 187.2,55.8 181.0,59.8 187.3,69.6" fill="#f9a300"/>
<polygon points="192.0,66.6 185.7,56.8 183.2,58.4 189.5,68.2" fill="#fbcc50"/>
<polygon points="212.9,95.4 215.7,100.9 201.1,107.5 198.8,101.8" fill="#9d6700"/>
<polygon points="212.4,95.6 215.1,101.2 203.5,106.5 201.1,100.8" fill="#e09300"/>
<polygon points="211.4,96.1 214.1,101.6 206.8,104.9 204.3,99.3" fill="#f9a300"/>
<polygon points="209.7,96.9 212.3,102.4 209.4,103.7 206.8,98.1" fill="#fbcc50"/>
<polygon points="169.7,25.3 188.6,55.0 176.2,62.9 157.2,33.3" fill="#9d6200"/>
<polygon points="169.2,25.7 188.1,55.3 178.2,61.6 159.2,32.0" fill="#e08c00"/>
<polygon points="168.3,26.2 187.2,55.8 181.0,59.8 162.1,30.2" fill="#f99b00"/>
<polygon points="166.8,27.2 185.7,56.8 183.2,58.4 164.3,28.8" fill="#fcc850"/>
<circle cx="163.5" cy="29.3" r="25.4" fill="url(#s242)"/>
<circle cx="172.8" cy="15.5" r="9.7" fill="url(#h39b)"/>
<polygon points="158.2,12.1 152.3,5.3 140.5,16.2 146.7,22.6" fill="#9d6200"/>
<polygon points="157.7,12.5 151.8,5.8 142.4,14.5 148.6,21.0" fill="#e08c00"/>
<polygon points="156.9,13.3 151.0,6.5 145.1,12.0 151.2,18.5" fill="#f99b00"/>
<polygon points="155.6,14.5 149.6,7.8 147.2,10.0 153.3,16.6" fill="#fcc850"/>
<circle cx="48.3" cy="-31.3" r="29.6" fill="url(#s243)"/>
<circle cx="50.6" cy="-51.4" r="11.3" fill="url(#h42b)"/>
<polygon points="76.2,-33.1 89.0,-29.8 84.7,-13.0 71.8,-16.3" fill="#9d4f00"/>
<polygon points="76.0,-32.4 88.9,-29.1 85.4,-15.7 72.5,-19.0" fill="#e17000"/>
<polygon points="75.7,-31.2 88.6,-27.9 86.4,-19.5 73.5,-22.9" fill="#f97d00"/>
<polygon points="75.2,-29.2 88.1,-25.9 87.2,-22.5 74.3,-25.9" fill="#fcb750"/>
<circle cx="216.9" cy="122.9" r="30.1" fill="url(#s244)"/>
<circle cx="232.0" cy="112.7" r="11.4" fill="url(#h65b)"/>
<polygon points="128.3,-19.7 89.0,-29.8 84.7,-13.0 124.0,-2.7" fill="#9d5400"/>
<polygon points="128.2,-19.0 88.9,-29.1 85.4,-15.7 124.7,-5.5" fill="#e17700"/>
<polygon points="127.9,-17.8 88.6,-27.9 86.4,-19.5 125.7,-9.4" fill="#f98400"/>
<polygon points="127.3,-15.8 88.1,-25.9 87.2,-22.5 126.5,-12.4" fill="#fcbc50"/>
<polygon points="132.6,-17.1 152.3,5.3 140.5,16.2 119.7,-5.3" fill="#9d5400"/>
<polygon points="132.1,-16.7 151.8,5.8 142.4,14.5 121.8,-7.2" fill="#e17700"/>
<polygon points="131.2,-15.8 151.0,6.5 145.1,12.0 124.7,-9.9" fill="#f98400"/>
<polygon points="129.6,-14.4 149.6,7.8 147.2,10.0 127.0,-12.0" fill="#fcbc50"/>
<circle cx="126.1" cy="-11.2" r="30.1" fill="url(#s245)"/>
<circle cx="134.4" cy="-30.3" r="11.5" fill="url(#h70b)"/></svg>
</div>

<!-- messages strip -->
<div class="a" style="left:322.3px;top:357px;width:287.4px;height:5.8px;background:#e0e0e0;border:0.6px solid #cdcdcd;border-radius:1.5px;box-sizing:border-box;"></div>
<div class="a" style="left:419.2px;top:356.3px;width:93.3px;height:12.4px;border-radius:2.5px;background:linear-gradient(#c4e0fa,#7ab6f0 50%,#4e9ce8 52%,#a4d4fa);border:0.8px solid #3f5f9a;box-sizing:border-box;"></div>
<div class="t" style="left:446.6px;top:357.7px;font-size:8.4px;">Messages</div>

<!-- resize grip -->
<svg class="a" style="left:608px;top:381px;" width="9" height="9" viewBox="0 0 9 9"><path d="M8.5 1L1 8.5M8.5 4L4 8.5M8.5 7L7 8.5" stroke="#8a8a8a" stroke-width="0.8"/></svg>
</body>
</html>
